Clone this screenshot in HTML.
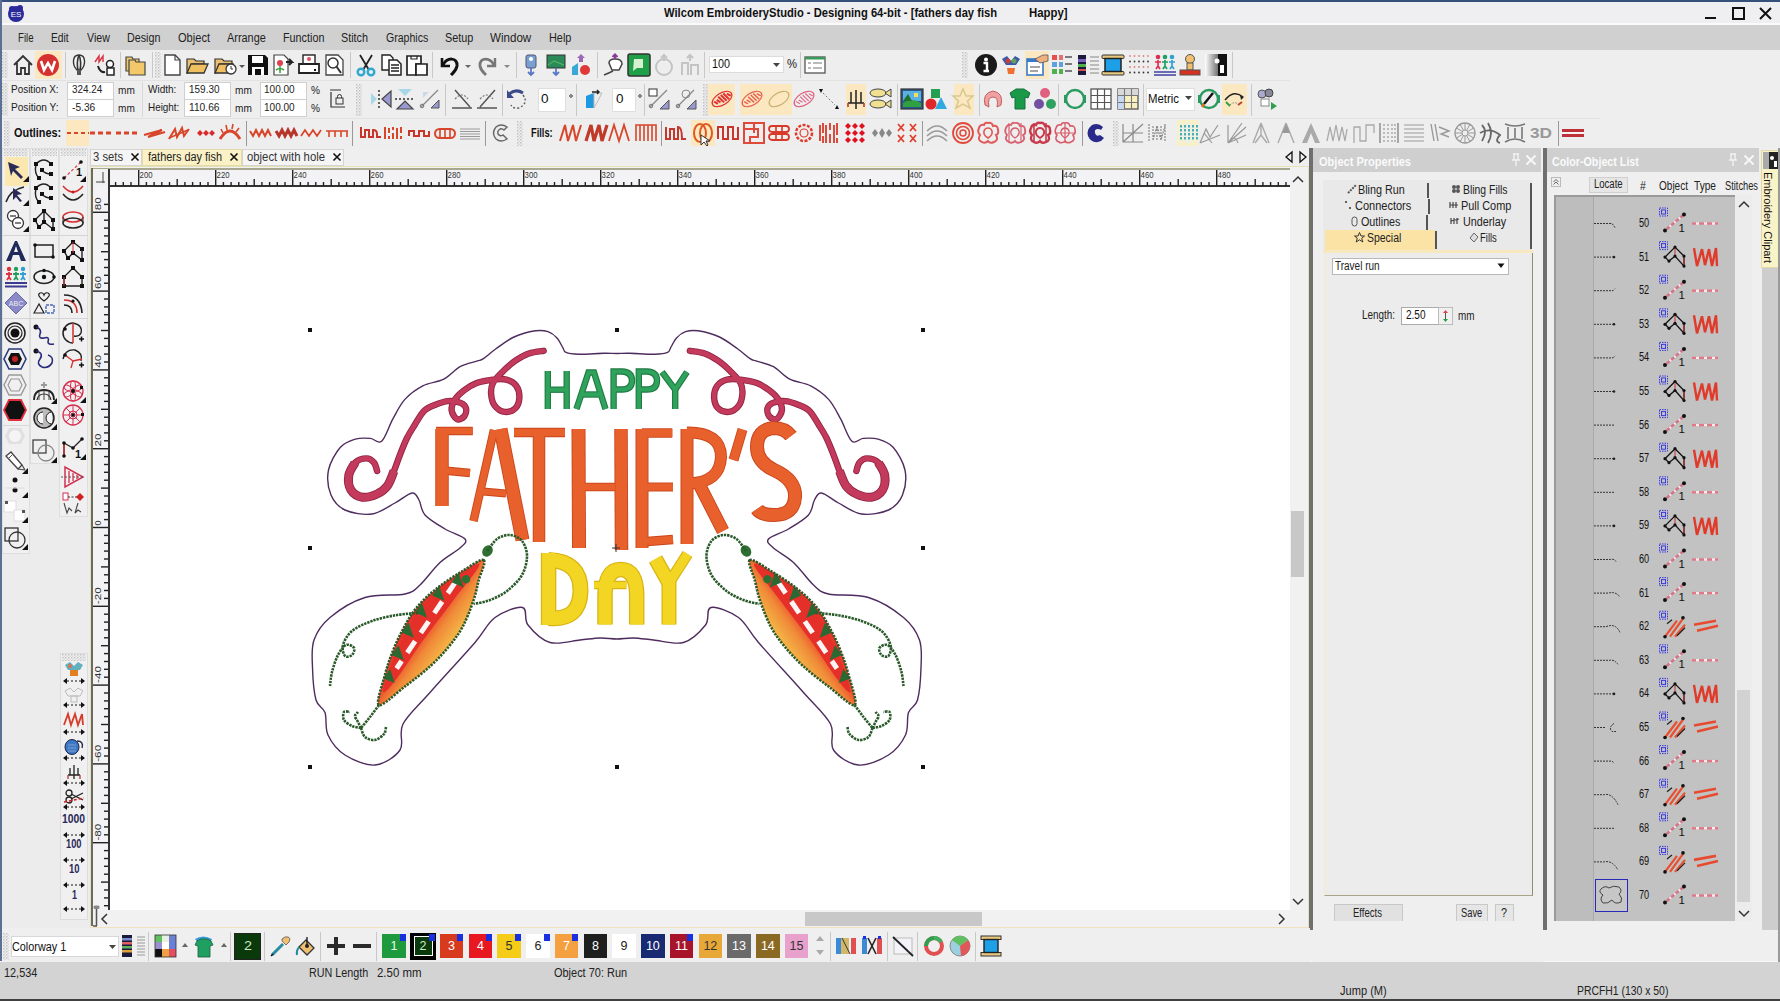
<!DOCTYPE html>
<html><head><meta charset="utf-8"><style>
html,body{margin:0;padding:0;width:1780px;height:1001px;overflow:hidden;background:#efefef}
body{position:relative;font-family:"Liberation Sans", sans-serif}
.t{position:absolute;white-space:nowrap;line-height:1;font-family:"Liberation Sans", sans-serif}
svg{overflow:visible}
</style></head><body>
<div style="position:absolute;left:0px;top:0px;width:1780px;height:1001px;background:#efefef"></div>
<div style="position:absolute;left:0px;top:0px;width:1780px;height:25px;background:#efeff1"></div>
<div style="position:absolute;left:0px;top:0px;width:1780px;height:1.5px;background:#35507a"></div>
<div style="position:absolute;left:0px;top:23px;width:1780px;height:1.5px;background:#fafafa"></div>
<div style="position:absolute;left:0px;top:24.5px;width:1780px;height:25.5px;background:#d0d0d0"></div>
<div style="position:absolute;left:0px;top:50px;width:1780px;height:98px;background:#eeeeee"></div>
<div style="position:absolute;left:0px;top:80px;width:1290px;height:1px;background:#e2e2e2"></div>
<div style="position:absolute;left:0px;top:118px;width:1600px;height:1px;background:#e2e2e2"></div>
<div style="position:absolute;left:0px;top:0px;width:2px;height:1001px;background:#5c6f94"></div>
<div style="position:absolute;left:0px;top:961px;width:1780px;height:40px;background:#d3d3d3"></div>
<div style="position:absolute;left:0px;top:999px;width:1780px;height:2px;background:#404040"></div>
<div style="position:absolute;left:0px;top:961px;width:1780px;height:1px;background:#f8f8f8"></div>
<div class="t" style="left:664.0px;top:6.6px;font-size:12.5px;color:#111;font-weight:bold;transform:scaleX(0.895);transform-origin:0 0;">Wilcom EmbroideryStudio - Designing 64-bit - [fathers day fish</div>
<div class="t" style="left:1029.0px;top:6.6px;font-size:12.5px;color:#111;font-weight:bold;transform:scaleX(0.911);transform-origin:0 0;">Happy]</div>
<svg style="position:absolute;left:6px;top:4px;" width="20" height="20" viewBox="0 0 20 20"><circle cx="10" cy="10" r="8" fill="#2a2a9a"/><circle cx="6" cy="5" r="3" fill="#2a2a9a"/><circle cx="14" cy="4" r="3" fill="#2a2a9a"/><text x="10" y="13" font-size="8" fill="#fff" text-anchor="middle" font-family="Liberation Sans">ES</text></svg>
<svg style="position:absolute;left:1703px;top:6px;" width="16" height="16" viewBox="0 0 16 16"><rect x="2" y="11" width="11" height="2" fill="#111"/></svg>
<svg style="position:absolute;left:1731px;top:6px;" width="16" height="16" viewBox="0 0 16 16"><rect x="2" y="2" width="11" height="11" fill="none" stroke="#111" stroke-width="2"/></svg>
<svg style="position:absolute;left:1758px;top:6px;" width="16" height="16" viewBox="0 0 16 16"><path d="M2 2L13 13M13 2L2 13" stroke="#111" stroke-width="2"/></svg>
<div class="t" style="left:18.2px;top:31.6px;font-size:12.5px;color:#222;font-weight:normal;transform:scaleX(0.770);transform-origin:0 0;">File</div>
<div class="t" style="left:51.4px;top:31.6px;font-size:12.5px;color:#222;font-weight:normal;transform:scaleX(0.822);transform-origin:0 0;">Edit</div>
<div class="t" style="left:86.8px;top:31.6px;font-size:12.5px;color:#222;font-weight:normal;transform:scaleX(0.849);transform-origin:0 0;">View</div>
<div class="t" style="left:126.7px;top:31.6px;font-size:12.5px;color:#222;font-weight:normal;transform:scaleX(0.858);transform-origin:0 0;">Design</div>
<div class="t" style="left:177.8px;top:31.6px;font-size:12.5px;color:#222;font-weight:normal;transform:scaleX(0.886);transform-origin:0 0;">Object</div>
<div class="t" style="left:226.7px;top:31.6px;font-size:12.5px;color:#222;font-weight:normal;transform:scaleX(0.873);transform-origin:0 0;">Arrange</div>
<div class="t" style="left:283.2px;top:31.6px;font-size:12.5px;color:#222;font-weight:normal;transform:scaleX(0.864);transform-origin:0 0;">Function</div>
<div class="t" style="left:341.4px;top:31.6px;font-size:12.5px;color:#222;font-weight:normal;transform:scaleX(0.864);transform-origin:0 0;">Stitch</div>
<div class="t" style="left:386.0px;top:31.6px;font-size:12.5px;color:#222;font-weight:normal;transform:scaleX(0.844);transform-origin:0 0;">Graphics</div>
<div class="t" style="left:445.0px;top:31.6px;font-size:12.5px;color:#222;font-weight:normal;transform:scaleX(0.869);transform-origin:0 0;">Setup</div>
<div class="t" style="left:490.2px;top:31.6px;font-size:12.5px;color:#222;font-weight:normal;transform:scaleX(0.927);transform-origin:0 0;">Window</div>
<div class="t" style="left:548.7px;top:31.6px;font-size:12.5px;color:#222;font-weight:normal;transform:scaleX(0.871);transform-origin:0 0;">Help</div>
<div class="t" style="left:11.1px;top:84.2px;font-size:11.5px;color:#222;font-weight:normal;transform:scaleX(0.866);transform-origin:0 0;">Position X:</div>
<div class="t" style="left:11.1px;top:102.0px;font-size:11.5px;color:#222;font-weight:normal;transform:scaleX(0.879);transform-origin:0 0;">Position Y:</div>
<div style="position:absolute;left:67.4px;top:82px;width:46.89999999999999px;height:17.5px;background:#fff;border:1px solid #cfcfcf;box-sizing:border-box"></div>
<div style="position:absolute;left:67.4px;top:99px;width:46.89999999999999px;height:17.5px;background:#fff;border:1px solid #cfcfcf;box-sizing:border-box"></div>
<div style="position:absolute;left:184px;top:82px;width:47.19999999999999px;height:17.5px;background:#fff;border:1px solid #cfcfcf;box-sizing:border-box"></div>
<div style="position:absolute;left:184px;top:99px;width:47.19999999999999px;height:17.5px;background:#fff;border:1px solid #cfcfcf;box-sizing:border-box"></div>
<div style="position:absolute;left:260.3px;top:82px;width:47.099999999999966px;height:17.5px;background:#fff;border:1px solid #cfcfcf;box-sizing:border-box"></div>
<div style="position:absolute;left:260.3px;top:99px;width:47.099999999999966px;height:17.5px;background:#fff;border:1px solid #cfcfcf;box-sizing:border-box"></div>
<div class="t" style="left:71.8px;top:84.2px;font-size:11.5px;color:#222;font-weight:normal;transform:scaleX(0.862);transform-origin:0 0;">324.24</div>
<div class="t" style="left:71.8px;top:102.0px;font-size:11.5px;color:#222;font-weight:normal;transform:scaleX(0.885);transform-origin:0 0;">-5.36</div>
<div class="t" style="left:118.3px;top:85.2px;font-size:11.5px;color:#222;font-weight:normal;transform:scaleX(0.877);transform-origin:0 0;">mm</div>
<div class="t" style="left:118.3px;top:103.0px;font-size:11.5px;color:#222;font-weight:normal;transform:scaleX(0.877);transform-origin:0 0;">mm</div>
<div style="position:absolute;left:142px;top:82px;width:1px;height:35px;background:#d8d8d8"></div>
<div class="t" style="left:147.7px;top:84.2px;font-size:11.5px;color:#222;font-weight:normal;transform:scaleX(0.868);transform-origin:0 0;">Width:</div>
<div class="t" style="left:147.7px;top:102.0px;font-size:11.5px;color:#222;font-weight:normal;transform:scaleX(0.859);transform-origin:0 0;">Height:</div>
<div class="t" style="left:188.5px;top:84.2px;font-size:11.5px;color:#222;font-weight:normal;transform:scaleX(0.867);transform-origin:0 0;">159.30</div>
<div class="t" style="left:188.5px;top:102.0px;font-size:11.5px;color:#222;font-weight:normal;transform:scaleX(0.889);transform-origin:0 0;">110.66</div>
<div class="t" style="left:234.6px;top:85.2px;font-size:11.5px;color:#222;font-weight:normal;transform:scaleX(0.877);transform-origin:0 0;">mm</div>
<div class="t" style="left:234.6px;top:103.0px;font-size:11.5px;color:#222;font-weight:normal;transform:scaleX(0.877);transform-origin:0 0;">mm</div>
<div class="t" style="left:264.4px;top:84.2px;font-size:11.5px;color:#222;font-weight:normal;transform:scaleX(0.870);transform-origin:0 0;">100.00</div>
<div class="t" style="left:264.4px;top:102.0px;font-size:11.5px;color:#222;font-weight:normal;transform:scaleX(0.870);transform-origin:0 0;">100.00</div>
<div class="t" style="left:311.0px;top:85.2px;font-size:11.5px;color:#222;font-weight:normal;transform:scaleX(0.880);transform-origin:0 0;">%</div>
<div class="t" style="left:311.0px;top:103.0px;font-size:11.5px;color:#222;font-weight:normal;transform:scaleX(0.880);transform-origin:0 0;">%</div>
<svg style="position:absolute;left:329px;top:88px;" width="17" height="22" viewBox="0 0 17 22"><path d="M1 2H12M2 4V19H16" fill="none" stroke="#333" stroke-width="1.2"/><rect x="7" y="10" width="7" height="6" fill="none" stroke="#333"/><path d="M8.5 10V8.5A2 2 0 0 1 12.5 8.5V10" fill="none" stroke="#333"/></svg>
<div class="t" style="left:3.7px;top:967.4px;font-size:12px;color:#222;font-weight:normal;transform:scaleX(0.907);transform-origin:0 0;">12,534</div>
<div class="t" style="left:308.5px;top:967.4px;font-size:12px;color:#222;font-weight:normal;transform:scaleX(0.898);transform-origin:0 0;">RUN Length</div>
<div class="t" style="left:377.0px;top:967.4px;font-size:12px;color:#222;font-weight:normal;transform:scaleX(0.955);transform-origin:0 0;">2.50 mm</div>
<div class="t" style="left:554.3px;top:967.4px;font-size:12px;color:#222;font-weight:normal;transform:scaleX(0.913);transform-origin:0 0;">Object 70: Run</div>
<div class="t" style="left:1340.0px;top:985.4px;font-size:12px;color:#222;font-weight:normal;transform:scaleX(0.922);transform-origin:0 0;">Jump (M)</div>
<div class="t" style="left:1577.0px;top:985.4px;font-size:12px;color:#222;font-weight:normal;transform:scaleX(0.867);transform-origin:0 0;">PRCFH1 (130 x 50)</div>
<div style="position:absolute;left:2px;top:148px;width:88px;height:20px;background:#efefef"></div>
<div style="position:absolute;left:90px;top:149px;width:52px;height:17px;background:#f5f5f5;border:1px solid #d4d4d4;box-sizing:border-box"></div>
<div style="position:absolute;left:142px;top:149px;width:100px;height:17px;background:#fbf1c6;border:1px solid #e4d9a8;box-sizing:border-box"></div>
<div style="position:absolute;left:242px;top:149px;width:102px;height:17px;background:#f5f5f5;border:1px solid #d4d4d4;box-sizing:border-box"></div>
<div class="t" style="left:93.0px;top:150.6px;font-size:12.5px;color:#333;font-weight:normal;transform:scaleX(0.900);transform-origin:0 0;">3 sets</div>
<div class="t" style="left:148.0px;top:150.6px;font-size:12.5px;color:#222;font-weight:normal;transform:scaleX(0.873);transform-origin:0 0;">fathers day fish</div>
<div class="t" style="left:247.0px;top:150.6px;font-size:12.5px;color:#333;font-weight:normal;transform:scaleX(0.905);transform-origin:0 0;">object with hole</div>
<svg style="position:absolute;left:129.5px;top:152px;" width="10" height="10" viewBox="0 0 10 10"><path d="M1.5 1.5L8.5 8.5M8.5 1.5L1.5 8.5" stroke="#111" stroke-width="1.6"/></svg>
<svg style="position:absolute;left:228.7px;top:152px;" width="10" height="10" viewBox="0 0 10 10"><path d="M1.5 1.5L8.5 8.5M8.5 1.5L1.5 8.5" stroke="#111" stroke-width="1.6"/></svg>
<svg style="position:absolute;left:331.7px;top:152px;" width="10" height="10" viewBox="0 0 10 10"><path d="M1.5 1.5L8.5 8.5M8.5 1.5L1.5 8.5" stroke="#111" stroke-width="1.6"/></svg>
<svg style="position:absolute;left:1284px;top:151px;" width="10" height="12" viewBox="0 0 10 12"><path d="M8 1L2 6L8 11Z" fill="none" stroke="#111" stroke-width="1.3"/></svg>
<svg style="position:absolute;left:1298px;top:151px;" width="10" height="12" viewBox="0 0 10 12"><path d="M2 1L8 6L2 11Z" fill="none" stroke="#111" stroke-width="1.3"/></svg>
<div style="position:absolute;left:90px;top:166px;width:1220px;height:762px;background:#f1f1f1"></div>
<div style="position:absolute;left:90px;top:166px;width:1220px;height:1px;background:#e6e2b8"></div>
<div style="position:absolute;left:90px;top:166px;width:1px;height:762px;background:#e6e2b8"></div>
<div style="position:absolute;left:1308px;top:166px;width:1px;height:762px;background:#e6e2b8"></div>
<div style="position:absolute;left:90px;top:927px;width:1220px;height:1px;background:#f0e2c0"></div>
<div style="position:absolute;left:109px;top:186px;width:1181px;height:724px;background:#ffffff"></div>
<div style="position:absolute;left:91px;top:169px;width:1199px;height:17px;background:#f3f3f6"></div>
<div style="position:absolute;left:91px;top:168px;width:1199px;height:1.5px;background:#a8a890"></div>
<div style="position:absolute;left:91px;top:185px;width:1199px;height:1.5px;background:#333"></div>
<div style="position:absolute;left:91px;top:169px;width:18px;height:741px;background:#f3f3f6"></div>
<div style="position:absolute;left:91px;top:168px;width:1.5px;height:742px;background:#8a8a78"></div>
<div style="position:absolute;left:108px;top:169px;width:1.5px;height:741px;background:#333"></div>
<svg style="position:absolute;left:0px;top:0px;pointer-events:none" width="1780" height="200" viewBox="0 0 1780 200"><rect x="114.9" y="182" width="1.4" height="4" fill="#222"/><rect x="122.6" y="182" width="1.4" height="4" fill="#222"/><rect x="130.3" y="182" width="1.4" height="4" fill="#222"/><rect x="138.0" y="170" width="1.4" height="16" fill="#222"/><rect x="145.7" y="182" width="1.4" height="4" fill="#222"/><rect x="153.4" y="182" width="1.4" height="4" fill="#222"/><rect x="161.1" y="182" width="1.4" height="4" fill="#222"/><rect x="168.8" y="182" width="1.4" height="4" fill="#222"/><rect x="176.5" y="179" width="1.4" height="7" fill="#222"/><rect x="184.2" y="182" width="1.4" height="4" fill="#222"/><rect x="191.9" y="182" width="1.4" height="4" fill="#222"/><rect x="199.6" y="182" width="1.4" height="4" fill="#222"/><rect x="207.3" y="182" width="1.4" height="4" fill="#222"/><rect x="215.0" y="170" width="1.4" height="16" fill="#222"/><rect x="222.7" y="182" width="1.4" height="4" fill="#222"/><rect x="230.4" y="182" width="1.4" height="4" fill="#222"/><rect x="238.1" y="182" width="1.4" height="4" fill="#222"/><rect x="245.8" y="182" width="1.4" height="4" fill="#222"/><rect x="253.5" y="179" width="1.4" height="7" fill="#222"/><rect x="261.2" y="182" width="1.4" height="4" fill="#222"/><rect x="268.9" y="182" width="1.4" height="4" fill="#222"/><rect x="276.6" y="182" width="1.4" height="4" fill="#222"/><rect x="284.3" y="182" width="1.4" height="4" fill="#222"/><rect x="292.0" y="170" width="1.4" height="16" fill="#222"/><rect x="299.7" y="182" width="1.4" height="4" fill="#222"/><rect x="307.4" y="182" width="1.4" height="4" fill="#222"/><rect x="315.1" y="182" width="1.4" height="4" fill="#222"/><rect x="322.8" y="182" width="1.4" height="4" fill="#222"/><rect x="330.5" y="179" width="1.4" height="7" fill="#222"/><rect x="338.2" y="182" width="1.4" height="4" fill="#222"/><rect x="345.9" y="182" width="1.4" height="4" fill="#222"/><rect x="353.6" y="182" width="1.4" height="4" fill="#222"/><rect x="361.3" y="182" width="1.4" height="4" fill="#222"/><rect x="369.0" y="170" width="1.4" height="16" fill="#222"/><rect x="376.7" y="182" width="1.4" height="4" fill="#222"/><rect x="384.4" y="182" width="1.4" height="4" fill="#222"/><rect x="392.1" y="182" width="1.4" height="4" fill="#222"/><rect x="399.8" y="182" width="1.4" height="4" fill="#222"/><rect x="407.5" y="179" width="1.4" height="7" fill="#222"/><rect x="415.2" y="182" width="1.4" height="4" fill="#222"/><rect x="422.9" y="182" width="1.4" height="4" fill="#222"/><rect x="430.6" y="182" width="1.4" height="4" fill="#222"/><rect x="438.3" y="182" width="1.4" height="4" fill="#222"/><rect x="446.0" y="170" width="1.4" height="16" fill="#222"/><rect x="453.7" y="182" width="1.4" height="4" fill="#222"/><rect x="461.4" y="182" width="1.4" height="4" fill="#222"/><rect x="469.1" y="182" width="1.4" height="4" fill="#222"/><rect x="476.8" y="182" width="1.4" height="4" fill="#222"/><rect x="484.5" y="179" width="1.4" height="7" fill="#222"/><rect x="492.2" y="182" width="1.4" height="4" fill="#222"/><rect x="499.9" y="182" width="1.4" height="4" fill="#222"/><rect x="507.6" y="182" width="1.4" height="4" fill="#222"/><rect x="515.3" y="182" width="1.4" height="4" fill="#222"/><rect x="523.0" y="170" width="1.4" height="16" fill="#222"/><rect x="530.7" y="182" width="1.4" height="4" fill="#222"/><rect x="538.4" y="182" width="1.4" height="4" fill="#222"/><rect x="546.1" y="182" width="1.4" height="4" fill="#222"/><rect x="553.8" y="182" width="1.4" height="4" fill="#222"/><rect x="561.5" y="179" width="1.4" height="7" fill="#222"/><rect x="569.2" y="182" width="1.4" height="4" fill="#222"/><rect x="576.9" y="182" width="1.4" height="4" fill="#222"/><rect x="584.6" y="182" width="1.4" height="4" fill="#222"/><rect x="592.3" y="182" width="1.4" height="4" fill="#222"/><rect x="600.0" y="170" width="1.4" height="16" fill="#222"/><rect x="607.7" y="182" width="1.4" height="4" fill="#222"/><rect x="615.4" y="182" width="1.4" height="4" fill="#222"/><rect x="623.1" y="182" width="1.4" height="4" fill="#222"/><rect x="630.8" y="182" width="1.4" height="4" fill="#222"/><rect x="638.5" y="179" width="1.4" height="7" fill="#222"/><rect x="646.2" y="182" width="1.4" height="4" fill="#222"/><rect x="653.9" y="182" width="1.4" height="4" fill="#222"/><rect x="661.6" y="182" width="1.4" height="4" fill="#222"/><rect x="669.3" y="182" width="1.4" height="4" fill="#222"/><rect x="677.0" y="170" width="1.4" height="16" fill="#222"/><rect x="684.7" y="182" width="1.4" height="4" fill="#222"/><rect x="692.4" y="182" width="1.4" height="4" fill="#222"/><rect x="700.1" y="182" width="1.4" height="4" fill="#222"/><rect x="707.8" y="182" width="1.4" height="4" fill="#222"/><rect x="715.5" y="179" width="1.4" height="7" fill="#222"/><rect x="723.2" y="182" width="1.4" height="4" fill="#222"/><rect x="730.9" y="182" width="1.4" height="4" fill="#222"/><rect x="738.6" y="182" width="1.4" height="4" fill="#222"/><rect x="746.3" y="182" width="1.4" height="4" fill="#222"/><rect x="754.0" y="170" width="1.4" height="16" fill="#222"/><rect x="761.7" y="182" width="1.4" height="4" fill="#222"/><rect x="769.4" y="182" width="1.4" height="4" fill="#222"/><rect x="777.1" y="182" width="1.4" height="4" fill="#222"/><rect x="784.8" y="182" width="1.4" height="4" fill="#222"/><rect x="792.5" y="179" width="1.4" height="7" fill="#222"/><rect x="800.2" y="182" width="1.4" height="4" fill="#222"/><rect x="807.9" y="182" width="1.4" height="4" fill="#222"/><rect x="815.6" y="182" width="1.4" height="4" fill="#222"/><rect x="823.3" y="182" width="1.4" height="4" fill="#222"/><rect x="831.0" y="170" width="1.4" height="16" fill="#222"/><rect x="838.7" y="182" width="1.4" height="4" fill="#222"/><rect x="846.4" y="182" width="1.4" height="4" fill="#222"/><rect x="854.1" y="182" width="1.4" height="4" fill="#222"/><rect x="861.8" y="182" width="1.4" height="4" fill="#222"/><rect x="869.5" y="179" width="1.4" height="7" fill="#222"/><rect x="877.2" y="182" width="1.4" height="4" fill="#222"/><rect x="884.9" y="182" width="1.4" height="4" fill="#222"/><rect x="892.6" y="182" width="1.4" height="4" fill="#222"/><rect x="900.3" y="182" width="1.4" height="4" fill="#222"/><rect x="908.0" y="170" width="1.4" height="16" fill="#222"/><rect x="915.7" y="182" width="1.4" height="4" fill="#222"/><rect x="923.4" y="182" width="1.4" height="4" fill="#222"/><rect x="931.1" y="182" width="1.4" height="4" fill="#222"/><rect x="938.8" y="182" width="1.4" height="4" fill="#222"/><rect x="946.5" y="179" width="1.4" height="7" fill="#222"/><rect x="954.2" y="182" width="1.4" height="4" fill="#222"/><rect x="961.9" y="182" width="1.4" height="4" fill="#222"/><rect x="969.6" y="182" width="1.4" height="4" fill="#222"/><rect x="977.3" y="182" width="1.4" height="4" fill="#222"/><rect x="985.0" y="170" width="1.4" height="16" fill="#222"/><rect x="992.7" y="182" width="1.4" height="4" fill="#222"/><rect x="1000.4" y="182" width="1.4" height="4" fill="#222"/><rect x="1008.1" y="182" width="1.4" height="4" fill="#222"/><rect x="1015.8" y="182" width="1.4" height="4" fill="#222"/><rect x="1023.5" y="179" width="1.4" height="7" fill="#222"/><rect x="1031.2" y="182" width="1.4" height="4" fill="#222"/><rect x="1038.9" y="182" width="1.4" height="4" fill="#222"/><rect x="1046.6" y="182" width="1.4" height="4" fill="#222"/><rect x="1054.3" y="182" width="1.4" height="4" fill="#222"/><rect x="1062.0" y="170" width="1.4" height="16" fill="#222"/><rect x="1069.7" y="182" width="1.4" height="4" fill="#222"/><rect x="1077.4" y="182" width="1.4" height="4" fill="#222"/><rect x="1085.1" y="182" width="1.4" height="4" fill="#222"/><rect x="1092.8" y="182" width="1.4" height="4" fill="#222"/><rect x="1100.5" y="179" width="1.4" height="7" fill="#222"/><rect x="1108.2" y="182" width="1.4" height="4" fill="#222"/><rect x="1115.9" y="182" width="1.4" height="4" fill="#222"/><rect x="1123.6" y="182" width="1.4" height="4" fill="#222"/><rect x="1131.3" y="182" width="1.4" height="4" fill="#222"/><rect x="1139.0" y="170" width="1.4" height="16" fill="#222"/><rect x="1146.7" y="182" width="1.4" height="4" fill="#222"/><rect x="1154.4" y="182" width="1.4" height="4" fill="#222"/><rect x="1162.1" y="182" width="1.4" height="4" fill="#222"/><rect x="1169.8" y="182" width="1.4" height="4" fill="#222"/><rect x="1177.5" y="179" width="1.4" height="7" fill="#222"/><rect x="1185.2" y="182" width="1.4" height="4" fill="#222"/><rect x="1192.9" y="182" width="1.4" height="4" fill="#222"/><rect x="1200.6" y="182" width="1.4" height="4" fill="#222"/><rect x="1208.3" y="182" width="1.4" height="4" fill="#222"/><rect x="1216.0" y="170" width="1.4" height="16" fill="#222"/><rect x="1223.7" y="182" width="1.4" height="4" fill="#222"/><rect x="1231.4" y="182" width="1.4" height="4" fill="#222"/><rect x="1239.1" y="182" width="1.4" height="4" fill="#222"/><rect x="1246.8" y="182" width="1.4" height="4" fill="#222"/><rect x="1254.5" y="179" width="1.4" height="7" fill="#222"/><rect x="1262.2" y="182" width="1.4" height="4" fill="#222"/><rect x="1269.9" y="182" width="1.4" height="4" fill="#222"/><rect x="1277.6" y="182" width="1.4" height="4" fill="#222"/><rect x="1285.3" y="182" width="1.4" height="4" fill="#222"/><text x="139.6" y="178" font-size="9.5" fill="#333" font-family="Liberation Sans" textLength="13" lengthAdjust="spacingAndGlyphs">200</text><text x="216.6" y="178" font-size="9.5" fill="#333" font-family="Liberation Sans" textLength="13" lengthAdjust="spacingAndGlyphs">220</text><text x="293.6" y="178" font-size="9.5" fill="#333" font-family="Liberation Sans" textLength="13" lengthAdjust="spacingAndGlyphs">240</text><text x="370.6" y="178" font-size="9.5" fill="#333" font-family="Liberation Sans" textLength="13" lengthAdjust="spacingAndGlyphs">260</text><text x="447.6" y="178" font-size="9.5" fill="#333" font-family="Liberation Sans" textLength="13" lengthAdjust="spacingAndGlyphs">280</text><text x="524.6" y="178" font-size="9.5" fill="#333" font-family="Liberation Sans" textLength="13" lengthAdjust="spacingAndGlyphs">300</text><text x="601.6" y="178" font-size="9.5" fill="#333" font-family="Liberation Sans" textLength="13" lengthAdjust="spacingAndGlyphs">320</text><text x="678.6" y="178" font-size="9.5" fill="#333" font-family="Liberation Sans" textLength="13" lengthAdjust="spacingAndGlyphs">340</text><text x="755.6" y="178" font-size="9.5" fill="#333" font-family="Liberation Sans" textLength="13" lengthAdjust="spacingAndGlyphs">360</text><text x="832.6" y="178" font-size="9.5" fill="#333" font-family="Liberation Sans" textLength="13" lengthAdjust="spacingAndGlyphs">380</text><text x="909.6" y="178" font-size="9.5" fill="#333" font-family="Liberation Sans" textLength="13" lengthAdjust="spacingAndGlyphs">400</text><text x="986.6" y="178" font-size="9.5" fill="#333" font-family="Liberation Sans" textLength="13" lengthAdjust="spacingAndGlyphs">420</text><text x="1063.6" y="178" font-size="9.5" fill="#333" font-family="Liberation Sans" textLength="13" lengthAdjust="spacingAndGlyphs">440</text><text x="1140.6" y="178" font-size="9.5" fill="#333" font-family="Liberation Sans" textLength="13" lengthAdjust="spacingAndGlyphs">460</text><text x="1217.6" y="178" font-size="9.5" fill="#333" font-family="Liberation Sans" textLength="13" lengthAdjust="spacingAndGlyphs">480</text></svg>
<svg style="position:absolute;left:92px;top:170px;" width="16" height="15" viewBox="0 0 16 15"><rect x="0" y="0" width="16" height="15" fill="#f1f1f1"/><path d="M11 2V13M4 12H13" stroke="#444" stroke-width="1"/></svg>
<svg style="position:absolute;left:0px;top:0px;" width="120" height="1000" viewBox="0 0 120 1000"><rect x="104" y="905.0" width="4" height="1.4" fill="#222"/><rect x="104" y="897.2" width="4" height="1.4" fill="#222"/><rect x="104" y="889.3" width="4" height="1.4" fill="#222"/><rect x="101" y="881.4" width="7" height="1.4" fill="#222"/><rect x="104" y="873.5" width="4" height="1.4" fill="#222"/><rect x="104" y="865.6" width="4" height="1.4" fill="#222"/><rect x="104" y="857.8" width="4" height="1.4" fill="#222"/><rect x="104" y="849.9" width="4" height="1.4" fill="#222"/><rect x="91" y="842.0" width="17" height="1.4" fill="#222"/><rect x="104" y="834.1" width="4" height="1.4" fill="#222"/><rect x="104" y="826.2" width="4" height="1.4" fill="#222"/><rect x="104" y="818.4" width="4" height="1.4" fill="#222"/><rect x="104" y="810.5" width="4" height="1.4" fill="#222"/><rect x="101" y="802.6" width="7" height="1.4" fill="#222"/><rect x="104" y="794.7" width="4" height="1.4" fill="#222"/><rect x="104" y="786.8" width="4" height="1.4" fill="#222"/><rect x="104" y="779.0" width="4" height="1.4" fill="#222"/><rect x="104" y="771.1" width="4" height="1.4" fill="#222"/><rect x="91" y="763.2" width="17" height="1.4" fill="#222"/><rect x="104" y="755.3" width="4" height="1.4" fill="#222"/><rect x="104" y="747.4" width="4" height="1.4" fill="#222"/><rect x="104" y="739.6" width="4" height="1.4" fill="#222"/><rect x="104" y="731.7" width="4" height="1.4" fill="#222"/><rect x="101" y="723.8" width="7" height="1.4" fill="#222"/><rect x="104" y="715.9" width="4" height="1.4" fill="#222"/><rect x="104" y="708.0" width="4" height="1.4" fill="#222"/><rect x="104" y="700.2" width="4" height="1.4" fill="#222"/><rect x="104" y="692.3" width="4" height="1.4" fill="#222"/><rect x="91" y="684.4" width="17" height="1.4" fill="#222"/><rect x="104" y="676.5" width="4" height="1.4" fill="#222"/><rect x="104" y="668.6" width="4" height="1.4" fill="#222"/><rect x="104" y="660.8" width="4" height="1.4" fill="#222"/><rect x="104" y="652.9" width="4" height="1.4" fill="#222"/><rect x="101" y="645.0" width="7" height="1.4" fill="#222"/><rect x="104" y="637.1" width="4" height="1.4" fill="#222"/><rect x="104" y="629.2" width="4" height="1.4" fill="#222"/><rect x="104" y="621.4" width="4" height="1.4" fill="#222"/><rect x="104" y="613.5" width="4" height="1.4" fill="#222"/><rect x="91" y="605.6" width="17" height="1.4" fill="#222"/><rect x="104" y="597.7" width="4" height="1.4" fill="#222"/><rect x="104" y="589.8" width="4" height="1.4" fill="#222"/><rect x="104" y="582.0" width="4" height="1.4" fill="#222"/><rect x="104" y="574.1" width="4" height="1.4" fill="#222"/><rect x="101" y="566.2" width="7" height="1.4" fill="#222"/><rect x="104" y="558.3" width="4" height="1.4" fill="#222"/><rect x="104" y="550.4" width="4" height="1.4" fill="#222"/><rect x="104" y="542.6" width="4" height="1.4" fill="#222"/><rect x="104" y="534.7" width="4" height="1.4" fill="#222"/><rect x="91" y="526.8" width="17" height="1.4" fill="#222"/><rect x="104" y="518.9" width="4" height="1.4" fill="#222"/><rect x="104" y="511.0" width="4" height="1.4" fill="#222"/><rect x="104" y="503.2" width="4" height="1.4" fill="#222"/><rect x="104" y="495.3" width="4" height="1.4" fill="#222"/><rect x="101" y="487.4" width="7" height="1.4" fill="#222"/><rect x="104" y="479.5" width="4" height="1.4" fill="#222"/><rect x="104" y="471.6" width="4" height="1.4" fill="#222"/><rect x="104" y="463.8" width="4" height="1.4" fill="#222"/><rect x="104" y="455.9" width="4" height="1.4" fill="#222"/><rect x="91" y="448.0" width="17" height="1.4" fill="#222"/><rect x="104" y="440.1" width="4" height="1.4" fill="#222"/><rect x="104" y="432.2" width="4" height="1.4" fill="#222"/><rect x="104" y="424.4" width="4" height="1.4" fill="#222"/><rect x="104" y="416.5" width="4" height="1.4" fill="#222"/><rect x="101" y="408.6" width="7" height="1.4" fill="#222"/><rect x="104" y="400.7" width="4" height="1.4" fill="#222"/><rect x="104" y="392.8" width="4" height="1.4" fill="#222"/><rect x="104" y="385.0" width="4" height="1.4" fill="#222"/><rect x="104" y="377.1" width="4" height="1.4" fill="#222"/><rect x="91" y="369.2" width="17" height="1.4" fill="#222"/><rect x="104" y="361.3" width="4" height="1.4" fill="#222"/><rect x="104" y="353.4" width="4" height="1.4" fill="#222"/><rect x="104" y="345.6" width="4" height="1.4" fill="#222"/><rect x="104" y="337.7" width="4" height="1.4" fill="#222"/><rect x="101" y="329.8" width="7" height="1.4" fill="#222"/><rect x="104" y="321.9" width="4" height="1.4" fill="#222"/><rect x="104" y="314.0" width="4" height="1.4" fill="#222"/><rect x="104" y="306.2" width="4" height="1.4" fill="#222"/><rect x="104" y="298.3" width="4" height="1.4" fill="#222"/><rect x="91" y="290.4" width="17" height="1.4" fill="#222"/><rect x="104" y="282.5" width="4" height="1.4" fill="#222"/><rect x="104" y="274.6" width="4" height="1.4" fill="#222"/><rect x="104" y="266.8" width="4" height="1.4" fill="#222"/><rect x="104" y="258.9" width="4" height="1.4" fill="#222"/><rect x="101" y="251.0" width="7" height="1.4" fill="#222"/><rect x="104" y="243.1" width="4" height="1.4" fill="#222"/><rect x="104" y="235.2" width="4" height="1.4" fill="#222"/><rect x="104" y="227.4" width="4" height="1.4" fill="#222"/><rect x="104" y="219.5" width="4" height="1.4" fill="#222"/><rect x="91" y="211.6" width="17" height="1.4" fill="#222"/><rect x="104" y="203.7" width="4" height="1.4" fill="#222"/><text x="0" y="0" transform="translate(100.5,840.6) rotate(-90)" font-size="9.5" fill="#333" font-family="Liberation Sans" textLength="17" lengthAdjust="spacingAndGlyphs">-80</text><text x="0" y="0" transform="translate(100.5,761.8) rotate(-90)" font-size="9.5" fill="#333" font-family="Liberation Sans" textLength="17" lengthAdjust="spacingAndGlyphs">-60</text><text x="0" y="0" transform="translate(100.5,683.0) rotate(-90)" font-size="9.5" fill="#333" font-family="Liberation Sans" textLength="17" lengthAdjust="spacingAndGlyphs">-40</text><text x="0" y="0" transform="translate(100.5,604.2) rotate(-90)" font-size="9.5" fill="#333" font-family="Liberation Sans" textLength="17" lengthAdjust="spacingAndGlyphs">-20</text><text x="0" y="0" transform="translate(100.5,525.4) rotate(-90)" font-size="9.5" fill="#333" font-family="Liberation Sans" textLength="5" lengthAdjust="spacingAndGlyphs">0</text><text x="0" y="0" transform="translate(100.5,446.6) rotate(-90)" font-size="9.5" fill="#333" font-family="Liberation Sans" textLength="13" lengthAdjust="spacingAndGlyphs">20</text><text x="0" y="0" transform="translate(100.5,367.8) rotate(-90)" font-size="9.5" fill="#333" font-family="Liberation Sans" textLength="13" lengthAdjust="spacingAndGlyphs">40</text><text x="0" y="0" transform="translate(100.5,289.0) rotate(-90)" font-size="9.5" fill="#333" font-family="Liberation Sans" textLength="13" lengthAdjust="spacingAndGlyphs">60</text><text x="0" y="0" transform="translate(100.5,210.2) rotate(-90)" font-size="9.5" fill="#333" font-family="Liberation Sans" textLength="13" lengthAdjust="spacingAndGlyphs">80</text></svg>
<div style="position:absolute;left:1290px;top:186px;width:18px;height:724px;background:#f1f1f1"></div>
<div style="position:absolute;left:1291px;top:511px;width:13px;height:66px;background:#c8c8c8"></div>
<svg style="position:absolute;left:1291px;top:175px;" width="14" height="10" viewBox="0 0 14 10"><path d="M2 7L7 2L12 7" fill="none" stroke="#333" stroke-width="1.5"/></svg>
<svg style="position:absolute;left:1291px;top:896px;" width="14" height="10" viewBox="0 0 14 10"><path d="M2 3L7 8L12 3" fill="none" stroke="#333" stroke-width="1.5"/></svg>
<div style="position:absolute;left:109px;top:910px;width:1181px;height:17px;background:#f1f1f1"></div>
<div style="position:absolute;left:805px;top:912px;width:177px;height:14px;background:#c8c8c8"></div>
<svg style="position:absolute;left:100px;top:912px;" width="10" height="14" viewBox="0 0 10 14"><path d="M7 2L2 7L7 12" fill="none" stroke="#333" stroke-width="1.5"/></svg>
<svg style="position:absolute;left:1276px;top:912px;" width="10" height="14" viewBox="0 0 10 14"><path d="M3 2L8 7L3 12" fill="none" stroke="#333" stroke-width="1.5"/></svg>
<div style="position:absolute;left:91px;top:168px;width:1.5px;height:758px;background:#6a6a60"></div>
<svg style="position:absolute;left:92px;top:904px;" width="8" height="23" viewBox="0 0 8 23"><path d="M4.5 4V22M1 22H5" stroke="#555" stroke-width="1.5"/><rect x="1.5" y="1.5" width="6" height="3.5" rx="1.5" fill="#888"/></svg>
<div style="position:absolute;left:1309px;top:148px;width:4px;height:782px;background:#6f6f6f"></div>
<div style="position:absolute;left:1313px;top:148px;width:230px;height:813px;background:#efefef"></div>
<div style="position:absolute;left:1313px;top:148px;width:228px;height:24px;background:#cfcfcf"></div>
<div class="t" style="left:1319.0px;top:154.8px;font-size:13px;color:#fafafa;font-weight:bold;transform:scaleX(0.849);transform-origin:0 0;">Object Properties</div>
<svg style="position:absolute;left:1510px;top:153px;" width="12" height="14" viewBox="0 0 12 14"><path d="M3 1H9M4 1V7H8V1M2 7H10M6 7V13" stroke="#f4f4f4" stroke-width="1.3" fill="none"/></svg>
<svg style="position:absolute;left:1525px;top:154px;" width="12" height="12" viewBox="0 0 12 12"><path d="M1.5 1.5L10.5 10.5M10.5 1.5L1.5 10.5" stroke="#f8f8f8" stroke-width="1.8"/></svg>
<div style="position:absolute;left:1323px;top:180px;width:209px;height:71px;background:#e9e9e9"></div>
<div style="position:absolute;left:1325px;top:230px;width:110px;height:20px;background:#fbe3a6"></div>
<div style="position:absolute;left:1323px;top:250px;width:210px;height:3px;background:#f8e8c0"></div>
<div class="t" style="left:1358.4px;top:183.7px;font-size:12px;color:#222;font-weight:normal;transform:scaleX(0.899);transform-origin:0 0;">Bling Run</div>
<div class="t" style="left:1354.8px;top:199.7px;font-size:12px;color:#222;font-weight:normal;transform:scaleX(0.916);transform-origin:0 0;">Connectors</div>
<div class="t" style="left:1361.3px;top:215.8px;font-size:12px;color:#222;font-weight:normal;transform:scaleX(0.897);transform-origin:0 0;">Outlines</div>
<div class="t" style="left:1367.2px;top:231.9px;font-size:12px;color:#222;font-weight:normal;transform:scaleX(0.872);transform-origin:0 0;">Special</div>
<div class="t" style="left:1462.9px;top:183.7px;font-size:12px;color:#222;font-weight:normal;transform:scaleX(0.867);transform-origin:0 0;">Bling Fills</div>
<div class="t" style="left:1460.7px;top:199.7px;font-size:12px;color:#222;font-weight:normal;transform:scaleX(0.909);transform-origin:0 0;">Pull Comp</div>
<div class="t" style="left:1462.9px;top:215.8px;font-size:12px;color:#222;font-weight:normal;transform:scaleX(0.898);transform-origin:0 0;">Underlay</div>
<div class="t" style="left:1480.4px;top:231.9px;font-size:12px;color:#222;font-weight:normal;transform:scaleX(0.788);transform-origin:0 0;">Fills</div>
<div style="position:absolute;left:1427px;top:183px;width:1.5px;height:15px;background:#555"></div>
<div style="position:absolute;left:1428px;top:199px;width:1.5px;height:15px;background:#555"></div>
<div style="position:absolute;left:1426px;top:215px;width:1.5px;height:15px;background:#555"></div>
<div style="position:absolute;left:1435px;top:231px;width:1.5px;height:18px;background:#555"></div>
<div style="position:absolute;left:1530px;top:183px;width:1.5px;height:66px;background:#555"></div>
<svg style="position:absolute;left:1347px;top:184px;" width="10" height="10" viewBox="0 0 10 10"><path d="M1 9L9 1" stroke="#555" stroke-width="2" stroke-dasharray="2 1"/></svg>
<svg style="position:absolute;left:1344px;top:200px;" width="8" height="10" viewBox="0 0 8 10"><circle cx="2" cy="2" r="1" fill="#333"/><circle cx="6" cy="8" r="1" fill="#333"/></svg>
<svg style="position:absolute;left:1351px;top:216px;" width="7" height="11" viewBox="0 0 7 11"><rect x="1" y="1" width="5" height="9" rx="2.5" fill="none" stroke="#555"/></svg>
<svg style="position:absolute;left:1354px;top:232px;" width="11" height="11" viewBox="0 0 11 11"><path d="M5.5 0.5L7 4H10.5L7.7 6.3L8.8 10L5.5 7.8L2.2 10L3.3 6.3L0.5 4H4Z" fill="none" stroke="#333" stroke-width="1"/></svg>
<svg style="position:absolute;left:1451px;top:184px;" width="10" height="10" viewBox="0 0 10 10"><circle cx="3" cy="3" r="2" fill="#555"/><circle cx="7" cy="3" r="2" fill="#555"/><circle cx="3" cy="7" r="2" fill="#555"/><circle cx="7" cy="7" r="2" fill="#555"/></svg>
<svg style="position:absolute;left:1449px;top:200px;" width="10" height="10" viewBox="0 0 10 10"><path d="M1 2V8M4 2V8M7 2V8M1 5H9" stroke="#444" stroke-width="1.2"/></svg>
<svg style="position:absolute;left:1450px;top:216px;" width="10" height="10" viewBox="0 0 10 10"><path d="M1 2V8M4 2V8M7 2V8M1 5L9 3" stroke="#444" stroke-width="1.2"/></svg>
<svg style="position:absolute;left:1468px;top:232px;" width="11" height="11" viewBox="0 0 11 11"><path d="M2 6L6 1L10 5L6 10Z" fill="#ddd" stroke="#666"/></svg>
<div style="position:absolute;left:1324px;top:253px;width:209px;height:643px;background:#ececec;border-left:1px solid #f2ecc8;border-right:1.5px solid #8f8d74;border-bottom:1.5px solid #a8a488;box-sizing:border-box"></div>
<div style="position:absolute;left:1332px;top:258px;width:177px;height:17px;background:#fff;border:1px solid #b8b8b8;box-sizing:border-box"></div>
<div class="t" style="left:1335.0px;top:259.6px;font-size:12px;color:#222;font-weight:normal;transform:scaleX(0.833);transform-origin:0 0;">Travel run</div>
<svg style="position:absolute;left:1497px;top:263px;" width="8" height="6" viewBox="0 0 8 6"><path d="M0.5 0.5H7.5L4 5Z" fill="#111"/></svg>
<div class="t" style="left:1362.0px;top:309.4px;font-size:12px;color:#222;font-weight:normal;transform:scaleX(0.824);transform-origin:0 0;">Length:</div>
<div style="position:absolute;left:1401px;top:307px;width:38px;height:18px;background:#fff;border:1px solid #aaa;box-sizing:border-box"></div>
<div class="t" style="left:1405.5px;top:308.9px;font-size:12px;color:#111;font-weight:normal;transform:scaleX(0.835);transform-origin:0 0;">2.50</div>
<div style="position:absolute;left:1438px;top:307px;width:15px;height:18px;background:#f0f0f0;border:1px solid #bbb;box-sizing:border-box"></div>
<svg style="position:absolute;left:1441px;top:309px;" width="9" height="14" viewBox="0 0 9 14"><path d="M4.5 2V12" stroke="#555" stroke-width="1"/><path d="M2 4L4.5 1L7 4Z" fill="#e04050"/><path d="M2 10L4.5 13L7 10Z" fill="#20a040"/></svg>
<div class="t" style="left:1457.5px;top:310.4px;font-size:12px;color:#222;font-weight:normal;transform:scaleX(0.825);transform-origin:0 0;">mm</div>
<div style="position:absolute;left:1334px;top:904px;width:68.5px;height:18px;background:#e1e1e1;border:1px solid #c8c8c8;box-sizing:border-box"></div>
<div class="t" style="left:1353.4px;top:907.1px;font-size:12px;color:#222;font-weight:normal;transform:scaleX(0.793);transform-origin:0 0;">Effects</div>
<div style="position:absolute;left:1456.4px;top:904px;width:31.6px;height:18px;background:#e6e6e6;border:1px solid #c8c8c8;box-sizing:border-box"></div>
<div class="t" style="left:1461.3px;top:907.1px;font-size:12px;color:#222;font-weight:normal;transform:scaleX(0.779);transform-origin:0 0;">Save</div>
<div style="position:absolute;left:1494.7px;top:904px;width:19.2px;height:18px;background:#e6e6e6;border:1px solid #c8c8c8;box-sizing:border-box"></div>
<div class="t" style="left:1501.0px;top:907.1px;font-size:12px;color:#222;font-weight:normal;transform:scaleX(0.899);transform-origin:0 0;">?</div>
<div style="position:absolute;left:1543px;top:148px;width:4px;height:782px;background:#6f6f6f"></div>
<div style="position:absolute;left:1547px;top:148px;width:233px;height:813px;background:#efefef"></div>
<div style="position:absolute;left:1547px;top:148px;width:212px;height:24px;background:#cfcfcf"></div>
<div class="t" style="left:1552.3px;top:154.8px;font-size:13px;color:#fafafa;font-weight:bold;transform:scaleX(0.824);transform-origin:0 0;">Color-Object List</div>
<svg style="position:absolute;left:1727px;top:153px;" width="12" height="14" viewBox="0 0 12 14"><path d="M3 1H9M4 1V7H8V1M2 7H10M6 7V13" stroke="#f4f4f4" stroke-width="1.3" fill="none"/></svg>
<svg style="position:absolute;left:1743px;top:154px;" width="12" height="12" viewBox="0 0 12 12"><path d="M1.5 1.5L10.5 10.5M10.5 1.5L1.5 10.5" stroke="#f8f8f8" stroke-width="1.8"/></svg>
<svg style="position:absolute;left:1551px;top:177px;" width="10" height="10" viewBox="0 0 10 10"><rect x="0.5" y="0.5" width="9" height="9" fill="#eee" stroke="#bbb"/><path d="M2.5 5L5 2.5L7.5 5M2.5 7.5L5 5L7.5 7.5" fill="none" stroke="#555" stroke-width="0.9"/></svg>
<div style="position:absolute;left:1589px;top:177px;width:39px;height:16px;background:#e6e6e6;border:1px solid #cfcfcf;box-sizing:border-box"></div>
<div class="t" style="left:1594.0px;top:178.4px;font-size:12px;color:#222;font-weight:normal;transform:scaleX(0.794);transform-origin:0 0;">Locate</div>
<div class="t" style="left:1640.0px;top:180.4px;font-size:12px;color:#222;font-weight:normal;transform:scaleX(0.869);transform-origin:0 0;">#</div>
<div class="t" style="left:1659.0px;top:180.4px;font-size:12px;color:#222;font-weight:normal;transform:scaleX(0.836);transform-origin:0 0;">Object</div>
<div class="t" style="left:1694.0px;top:180.4px;font-size:12px;color:#222;font-weight:normal;transform:scaleX(0.846);transform-origin:0 0;">Type</div>
<div class="t" style="left:1725.0px;top:180.4px;font-size:12px;color:#222;font-weight:normal;transform:scaleX(0.773);transform-origin:0 0;">Stitches</div>
<div style="position:absolute;left:1554px;top:195px;width:181px;height:726px;background:#c2c2c2;border-top:2px solid #9a9a9a;border-left:2px solid #9a9a9a;box-sizing:border-box"></div>
<div style="position:absolute;left:1556px;top:197px;width:37px;height:724px;background:#bdbdbd"></div>
<div style="position:absolute;left:1593px;top:197px;width:1px;height:724px;background:#aaaaaa"></div>
<div style="position:absolute;left:1735px;top:195px;width:17px;height:726px;background:#ececec"></div>
<div style="position:absolute;left:1737px;top:690px;width:13px;height:212px;background:#d2d2d2"></div>
<svg style="position:absolute;left:1737px;top:200px;" width="14" height="10" viewBox="0 0 14 10"><path d="M2 7L7 2L12 7" fill="none" stroke="#333" stroke-width="1.5"/></svg>
<svg style="position:absolute;left:1737px;top:908px;" width="14" height="10" viewBox="0 0 14 10"><path d="M2 3L7 8L12 3" fill="none" stroke="#333" stroke-width="1.5"/></svg>
<div style="position:absolute;left:1761px;top:150px;width:18px;height:118px;background:#fbf3c8;border:1px solid #e0d8a8;box-sizing:border-box"></div>
<svg style="position:absolute;left:1763px;top:152px;" width="15" height="17" viewBox="0 0 15 17"><rect x="0" y="0" width="15" height="17" fill="#222"/><path d="M0 0H6V17H0Z" fill="#aaa"/><circle cx="9" cy="6" r="2" fill="#fff"/><rect x="11" y="9" width="3" height="6" fill="#fff"/></svg>
<div class="t" style="left:1762px;top:172px;font-size:11px;color:#111;writing-mode:vertical-rl;">Embroidery Clipart</div>
<div style="position:absolute;left:1762px;top:268px;width:16px;height:662px;background:#cdcdcd"></div>
<div style="position:absolute;left:1778px;top:148px;width:2px;height:814px;background:#9a9a9a"></div>
<div class="t" style="left:1638.5px;top:216.9px;font-size:12px;color:#111;font-weight:normal;transform:scaleX(0.764);transform-origin:0 0;">50</div>
<div class="t" style="left:1638.5px;top:250.5px;font-size:12px;color:#111;font-weight:normal;transform:scaleX(0.764);transform-origin:0 0;">51</div>
<div class="t" style="left:1638.5px;top:284.1px;font-size:12px;color:#111;font-weight:normal;transform:scaleX(0.764);transform-origin:0 0;">52</div>
<div class="t" style="left:1638.5px;top:317.7px;font-size:12px;color:#111;font-weight:normal;transform:scaleX(0.764);transform-origin:0 0;">53</div>
<div class="t" style="left:1638.5px;top:351.3px;font-size:12px;color:#111;font-weight:normal;transform:scaleX(0.764);transform-origin:0 0;">54</div>
<div class="t" style="left:1638.5px;top:384.9px;font-size:12px;color:#111;font-weight:normal;transform:scaleX(0.764);transform-origin:0 0;">55</div>
<div class="t" style="left:1638.5px;top:418.5px;font-size:12px;color:#111;font-weight:normal;transform:scaleX(0.764);transform-origin:0 0;">56</div>
<div class="t" style="left:1638.5px;top:452.1px;font-size:12px;color:#111;font-weight:normal;transform:scaleX(0.764);transform-origin:0 0;">57</div>
<div class="t" style="left:1638.5px;top:485.7px;font-size:12px;color:#111;font-weight:normal;transform:scaleX(0.764);transform-origin:0 0;">58</div>
<div class="t" style="left:1638.5px;top:519.3px;font-size:12px;color:#111;font-weight:normal;transform:scaleX(0.764);transform-origin:0 0;">59</div>
<div class="t" style="left:1638.5px;top:552.9px;font-size:12px;color:#111;font-weight:normal;transform:scaleX(0.764);transform-origin:0 0;">60</div>
<div class="t" style="left:1638.5px;top:586.5px;font-size:12px;color:#111;font-weight:normal;transform:scaleX(0.764);transform-origin:0 0;">61</div>
<div class="t" style="left:1638.5px;top:620.1px;font-size:12px;color:#111;font-weight:normal;transform:scaleX(0.764);transform-origin:0 0;">62</div>
<div class="t" style="left:1638.5px;top:653.7px;font-size:12px;color:#111;font-weight:normal;transform:scaleX(0.764);transform-origin:0 0;">63</div>
<div class="t" style="left:1638.5px;top:687.3px;font-size:12px;color:#111;font-weight:normal;transform:scaleX(0.764);transform-origin:0 0;">64</div>
<div class="t" style="left:1638.5px;top:720.9px;font-size:12px;color:#111;font-weight:normal;transform:scaleX(0.764);transform-origin:0 0;">65</div>
<div class="t" style="left:1638.5px;top:754.5px;font-size:12px;color:#111;font-weight:normal;transform:scaleX(0.764);transform-origin:0 0;">66</div>
<div class="t" style="left:1638.5px;top:788.1px;font-size:12px;color:#111;font-weight:normal;transform:scaleX(0.764);transform-origin:0 0;">67</div>
<div class="t" style="left:1638.5px;top:821.7px;font-size:12px;color:#111;font-weight:normal;transform:scaleX(0.764);transform-origin:0 0;">68</div>
<div class="t" style="left:1638.5px;top:855.3px;font-size:12px;color:#111;font-weight:normal;transform:scaleX(0.764);transform-origin:0 0;">69</div>
<div class="t" style="left:1638.5px;top:888.9px;font-size:12px;color:#111;font-weight:normal;transform:scaleX(0.764);transform-origin:0 0;">70</div>
<svg style="position:absolute;left:0px;top:0px;" width="1780" height="1001" viewBox="0 0 1780 1001"><path d="M0 4H18L21 8" transform="translate(1594,219.5)" fill="none" stroke="#333" stroke-width="1" stroke-dasharray="2 1"/><g transform="translate(1659,207.5)"><rect x="0.5" y="0.5" width="8" height="8" fill="none" stroke="#3a3ae0" stroke-width="1" stroke-dasharray="1.5 1"/><rect x="2.5" y="2.5" width="4" height="4" fill="none" stroke="#3a3ae0" stroke-width="1"/></g><g transform="translate(1663,210.5)"><path d="M2 20L21 4" stroke="#d0788a" stroke-width="2.6"/><path d="M2 20L21 4" stroke="#f4e8ec" stroke-width="2.6" stroke-dasharray="2 4"/><circle cx="2" cy="20" r="2" fill="#111"/><circle cx="21" cy="4" r="2" fill="#111"/><text x="15.5" y="21" font-size="11.5" font-family="Liberation Sans" fill="#111">1</text></g><path d="M1692 223.5H1718" stroke="#e07888" stroke-width="2.4"/><path d="M1692 223.5H1718" stroke="#f6eef0" stroke-width="2.4" stroke-dasharray="3 5" stroke-dashoffset="-4"/><path d="M0 4H20" transform="translate(1594,253.1)" fill="none" stroke="#333" stroke-width="1" stroke-dasharray="2 1"/><circle cx="1614" cy="257.1" r="1.3" fill="#222"/><g transform="translate(1659,241.1)"><rect x="0.5" y="0.5" width="8" height="8" fill="none" stroke="#3a3ae0" stroke-width="1" stroke-dasharray="1.5 1"/><rect x="2.5" y="2.5" width="4" height="4" fill="none" stroke="#3a3ae0" stroke-width="1"/></g><g transform="translate(1663,246.1)"><path d="M2 11L12 1L21 10V20L12 10L6 15Z" fill="none" stroke="#111" stroke-width="1.3"/><path d="M12 1V10M21 10L21 20" stroke="#c03030" stroke-width="1"/><circle cx="2" cy="11" r="1.6" fill="#111"/><circle cx="12" cy="1" r="1.6" fill="#111"/><circle cx="21" cy="10" r="1.6" fill="#111"/><circle cx="21" cy="20" r="1.6" fill="#111"/><circle cx="12" cy="10" r="1.6" fill="#111"/><circle cx="6" cy="15" r="1.6" fill="#111"/></g><path d="M1694 248.1L1697 266.1L1702 249.1L1705 265.1L1709 249.1L1712 266.1L1716 248.1L1717 266.1" fill="none" stroke="#e03a2a" stroke-width="2.4"/><path d="M0 4H19L21 2" transform="translate(1594,286.7)" fill="none" stroke="#333" stroke-width="1" stroke-dasharray="2 1"/><g transform="translate(1659,274.7)"><rect x="0.5" y="0.5" width="8" height="8" fill="none" stroke="#3a3ae0" stroke-width="1" stroke-dasharray="1.5 1"/><rect x="2.5" y="2.5" width="4" height="4" fill="none" stroke="#3a3ae0" stroke-width="1"/></g><g transform="translate(1663,277.7)"><path d="M2 20L21 4" stroke="#d0788a" stroke-width="2.6"/><path d="M2 20L21 4" stroke="#f4e8ec" stroke-width="2.6" stroke-dasharray="2 4"/><circle cx="2" cy="20" r="2" fill="#111"/><circle cx="21" cy="4" r="2" fill="#111"/><text x="15.5" y="21" font-size="11.5" font-family="Liberation Sans" fill="#111">1</text></g><path d="M1692 290.7H1718" stroke="#e07888" stroke-width="2.4"/><path d="M1692 290.7H1718" stroke="#f6eef0" stroke-width="2.4" stroke-dasharray="3 5" stroke-dashoffset="-4"/><path d="M0 4H20" transform="translate(1594,320.3)" fill="none" stroke="#333" stroke-width="1" stroke-dasharray="2 1"/><circle cx="1614" cy="324.3" r="1.3" fill="#222"/><g transform="translate(1659,308.3)"><rect x="0.5" y="0.5" width="8" height="8" fill="none" stroke="#3a3ae0" stroke-width="1" stroke-dasharray="1.5 1"/><rect x="2.5" y="2.5" width="4" height="4" fill="none" stroke="#3a3ae0" stroke-width="1"/></g><g transform="translate(1663,313.3)"><path d="M2 11L12 1L21 10V20L12 10L6 15Z" fill="none" stroke="#111" stroke-width="1.3"/><path d="M12 1V10M21 10L21 20" stroke="#c03030" stroke-width="1"/><circle cx="2" cy="11" r="1.6" fill="#111"/><circle cx="12" cy="1" r="1.6" fill="#111"/><circle cx="21" cy="10" r="1.6" fill="#111"/><circle cx="21" cy="20" r="1.6" fill="#111"/><circle cx="12" cy="10" r="1.6" fill="#111"/><circle cx="6" cy="15" r="1.6" fill="#111"/></g><path d="M1694 315.3L1697 333.3L1702 316.3L1705 332.3L1709 316.3L1712 333.3L1716 315.3L1717 333.3" fill="none" stroke="#e03a2a" stroke-width="2.4"/><path d="M0 4H19L21 2" transform="translate(1594,353.9)" fill="none" stroke="#333" stroke-width="1" stroke-dasharray="2 1"/><g transform="translate(1659,341.9)"><rect x="0.5" y="0.5" width="8" height="8" fill="none" stroke="#3a3ae0" stroke-width="1" stroke-dasharray="1.5 1"/><rect x="2.5" y="2.5" width="4" height="4" fill="none" stroke="#3a3ae0" stroke-width="1"/></g><g transform="translate(1663,344.9)"><path d="M2 20L21 4" stroke="#d0788a" stroke-width="2.6"/><path d="M2 20L21 4" stroke="#f4e8ec" stroke-width="2.6" stroke-dasharray="2 4"/><circle cx="2" cy="20" r="2" fill="#111"/><circle cx="21" cy="4" r="2" fill="#111"/><text x="15.5" y="21" font-size="11.5" font-family="Liberation Sans" fill="#111">1</text></g><path d="M1692 357.9H1718" stroke="#e07888" stroke-width="2.4"/><path d="M1692 357.9H1718" stroke="#f6eef0" stroke-width="2.4" stroke-dasharray="3 5" stroke-dashoffset="-4"/><path d="M0 4H20" transform="translate(1594,387.5)" fill="none" stroke="#333" stroke-width="1" stroke-dasharray="2 1"/><circle cx="1614" cy="391.5" r="1.3" fill="#222"/><g transform="translate(1659,375.5)"><rect x="0.5" y="0.5" width="8" height="8" fill="none" stroke="#3a3ae0" stroke-width="1" stroke-dasharray="1.5 1"/><rect x="2.5" y="2.5" width="4" height="4" fill="none" stroke="#3a3ae0" stroke-width="1"/></g><g transform="translate(1663,380.5)"><path d="M2 11L12 1L21 10V20L12 10L6 15Z" fill="none" stroke="#111" stroke-width="1.3"/><path d="M12 1V10M21 10L21 20" stroke="#c03030" stroke-width="1"/><circle cx="2" cy="11" r="1.6" fill="#111"/><circle cx="12" cy="1" r="1.6" fill="#111"/><circle cx="21" cy="10" r="1.6" fill="#111"/><circle cx="21" cy="20" r="1.6" fill="#111"/><circle cx="12" cy="10" r="1.6" fill="#111"/><circle cx="6" cy="15" r="1.6" fill="#111"/></g><path d="M1694 382.5L1697 400.5L1702 383.5L1705 399.5L1709 383.5L1712 400.5L1716 382.5L1717 400.5" fill="none" stroke="#e03a2a" stroke-width="2.4"/><path d="M0 4H20" transform="translate(1594,421.1)" fill="none" stroke="#333" stroke-width="1" stroke-dasharray="2 1"/><g transform="translate(1659,409.1)"><rect x="0.5" y="0.5" width="8" height="8" fill="none" stroke="#3a3ae0" stroke-width="1" stroke-dasharray="1.5 1"/><rect x="2.5" y="2.5" width="4" height="4" fill="none" stroke="#3a3ae0" stroke-width="1"/></g><g transform="translate(1663,412.1)"><path d="M2 20L21 4" stroke="#d0788a" stroke-width="2.6"/><path d="M2 20L21 4" stroke="#f4e8ec" stroke-width="2.6" stroke-dasharray="2 4"/><circle cx="2" cy="20" r="2" fill="#111"/><circle cx="21" cy="4" r="2" fill="#111"/><text x="15.5" y="21" font-size="11.5" font-family="Liberation Sans" fill="#111">1</text></g><path d="M1692 425.1H1718" stroke="#e07888" stroke-width="2.4"/><path d="M1692 425.1H1718" stroke="#f6eef0" stroke-width="2.4" stroke-dasharray="3 5" stroke-dashoffset="-4"/><path d="M0 4H20" transform="translate(1594,454.7)" fill="none" stroke="#333" stroke-width="1" stroke-dasharray="2 1"/><circle cx="1614" cy="458.7" r="1.3" fill="#222"/><g transform="translate(1659,442.7)"><rect x="0.5" y="0.5" width="8" height="8" fill="none" stroke="#3a3ae0" stroke-width="1" stroke-dasharray="1.5 1"/><rect x="2.5" y="2.5" width="4" height="4" fill="none" stroke="#3a3ae0" stroke-width="1"/></g><g transform="translate(1663,447.7)"><path d="M2 11L12 1L21 10V20L12 10L6 15Z" fill="none" stroke="#111" stroke-width="1.3"/><path d="M12 1V10M21 10L21 20" stroke="#c03030" stroke-width="1"/><circle cx="2" cy="11" r="1.6" fill="#111"/><circle cx="12" cy="1" r="1.6" fill="#111"/><circle cx="21" cy="10" r="1.6" fill="#111"/><circle cx="21" cy="20" r="1.6" fill="#111"/><circle cx="12" cy="10" r="1.6" fill="#111"/><circle cx="6" cy="15" r="1.6" fill="#111"/></g><path d="M1694 449.7L1697 467.7L1702 450.7L1705 466.7L1709 450.7L1712 467.7L1716 449.7L1717 467.7" fill="none" stroke="#e03a2a" stroke-width="2.4"/><path d="M0 4H21" transform="translate(1594,488.3)" fill="none" stroke="#333" stroke-width="1" stroke-dasharray="2 1"/><g transform="translate(1659,476.3)"><rect x="0.5" y="0.5" width="8" height="8" fill="none" stroke="#3a3ae0" stroke-width="1" stroke-dasharray="1.5 1"/><rect x="2.5" y="2.5" width="4" height="4" fill="none" stroke="#3a3ae0" stroke-width="1"/></g><g transform="translate(1663,479.3)"><path d="M2 20L21 4" stroke="#d0788a" stroke-width="2.6"/><path d="M2 20L21 4" stroke="#f4e8ec" stroke-width="2.6" stroke-dasharray="2 4"/><circle cx="2" cy="20" r="2" fill="#111"/><circle cx="21" cy="4" r="2" fill="#111"/><text x="15.5" y="21" font-size="11.5" font-family="Liberation Sans" fill="#111">1</text></g><path d="M1692 492.3H1718" stroke="#e07888" stroke-width="2.4"/><path d="M1692 492.3H1718" stroke="#f6eef0" stroke-width="2.4" stroke-dasharray="3 5" stroke-dashoffset="-4"/><path d="M0 4H20" transform="translate(1594,521.9)" fill="none" stroke="#333" stroke-width="1" stroke-dasharray="2 1"/><circle cx="1614" cy="525.9" r="1.3" fill="#222"/><g transform="translate(1659,509.9)"><rect x="0.5" y="0.5" width="8" height="8" fill="none" stroke="#3a3ae0" stroke-width="1" stroke-dasharray="1.5 1"/><rect x="2.5" y="2.5" width="4" height="4" fill="none" stroke="#3a3ae0" stroke-width="1"/></g><g transform="translate(1663,514.9)"><path d="M2 11L12 1L21 10V20L12 10L6 15Z" fill="none" stroke="#111" stroke-width="1.3"/><path d="M12 1V10M21 10L21 20" stroke="#c03030" stroke-width="1"/><circle cx="2" cy="11" r="1.6" fill="#111"/><circle cx="12" cy="1" r="1.6" fill="#111"/><circle cx="21" cy="10" r="1.6" fill="#111"/><circle cx="21" cy="20" r="1.6" fill="#111"/><circle cx="12" cy="10" r="1.6" fill="#111"/><circle cx="6" cy="15" r="1.6" fill="#111"/></g><path d="M1694 516.9L1697 534.9L1702 517.9L1705 533.9L1709 517.9L1712 534.9L1716 516.9L1717 534.9" fill="none" stroke="#e03a2a" stroke-width="2.4"/><path d="M0 4H16Q20 3 22 6" transform="translate(1594,555.5)" fill="none" stroke="#333" stroke-width="1" stroke-dasharray="2 1"/><g transform="translate(1659,543.5)"><rect x="0.5" y="0.5" width="8" height="8" fill="none" stroke="#3a3ae0" stroke-width="1" stroke-dasharray="1.5 1"/><rect x="2.5" y="2.5" width="4" height="4" fill="none" stroke="#3a3ae0" stroke-width="1"/></g><g transform="translate(1663,546.5)"><path d="M2 20L21 4" stroke="#d0788a" stroke-width="2.6"/><path d="M2 20L21 4" stroke="#f4e8ec" stroke-width="2.6" stroke-dasharray="2 4"/><circle cx="2" cy="20" r="2" fill="#111"/><circle cx="21" cy="4" r="2" fill="#111"/><text x="15.5" y="21" font-size="11.5" font-family="Liberation Sans" fill="#111">1</text></g><path d="M1692 559.5H1718" stroke="#e07888" stroke-width="2.4"/><path d="M1692 559.5H1718" stroke="#f6eef0" stroke-width="2.4" stroke-dasharray="3 5" stroke-dashoffset="-4"/><path d="M0 4H14Q22 2 26 8" transform="translate(1594,589.1)" fill="none" stroke="#333" stroke-width="1" stroke-dasharray="2 1"/><g transform="translate(1659,577.1)"><rect x="0.5" y="0.5" width="8" height="8" fill="none" stroke="#3a3ae0" stroke-width="1" stroke-dasharray="1.5 1"/><rect x="2.5" y="2.5" width="4" height="4" fill="none" stroke="#3a3ae0" stroke-width="1"/></g><g transform="translate(1663,580.1)"><path d="M2 20L21 4" stroke="#d0788a" stroke-width="2.6"/><path d="M2 20L21 4" stroke="#f4e8ec" stroke-width="2.6" stroke-dasharray="2 4"/><circle cx="2" cy="20" r="2" fill="#111"/><circle cx="21" cy="4" r="2" fill="#111"/><text x="15.5" y="21" font-size="11.5" font-family="Liberation Sans" fill="#111">1</text></g><path d="M1692 593.1H1718" stroke="#e07888" stroke-width="2.4"/><path d="M1692 593.1H1718" stroke="#f6eef0" stroke-width="2.4" stroke-dasharray="3 5" stroke-dashoffset="-4"/><path d="M0 4H12Q22 0 26 10" transform="translate(1594,622.7)" fill="none" stroke="#333" stroke-width="1" stroke-dasharray="2 1"/><g transform="translate(1659,610.7)"><rect x="0.5" y="0.5" width="8" height="8" fill="none" stroke="#3a3ae0" stroke-width="1" stroke-dasharray="1.5 1"/><rect x="2.5" y="2.5" width="4" height="4" fill="none" stroke="#3a3ae0" stroke-width="1"/></g><g transform="translate(1663,615.7)"><path d="M2 21L14 5M7 21L20 3M12 21L22 9" stroke="#e85030" stroke-width="2.2"/><circle cx="2" cy="21" r="1.8" fill="#111"/><circle cx="20" cy="2" r="1.8" fill="#111"/><path d="M4 8L9 4M22 12L14 20" stroke="#222" stroke-width="1.3"/></g><path d="M1694 624.7L1716 620.7M1697 630.7L1718 625.7" stroke="#e84a30" stroke-width="2.6"/><path d="M0 4H16Q20 3 24 8" transform="translate(1594,656.3)" fill="none" stroke="#333" stroke-width="1" stroke-dasharray="2 1"/><g transform="translate(1659,644.3)"><rect x="0.5" y="0.5" width="8" height="8" fill="none" stroke="#3a3ae0" stroke-width="1" stroke-dasharray="1.5 1"/><rect x="2.5" y="2.5" width="4" height="4" fill="none" stroke="#3a3ae0" stroke-width="1"/></g><g transform="translate(1663,647.3)"><path d="M2 20L21 4" stroke="#d0788a" stroke-width="2.6"/><path d="M2 20L21 4" stroke="#f4e8ec" stroke-width="2.6" stroke-dasharray="2 4"/><circle cx="2" cy="20" r="2" fill="#111"/><circle cx="21" cy="4" r="2" fill="#111"/><text x="15.5" y="21" font-size="11.5" font-family="Liberation Sans" fill="#111">1</text></g><path d="M1692 660.3H1718" stroke="#e07888" stroke-width="2.4"/><path d="M1692 660.3H1718" stroke="#f6eef0" stroke-width="2.4" stroke-dasharray="3 5" stroke-dashoffset="-4"/><path d="M0 4H20" transform="translate(1594,689.9)" fill="none" stroke="#333" stroke-width="1" stroke-dasharray="2 1"/><circle cx="1614" cy="693.9" r="1.3" fill="#222"/><g transform="translate(1659,677.9)"><rect x="0.5" y="0.5" width="8" height="8" fill="none" stroke="#3a3ae0" stroke-width="1" stroke-dasharray="1.5 1"/><rect x="2.5" y="2.5" width="4" height="4" fill="none" stroke="#3a3ae0" stroke-width="1"/></g><g transform="translate(1663,682.9)"><path d="M2 11L12 1L21 10V20L12 10L6 15Z" fill="none" stroke="#111" stroke-width="1.3"/><path d="M12 1V10M21 10L21 20" stroke="#c03030" stroke-width="1"/><circle cx="2" cy="11" r="1.6" fill="#111"/><circle cx="12" cy="1" r="1.6" fill="#111"/><circle cx="21" cy="10" r="1.6" fill="#111"/><circle cx="21" cy="20" r="1.6" fill="#111"/><circle cx="12" cy="10" r="1.6" fill="#111"/><circle cx="6" cy="15" r="1.6" fill="#111"/></g><path d="M1694 684.9L1697 702.9L1702 685.9L1705 701.9L1709 685.9L1712 702.9L1716 684.9L1717 702.9" fill="none" stroke="#e03a2a" stroke-width="2.4"/><path d="M0 4H12M20 0Q14 4 18 8H22" transform="translate(1594,723.5)" fill="none" stroke="#333" stroke-width="1" stroke-dasharray="2 1"/><g transform="translate(1659,711.5)"><rect x="0.5" y="0.5" width="8" height="8" fill="none" stroke="#3a3ae0" stroke-width="1" stroke-dasharray="1.5 1"/><rect x="2.5" y="2.5" width="4" height="4" fill="none" stroke="#3a3ae0" stroke-width="1"/></g><g transform="translate(1663,716.5)"><path d="M2 21L14 5M7 21L20 3M12 21L22 9" stroke="#e85030" stroke-width="2.2"/><circle cx="2" cy="21" r="1.8" fill="#111"/><circle cx="20" cy="2" r="1.8" fill="#111"/><path d="M4 8L9 4M22 12L14 20" stroke="#222" stroke-width="1.3"/></g><path d="M1694 725.5L1716 721.5M1697 731.5L1718 726.5" stroke="#e84a30" stroke-width="2.6"/><path d="M0 4H18L20 6" transform="translate(1594,757.1)" fill="none" stroke="#333" stroke-width="1" stroke-dasharray="2 1"/><g transform="translate(1659,745.1)"><rect x="0.5" y="0.5" width="8" height="8" fill="none" stroke="#3a3ae0" stroke-width="1" stroke-dasharray="1.5 1"/><rect x="2.5" y="2.5" width="4" height="4" fill="none" stroke="#3a3ae0" stroke-width="1"/></g><g transform="translate(1663,748.1)"><path d="M2 20L21 4" stroke="#d0788a" stroke-width="2.6"/><path d="M2 20L21 4" stroke="#f4e8ec" stroke-width="2.6" stroke-dasharray="2 4"/><circle cx="2" cy="20" r="2" fill="#111"/><circle cx="21" cy="4" r="2" fill="#111"/><text x="15.5" y="21" font-size="11.5" font-family="Liberation Sans" fill="#111">1</text></g><path d="M1692 761.1H1718" stroke="#e07888" stroke-width="2.4"/><path d="M1692 761.1H1718" stroke="#f6eef0" stroke-width="2.4" stroke-dasharray="3 5" stroke-dashoffset="-4"/><path d="M0 4H10Q18 2 24 14" transform="translate(1594,790.7)" fill="none" stroke="#333" stroke-width="1" stroke-dasharray="2 1"/><g transform="translate(1659,778.7)"><rect x="0.5" y="0.5" width="8" height="8" fill="none" stroke="#3a3ae0" stroke-width="1" stroke-dasharray="1.5 1"/><rect x="2.5" y="2.5" width="4" height="4" fill="none" stroke="#3a3ae0" stroke-width="1"/></g><g transform="translate(1663,783.7)"><path d="M2 21L14 5M7 21L20 3M12 21L22 9" stroke="#e85030" stroke-width="2.2"/><circle cx="2" cy="21" r="1.8" fill="#111"/><circle cx="20" cy="2" r="1.8" fill="#111"/><path d="M4 8L9 4M22 12L14 20" stroke="#222" stroke-width="1.3"/></g><path d="M1694 792.7L1716 788.7M1697 798.7L1718 793.7" stroke="#e84a30" stroke-width="2.6"/><path d="M0 4H20" transform="translate(1594,824.3)" fill="none" stroke="#333" stroke-width="1" stroke-dasharray="2 1"/><g transform="translate(1659,812.3)"><rect x="0.5" y="0.5" width="8" height="8" fill="none" stroke="#3a3ae0" stroke-width="1" stroke-dasharray="1.5 1"/><rect x="2.5" y="2.5" width="4" height="4" fill="none" stroke="#3a3ae0" stroke-width="1"/></g><g transform="translate(1663,815.3)"><path d="M2 20L21 4" stroke="#d0788a" stroke-width="2.6"/><path d="M2 20L21 4" stroke="#f4e8ec" stroke-width="2.6" stroke-dasharray="2 4"/><circle cx="2" cy="20" r="2" fill="#111"/><circle cx="21" cy="4" r="2" fill="#111"/><text x="15.5" y="21" font-size="11.5" font-family="Liberation Sans" fill="#111">1</text></g><path d="M1692 828.3H1718" stroke="#e07888" stroke-width="2.4"/><path d="M1692 828.3H1718" stroke="#f6eef0" stroke-width="2.4" stroke-dasharray="3 5" stroke-dashoffset="-4"/><path d="M0 4H10Q18 2 24 12" transform="translate(1594,857.9)" fill="none" stroke="#333" stroke-width="1" stroke-dasharray="2 1"/><g transform="translate(1659,845.9)"><rect x="0.5" y="0.5" width="8" height="8" fill="none" stroke="#3a3ae0" stroke-width="1" stroke-dasharray="1.5 1"/><rect x="2.5" y="2.5" width="4" height="4" fill="none" stroke="#3a3ae0" stroke-width="1"/></g><g transform="translate(1663,850.9)"><path d="M2 21L14 5M7 21L20 3M12 21L22 9" stroke="#e85030" stroke-width="2.2"/><circle cx="2" cy="21" r="1.8" fill="#111"/><circle cx="20" cy="2" r="1.8" fill="#111"/><path d="M4 8L9 4M22 12L14 20" stroke="#222" stroke-width="1.3"/></g><path d="M1694 859.9L1716 855.9M1697 865.9L1718 860.9" stroke="#e84a30" stroke-width="2.6"/><g transform="translate(1663,882.5)"><path d="M2 20L21 4" stroke="#d0788a" stroke-width="2.6"/><path d="M2 20L21 4" stroke="#f4e8ec" stroke-width="2.6" stroke-dasharray="2 4"/><circle cx="2" cy="20" r="2" fill="#111"/><circle cx="21" cy="4" r="2" fill="#111"/><text x="15.5" y="21" font-size="11.5" font-family="Liberation Sans" fill="#111">1</text></g><path d="M1692 895.5H1718" stroke="#e07888" stroke-width="2.4"/><path d="M1692 895.5H1718" stroke="#f6eef0" stroke-width="2.4" stroke-dasharray="3 5" stroke-dashoffset="-4"/></svg>
<div style="position:absolute;left:1595px;top:879px;width:33px;height:33px;border:1.5px solid #2a2ab8;box-sizing:border-box;background:#c6c6c6"></div>
<svg style="position:absolute;left:1597px;top:883px;" width="29" height="24" viewBox="0 0 29 24"><path d="M4 6Q8 2 12 5Q16 2 22 4Q26 8 22 11Q26 15 24 19Q18 22 15 17Q11 21 6 20Q2 16 6 12Q1 9 4 6Z" fill="none" stroke="#444" stroke-width="1"/></svg>
<svg style="position:absolute;left:0px;top:0px;pointer-events:none" width="1780" height="1001" viewBox="0 0 1780 1001"><path d="M616.8,353.5 C612.4,353.5 610.1,353.2 603.8,353.3 C597.5,353.4 585.0,354.4 578.7,354.2 C572.4,354.0 568.7,353.6 566.0,352.4 C563.3,351.2 564.0,349.4 562.5,347.0 C561.0,344.6 559.4,340.6 557.0,338.0 C554.6,335.4 551.6,332.9 548.0,331.7 C544.4,330.5 541.2,329.9 535.5,330.8 C529.8,331.7 520.6,334.0 514.0,337.0 C507.4,340.0 501.1,345.2 496.0,348.8 C490.9,352.4 486.6,356.6 483.4,358.7 C480.2,360.8 480.7,359.9 476.8,361.2 C472.9,362.5 465.5,363.7 460.0,366.7 C454.5,369.7 450.0,376.0 443.8,379.2 C437.6,382.4 429.3,382.5 422.8,385.9 C416.3,389.3 409.9,393.9 404.9,399.4 C399.9,404.9 396.8,411.9 392.9,418.9 C389.0,425.9 385.4,438.1 381.6,441.3 C377.9,444.6 374.8,438.8 370.4,438.4 C366.0,438.0 360.4,437.6 355.4,439.1 C350.4,440.6 344.9,442.2 340.4,447.3 C335.9,452.4 330.1,462.1 328.5,470.0 C326.9,477.9 328.2,488.3 331.0,495.0 C333.8,501.7 338.2,506.8 345.0,510.0 C351.8,513.2 363.7,515.2 372.0,514.0 C380.3,512.8 388.3,506.5 395.0,503.0 C401.7,499.5 408.0,493.5 412.0,493.0 C416.0,492.5 416.8,496.3 419.0,500.0 C421.2,503.7 420.7,510.2 425.0,515.0 C429.3,519.8 438.3,525.0 445.0,529.0 C451.7,533.0 462.5,535.8 465.0,539.0 C467.5,542.2 464.2,544.1 460.0,548.0 C455.8,551.9 446.7,556.3 440.0,562.5 C433.3,568.7 425.8,579.8 420.0,585.0 C414.2,590.2 414.2,591.9 405.0,594.0 C395.8,596.1 377.5,593.6 365.0,597.5 C352.5,601.4 338.5,610.4 330.0,617.5 C321.5,624.6 316.9,631.7 314.0,640.0 C311.1,648.3 312.2,657.5 312.5,667.5 C312.8,677.5 313.9,692.5 316.0,700.0 C318.1,707.5 323.0,706.7 325.0,712.5 C327.0,718.3 324.7,727.9 328.0,735.0 C331.3,742.1 337.2,750.0 345.0,755.0 C352.8,760.0 365.8,765.8 375.0,765.0 C384.2,764.2 395.3,756.8 400.0,750.0 C404.7,743.2 398.0,733.6 403.0,724.0 C408.0,714.4 418.0,706.1 430.0,692.5 C442.0,678.9 464.2,655.0 475.0,642.5 C485.8,630.0 487.1,623.3 495.0,617.5 C502.9,611.7 517.0,606.2 522.5,607.5 C528.0,608.8 523.4,619.2 528.0,625.0 C532.6,630.8 541.3,640.0 550.0,642.5 C558.7,645.0 571.7,640.8 580.0,640.0 C588.3,639.2 593.9,638.2 600.0,638.0 C606.1,637.8 611.2,639.0 616.8,639.0 C622.3,639.0 627.4,637.8 633.5,638.0 C639.6,638.2 645.2,639.2 653.5,640.0 C661.8,640.8 674.8,645.0 683.5,642.5 C692.2,640.0 700.9,630.8 705.5,625.0 C710.1,619.2 705.5,608.8 711.0,607.5 C716.5,606.2 730.6,611.7 738.5,617.5 C746.4,623.3 747.7,630.0 758.5,642.5 C769.3,655.0 791.5,678.9 803.5,692.5 C815.5,706.1 825.5,714.4 830.5,724.0 C835.5,733.6 828.8,743.2 833.5,750.0 C838.2,756.8 849.3,764.2 858.5,765.0 C867.7,765.8 880.7,760.0 888.5,755.0 C896.3,750.0 902.2,742.1 905.5,735.0 C908.8,727.9 906.5,718.3 908.5,712.5 C910.5,706.7 915.4,707.5 917.5,700.0 C919.6,692.5 920.7,677.5 921.0,667.5 C921.3,657.5 922.4,648.3 919.5,640.0 C916.6,631.7 912.0,624.6 903.5,617.5 C895.0,610.4 881.0,601.4 868.5,597.5 C856.0,593.6 837.7,596.1 828.5,594.0 C819.3,591.9 819.3,590.2 813.5,585.0 C807.7,579.8 800.2,568.7 793.5,562.5 C786.8,556.3 777.7,551.9 773.5,548.0 C769.3,544.1 766.0,542.2 768.5,539.0 C771.0,535.8 781.8,533.0 788.5,529.0 C795.2,525.0 804.2,519.8 808.5,515.0 C812.8,510.2 812.3,503.7 814.5,500.0 C816.7,496.3 817.5,492.5 821.5,493.0 C825.5,493.5 831.8,499.5 838.5,503.0 C845.2,506.5 853.2,512.8 861.5,514.0 C869.8,515.2 881.7,513.2 888.5,510.0 C895.3,506.8 899.8,501.7 902.5,495.0 C905.2,488.3 906.6,477.9 905.0,470.0 C903.4,462.1 897.6,452.4 893.1,447.3 C888.6,442.2 883.1,440.6 878.1,439.1 C873.1,437.6 867.5,438.0 863.1,438.4 C858.7,438.8 855.6,444.6 851.9,441.3 C848.1,438.1 844.5,425.9 840.6,418.9 C836.7,411.9 833.6,404.9 828.6,399.4 C823.6,393.9 817.2,389.3 810.7,385.9 C804.2,382.5 795.9,382.4 789.7,379.2 C783.5,376.0 779.0,369.7 773.5,366.7 C768.0,363.7 760.6,362.5 756.7,361.2 C752.8,359.9 753.3,360.8 750.1,358.7 C746.9,356.6 742.6,352.4 737.5,348.8 C732.4,345.2 726.1,340.0 719.5,337.0 C712.9,334.0 703.7,331.7 698.0,330.8 C692.3,329.9 689.1,330.5 685.5,331.7 C681.9,332.9 678.9,335.4 676.5,338.0 C674.1,340.6 672.5,344.6 671.0,347.0 C669.5,349.4 670.2,351.2 667.5,352.4 C664.8,353.6 661.1,354.0 654.8,354.2 C648.5,354.4 636.0,353.4 629.7,353.3 C623.4,353.2 621.1,353.5 616.8,353.5Z" fill="none" stroke="#4e2c5e" stroke-width="1.4"/><g><path d="M543.7,350.8 C541.2,351.2 533.6,351.9 528.9,353.5 C524.2,355.1 519.9,357.6 515.4,360.7 C510.9,363.8 505.6,368.7 501.9,372.4 C498.1,376.1 494.7,379.5 492.9,383.1 C491.1,386.7 490.8,390.1 491.1,393.9 C491.4,397.6 492.4,402.6 494.7,405.6 C496.9,408.6 501.2,411.4 504.6,411.9 C508.1,412.3 512.9,410.7 515.4,408.3 C517.9,405.9 519.2,401.2 519.4,397.5 C519.5,393.8 518.5,388.8 516.3,385.8 C514.1,382.8 510.3,380.6 506.4,379.6 C502.5,378.6 497.8,379.0 492.9,379.6 C487.9,380.2 481.5,381.3 476.7,383.1 C471.9,384.9 467.8,387.6 464.2,390.3 C460.6,393.0 457.3,396.0 455.2,399.3 C453.1,402.6 451.3,406.8 451.6,410.1 C451.9,413.4 454.9,418.1 457.0,419.1 C459.1,420.2 462.7,418.2 464.2,416.4 C465.7,414.6 466.6,410.6 466.0,408.3 C465.4,406.1 463.6,404.1 460.6,402.9 C457.6,401.7 452.2,400.8 448.0,401.1 C443.8,401.4 439.4,403.1 435.4,404.7 C431.4,406.3 427.4,407.6 424.0,411.0 C420.6,414.4 417.6,420.3 414.8,424.8 C412.0,429.3 409.4,433.1 407.0,438.0 C404.6,442.9 402.4,448.7 400.2,454.2 C398.0,459.7 396.1,465.8 394.0,471.0 C391.9,476.2 390.4,481.8 387.6,485.6 C384.8,489.4 381.3,492.1 377.1,494.0 C372.9,495.9 366.8,497.9 362.4,497.2 C358.0,496.5 353.2,493.5 350.9,489.8 C348.6,486.1 348.1,479.7 348.8,475.2 C349.5,470.7 352.1,465.4 355.1,462.6 C358.1,459.8 363.5,458.4 366.6,458.4 C369.8,458.4 372.2,460.5 374.0,462.6 C375.8,464.7 376.6,469.6 377.1,471.0" fill="none" stroke="#8e2442" stroke-width="6.4" stroke-linecap="round"/><path d="M394.0,471.0 C392.9,473.4 390.4,481.8 387.6,485.6 C384.8,489.4 381.3,492.1 377.1,494.0 C372.9,495.9 366.8,497.9 362.4,497.2 C358.0,496.5 353.2,493.5 350.9,489.8 C348.6,486.1 348.1,479.7 348.8,475.2 C349.5,470.7 354.1,464.7 355.1,462.6" fill="none" stroke="#8e2442" stroke-width="9"/><path d="M543.7,350.8 C541.2,351.2 533.6,351.9 528.9,353.5 C524.2,355.1 519.9,357.6 515.4,360.7 C510.9,363.8 505.6,368.7 501.9,372.4 C498.1,376.1 494.7,379.5 492.9,383.1 C491.1,386.7 490.8,390.1 491.1,393.9 C491.4,397.6 492.4,402.6 494.7,405.6 C496.9,408.6 501.2,411.4 504.6,411.9 C508.1,412.3 512.9,410.7 515.4,408.3 C517.9,405.9 519.2,401.2 519.4,397.5 C519.5,393.8 518.5,388.8 516.3,385.8 C514.1,382.8 510.3,380.6 506.4,379.6 C502.5,378.6 497.8,379.0 492.9,379.6 C487.9,380.2 481.5,381.3 476.7,383.1 C471.9,384.9 467.8,387.6 464.2,390.3 C460.6,393.0 457.3,396.0 455.2,399.3 C453.1,402.6 451.3,406.8 451.6,410.1 C451.9,413.4 454.9,418.1 457.0,419.1 C459.1,420.2 462.7,418.2 464.2,416.4 C465.7,414.6 466.6,410.6 466.0,408.3 C465.4,406.1 463.6,404.1 460.6,402.9 C457.6,401.7 452.2,400.8 448.0,401.1 C443.8,401.4 439.4,403.1 435.4,404.7 C431.4,406.3 427.4,407.6 424.0,411.0 C420.6,414.4 417.6,420.3 414.8,424.8 C412.0,429.3 409.4,433.1 407.0,438.0 C404.6,442.9 402.4,448.7 400.2,454.2 C398.0,459.7 396.1,465.8 394.0,471.0 C391.9,476.2 390.4,481.8 387.6,485.6 C384.8,489.4 381.3,492.1 377.1,494.0 C372.9,495.9 366.8,497.9 362.4,497.2 C358.0,496.5 353.2,493.5 350.9,489.8 C348.6,486.1 348.1,479.7 348.8,475.2 C349.5,470.7 352.1,465.4 355.1,462.6 C358.1,459.8 363.5,458.4 366.6,458.4 C369.8,458.4 372.2,460.5 374.0,462.6 C375.8,464.7 376.6,469.6 377.1,471.0" fill="none" stroke="#c43a5c" stroke-width="4.6" stroke-linecap="round"/><path d="M394.0,471.0 C392.9,473.4 390.4,481.8 387.6,485.6 C384.8,489.4 381.3,492.1 377.1,494.0 C372.9,495.9 366.8,497.9 362.4,497.2 C358.0,496.5 353.2,493.5 350.9,489.8 C348.6,486.1 348.1,479.7 348.8,475.2 C349.5,470.7 354.1,464.7 355.1,462.6" fill="none" stroke="#c43a5c" stroke-width="7.2"/></g><g transform="translate(1233.5,0) scale(-1,1)"><path d="M543.7,350.8 C541.2,351.2 533.6,351.9 528.9,353.5 C524.2,355.1 519.9,357.6 515.4,360.7 C510.9,363.8 505.6,368.7 501.9,372.4 C498.1,376.1 494.7,379.5 492.9,383.1 C491.1,386.7 490.8,390.1 491.1,393.9 C491.4,397.6 492.4,402.6 494.7,405.6 C496.9,408.6 501.2,411.4 504.6,411.9 C508.1,412.3 512.9,410.7 515.4,408.3 C517.9,405.9 519.2,401.2 519.4,397.5 C519.5,393.8 518.5,388.8 516.3,385.8 C514.1,382.8 510.3,380.6 506.4,379.6 C502.5,378.6 497.8,379.0 492.9,379.6 C487.9,380.2 481.5,381.3 476.7,383.1 C471.9,384.9 467.8,387.6 464.2,390.3 C460.6,393.0 457.3,396.0 455.2,399.3 C453.1,402.6 451.3,406.8 451.6,410.1 C451.9,413.4 454.9,418.1 457.0,419.1 C459.1,420.2 462.7,418.2 464.2,416.4 C465.7,414.6 466.6,410.6 466.0,408.3 C465.4,406.1 463.6,404.1 460.6,402.9 C457.6,401.7 452.2,400.8 448.0,401.1 C443.8,401.4 439.4,403.1 435.4,404.7 C431.4,406.3 427.4,407.6 424.0,411.0 C420.6,414.4 417.6,420.3 414.8,424.8 C412.0,429.3 409.4,433.1 407.0,438.0 C404.6,442.9 402.4,448.7 400.2,454.2 C398.0,459.7 396.1,465.8 394.0,471.0 C391.9,476.2 390.4,481.8 387.6,485.6 C384.8,489.4 381.3,492.1 377.1,494.0 C372.9,495.9 366.8,497.9 362.4,497.2 C358.0,496.5 353.2,493.5 350.9,489.8 C348.6,486.1 348.1,479.7 348.8,475.2 C349.5,470.7 352.1,465.4 355.1,462.6 C358.1,459.8 363.5,458.4 366.6,458.4 C369.8,458.4 372.2,460.5 374.0,462.6 C375.8,464.7 376.6,469.6 377.1,471.0" fill="none" stroke="#8e2442" stroke-width="6.4" stroke-linecap="round"/><path d="M394.0,471.0 C392.9,473.4 390.4,481.8 387.6,485.6 C384.8,489.4 381.3,492.1 377.1,494.0 C372.9,495.9 366.8,497.9 362.4,497.2 C358.0,496.5 353.2,493.5 350.9,489.8 C348.6,486.1 348.1,479.7 348.8,475.2 C349.5,470.7 354.1,464.7 355.1,462.6" fill="none" stroke="#8e2442" stroke-width="9"/><path d="M543.7,350.8 C541.2,351.2 533.6,351.9 528.9,353.5 C524.2,355.1 519.9,357.6 515.4,360.7 C510.9,363.8 505.6,368.7 501.9,372.4 C498.1,376.1 494.7,379.5 492.9,383.1 C491.1,386.7 490.8,390.1 491.1,393.9 C491.4,397.6 492.4,402.6 494.7,405.6 C496.9,408.6 501.2,411.4 504.6,411.9 C508.1,412.3 512.9,410.7 515.4,408.3 C517.9,405.9 519.2,401.2 519.4,397.5 C519.5,393.8 518.5,388.8 516.3,385.8 C514.1,382.8 510.3,380.6 506.4,379.6 C502.5,378.6 497.8,379.0 492.9,379.6 C487.9,380.2 481.5,381.3 476.7,383.1 C471.9,384.9 467.8,387.6 464.2,390.3 C460.6,393.0 457.3,396.0 455.2,399.3 C453.1,402.6 451.3,406.8 451.6,410.1 C451.9,413.4 454.9,418.1 457.0,419.1 C459.1,420.2 462.7,418.2 464.2,416.4 C465.7,414.6 466.6,410.6 466.0,408.3 C465.4,406.1 463.6,404.1 460.6,402.9 C457.6,401.7 452.2,400.8 448.0,401.1 C443.8,401.4 439.4,403.1 435.4,404.7 C431.4,406.3 427.4,407.6 424.0,411.0 C420.6,414.4 417.6,420.3 414.8,424.8 C412.0,429.3 409.4,433.1 407.0,438.0 C404.6,442.9 402.4,448.7 400.2,454.2 C398.0,459.7 396.1,465.8 394.0,471.0 C391.9,476.2 390.4,481.8 387.6,485.6 C384.8,489.4 381.3,492.1 377.1,494.0 C372.9,495.9 366.8,497.9 362.4,497.2 C358.0,496.5 353.2,493.5 350.9,489.8 C348.6,486.1 348.1,479.7 348.8,475.2 C349.5,470.7 352.1,465.4 355.1,462.6 C358.1,459.8 363.5,458.4 366.6,458.4 C369.8,458.4 372.2,460.5 374.0,462.6 C375.8,464.7 376.6,469.6 377.1,471.0" fill="none" stroke="#c43a5c" stroke-width="4.6" stroke-linecap="round"/><path d="M394.0,471.0 C392.9,473.4 390.4,481.8 387.6,485.6 C384.8,489.4 381.3,492.1 377.1,494.0 C372.9,495.9 366.8,497.9 362.4,497.2 C358.0,496.5 353.2,493.5 350.9,489.8 C348.6,486.1 348.1,479.7 348.8,475.2 C349.5,470.7 354.1,464.7 355.1,462.6" fill="none" stroke="#c43a5c" stroke-width="7.2"/></g><g fill="none" stroke="#1f7a44" stroke-width="6.4" stroke-linejoin="miter"><path d="M547.8,371 V409"/><path d="M566.7,371 V409"/><path d="M547.8,389.7 H566.7"/><path d="M576.5,409 L588.5,372.5 H594 L605.5,409"/><path d="M581,394.5 H601"/><path d="M613.6,409 V371.5 H622 Q632,372 632,380.5 Q632,389.5 622,389.5 H613.6"/><path d="M638.8,409 V371.5 H647 Q657,372 657,380.5 Q657,389.5 647,389.5 H638.8"/><path d="M662,372 L675.2,389.7 L687,372"/><path d="M675.2,389.7 V409"/></g><g fill="none" stroke="#2fa35c" stroke-width="4.2" stroke-linejoin="miter"><path d="M547.8,371 V409"/><path d="M566.7,371 V409"/><path d="M547.8,389.7 H566.7"/><path d="M576.5,409 L588.5,372.5 H594 L605.5,409"/><path d="M581,394.5 H601"/><path d="M613.6,409 V371.5 H622 Q632,372 632,380.5 Q632,389.5 622,389.5 H613.6"/><path d="M638.8,409 V371.5 H647 Q657,372 657,380.5 Q657,389.5 647,389.5 H638.8"/><path d="M662,372 L675.2,389.7 L687,372"/><path d="M675.2,389.7 V409"/></g><g fill="none" stroke="#c9461c" stroke-linecap="butt"><path d="M442,429 L442,506" stroke-width="13.5"/><path d="M500.5,429 L522.5,540" stroke-width="14"/><path d="M539,433 L539,542" stroke-width="12.5"/><path d="M578.5,429 L579,548" stroke-width="14"/><path d="M621,429 L621.5,550" stroke-width="13.5"/><path d="M642,429 L642,548" stroke-width="13"/><path d="M687,429 L687,544" stroke-width="13"/><path d="M699,484 L723,531" stroke-width="13"/><path d="M436,431 H472.8" stroke-width="8.5"/><path d="M444,470.5 L470,473" stroke-width="8.5"/><path d="M494,430 L473.5,521" stroke-width="8.5"/><path d="M483,491.5 L506,493.5" stroke-width="8"/><path d="M514,432.5 H565" stroke-width="9.5"/><path d="M584,487 H615" stroke-width="8.5"/><path d="M642,433 H672.3" stroke-width="9.5"/><path d="M647,487 H673" stroke-width="9"/><path d="M647,541.5 L673,539.5" stroke-width="9.5"/><path d="M687,432.5 Q721,432 721,457 Q720,482 690,483.5" stroke-width="12"/><path d="M742.5,429.5 L733.5,460" stroke-width="10"/><path d="M791,436 Q785,428 773,428 Q757,430 757,447 Q757,462 774,470 Q796,480 795,497 Q794,515 774,515 Q761,515 757,509" stroke-width="14"/></g><g fill="none" stroke="#e8602c" stroke-linecap="butt"><path d="M442,429 L442,506" stroke-width="11.7"/><path d="M500.5,429 L522.5,540" stroke-width="12.2"/><path d="M539,433 L539,542" stroke-width="10.7"/><path d="M578.5,429 L579,548" stroke-width="12.2"/><path d="M621,429 L621.5,550" stroke-width="11.7"/><path d="M642,429 L642,548" stroke-width="11.2"/><path d="M687,429 L687,544" stroke-width="11.2"/><path d="M699,484 L723,531" stroke-width="11.2"/><path d="M436,431 H472.8" stroke-width="6.7"/><path d="M444,470.5 L470,473" stroke-width="6.7"/><path d="M494,430 L473.5,521" stroke-width="6.7"/><path d="M483,491.5 L506,493.5" stroke-width="6.2"/><path d="M514,432.5 H565" stroke-width="7.7"/><path d="M584,487 H615" stroke-width="6.7"/><path d="M642,433 H672.3" stroke-width="7.7"/><path d="M647,487 H673" stroke-width="7.2"/><path d="M647,541.5 L673,539.5" stroke-width="7.7"/><path d="M687,432.5 Q721,432 721,457 Q720,482 690,483.5" stroke-width="10.2"/><path d="M742.5,429.5 L733.5,460" stroke-width="8.2"/><path d="M791,436 Q785,428 773,428 Q757,430 757,447 Q757,462 774,470 Q796,480 795,497 Q794,515 774,515 Q761,515 757,509" stroke-width="12"/></g><g fill="none" stroke="#d9b412"><path d="M548.6,553 V625" stroke-width="15.5"/><path d="M548.6,560 Q581,561 580.5,591 Q580,621 548.6,618" stroke-width="16.0"/><path d="M605,624.5 V596 Q605,569.5 620.7,569.5 Q636.7,569.5 636.7,596 V624.5" stroke-width="15.5"/><path d="M594,585 H626.5" stroke-width="8.5"/><path d="M655.5,559 L669,583" stroke-width="15.0"/><path d="M687.5,554 L669,583" stroke-width="11.5"/><path d="M669,580 V624.5" stroke-width="15.0"/></g><g fill="none" stroke="#f3d624"><path d="M548.6,553 V625" stroke-width="13"/><path d="M548.6,560 Q581,561 580.5,591 Q580,621 548.6,618" stroke-width="13.5"/><path d="M605,624.5 V596 Q605,569.5 620.7,569.5 Q636.7,569.5 636.7,596 V624.5" stroke-width="13"/><path d="M594,585 H626.5" stroke-width="6"/><path d="M655.5,559 L669,583" stroke-width="12.5"/><path d="M687.5,554 L669,583" stroke-width="9"/><path d="M669,580 V624.5" stroke-width="12.5"/></g><g><defs><linearGradient id="lg1" x1="0" y1="0" x2="0" y2="1"><stop offset="0" stop-color="#f5b848"/><stop offset="0.35" stop-color="#f08a38"/><stop offset="0.6" stop-color="#ec4a2e"/><stop offset="1" stop-color="#e5302a"/></linearGradient></defs><g transform="translate(483.75,560) rotate(125.91)"><path d="M0.0,0.0 C-0.3,-3.2 13.5,-5.4 20.0,-8.0 C26.5,-10.6 31.3,-13.2 39.0,-15.5 C46.7,-17.8 57.5,-20.8 66.0,-22.0 C74.5,-23.2 81.5,-23.0 90.0,-22.5 C98.5,-22.0 107.0,-21.1 117.0,-19.0 C127.0,-16.9 139.7,-13.2 150.0,-10.0 C160.3,-6.8 179.0,-3.8 179.0,0.0 C179.0,3.8 158.8,9.6 150.0,13.0 C141.2,16.4 134.0,18.5 126.0,20.5 C118.0,22.5 110.0,24.0 102.0,25.0 C94.0,26.0 86.5,27.1 78.0,26.5 C69.5,25.9 60.3,24.1 51.0,21.5 C41.7,18.9 30.5,14.6 22.0,11.0 C13.5,7.4 0.3,3.2 0.0,0.0Z" fill="url(#lg1)"/><path d="M6.0,1.0 C4.3,3.7 28.0,13.3 40.0,17.0 C52.0,20.7 63.7,23.0 78.0,23.0 C92.3,23.0 111.5,20.0 126.0,17.0 C140.5,14.0 161.0,7.7 165.0,5.0 C169.0,2.3 160.8,1.5 150.0,1.0 C139.2,0.5 116.7,2.0 100.0,2.0 C83.3,2.0 65.7,1.2 50.0,1.0 C34.3,0.8 7.7,-1.7 6.0,1.0Z" fill="#e5302a"/><path d="M34,10 L139.0,7" stroke="#fff" stroke-width="5" stroke-dasharray="14 10" opacity="0.95"/><path d="M25,13 L37,13 L34,0Z" fill="#2a6a32"/><path d="M47,21 L59,21 L56,8Z" fill="#2a6a32"/><path d="M71,25 L83,25 L80,12Z" fill="#2a6a32"/><path d="M95,24 L107,24 L104,11Z" fill="#2a6a32"/><path d="M119,19 L131,19 L128,6Z" fill="#2a6a32"/><path d="M143,12 L155,12 L152,0Z" fill="#2a6a32"/><path d="M0.0,0.0 C-0.3,-3.2 13.5,-5.4 20.0,-8.0 C26.5,-10.6 31.3,-13.2 39.0,-15.5 C46.7,-17.8 57.5,-20.8 66.0,-22.0 C74.5,-23.2 81.5,-23.0 90.0,-22.5 C98.5,-22.0 107.0,-21.1 117.0,-19.0 C127.0,-16.9 139.7,-13.2 150.0,-10.0 C160.3,-6.8 179.0,-3.8 179.0,0.0 C179.0,3.8 158.8,9.6 150.0,13.0 C141.2,16.4 134.0,18.5 126.0,20.5 C118.0,22.5 110.0,24.0 102.0,25.0 C94.0,26.0 86.5,27.1 78.0,26.5 C69.5,25.9 60.3,24.1 51.0,21.5 C41.7,18.9 30.5,14.6 22.0,11.0 C13.5,7.4 0.3,3.2 0.0,0.0Z" fill="none" stroke="#2a5a2a" stroke-width="2.6" stroke-dasharray="2.2 1.2"/><circle cx="26" cy="3" r="4.2" fill="#2e7034"/></g><ellipse cx="487.5" cy="551" rx="6" ry="5" fill="#2e7034" transform="rotate(-55 487.5 551)"/><path d="M487.5,551.0 C489.1,549.0 493.2,541.7 497.0,539.0 C500.8,536.3 505.8,534.7 510.0,535.0 C514.2,535.3 519.2,537.5 522.0,541.0 C524.8,544.5 527.0,550.3 527.0,556.0 C527.0,561.7 525.3,569.2 522.0,575.0 C518.7,580.8 512.3,586.8 507.0,591.0 C501.7,595.2 495.5,597.8 490.0,600.0 C484.5,602.2 476.7,603.3 474.0,604.0" fill="none" stroke="#2a5a2a" stroke-width="2.6" stroke-dasharray="2.4 0.9"/><path d="M418.0,613.0 C414.5,613.3 404.7,613.7 397.0,615.0 C389.3,616.3 379.5,618.3 372.0,621.0 C364.5,623.7 356.8,627.0 352.0,631.0 C347.2,635.0 344.2,640.8 343.0,645.0 C341.8,649.2 343.5,654.3 345.0,656.0 C346.5,657.7 350.5,656.3 352.0,655.0 C353.5,653.7 355.0,649.7 354.0,648.0 C353.0,646.3 348.7,643.8 346.0,645.0 C343.3,646.2 340.3,650.5 338.0,655.0 C335.7,659.5 333.3,666.8 332.0,672.0 C330.7,677.2 330.3,683.7 330.0,686.0" fill="none" stroke="#2a5a2a" stroke-width="2.6" stroke-dasharray="2.4 0.9"/><path d="M379.0,705.0 C377.5,707.0 373.0,713.2 370.0,717.0 C367.0,720.8 362.5,726.2 361.0,728.0" fill="none" stroke="#2a5a2a" stroke-width="2.6" stroke-dasharray="2.4 0.9"/><path d="M361.0,728.0 C359.5,727.7 354.8,727.3 352.0,726.0 C349.2,724.7 345.3,722.3 344.0,720.0 C342.7,717.7 343.0,713.3 344.0,712.0 C345.0,710.7 349.0,712.0 350.0,712.0" fill="none" stroke="#2a5a2a" stroke-width="2.6" stroke-dasharray="2.4 0.9"/><path d="M361.0,728.0 C360.5,727.0 359.0,724.0 358.0,722.0 C357.0,720.0 355.0,717.7 355.0,716.0 C355.0,714.3 357.5,712.7 358.0,712.0" fill="none" stroke="#2a5a2a" stroke-width="2.6" stroke-dasharray="2.4 0.9"/><path d="M361.0,728.0 C361.7,729.5 362.7,735.0 365.0,737.0 C367.3,739.0 371.8,740.5 375.0,740.0 C378.2,739.5 382.2,736.2 384.0,734.0 C385.8,731.8 385.7,728.2 386.0,727.0" fill="none" stroke="#2a5a2a" stroke-width="2.6" stroke-dasharray="2.4 0.9"/></g><g transform="translate(1233.5,0) scale(-1,1)"><defs><linearGradient id="lg2" x1="0" y1="0" x2="0" y2="1"><stop offset="0" stop-color="#f5b848"/><stop offset="0.35" stop-color="#f08a38"/><stop offset="0.6" stop-color="#ec4a2e"/><stop offset="1" stop-color="#e5302a"/></linearGradient></defs><g transform="translate(483.75,560) rotate(125.91)"><path d="M0.0,0.0 C-0.3,-3.2 13.5,-5.4 20.0,-8.0 C26.5,-10.6 31.3,-13.2 39.0,-15.5 C46.7,-17.8 57.5,-20.8 66.0,-22.0 C74.5,-23.2 81.5,-23.0 90.0,-22.5 C98.5,-22.0 107.0,-21.1 117.0,-19.0 C127.0,-16.9 139.7,-13.2 150.0,-10.0 C160.3,-6.8 179.0,-3.8 179.0,0.0 C179.0,3.8 158.8,9.6 150.0,13.0 C141.2,16.4 134.0,18.5 126.0,20.5 C118.0,22.5 110.0,24.0 102.0,25.0 C94.0,26.0 86.5,27.1 78.0,26.5 C69.5,25.9 60.3,24.1 51.0,21.5 C41.7,18.9 30.5,14.6 22.0,11.0 C13.5,7.4 0.3,3.2 0.0,0.0Z" fill="url(#lg2)"/><path d="M6.0,1.0 C4.3,3.7 28.0,13.3 40.0,17.0 C52.0,20.7 63.7,23.0 78.0,23.0 C92.3,23.0 111.5,20.0 126.0,17.0 C140.5,14.0 161.0,7.7 165.0,5.0 C169.0,2.3 160.8,1.5 150.0,1.0 C139.2,0.5 116.7,2.0 100.0,2.0 C83.3,2.0 65.7,1.2 50.0,1.0 C34.3,0.8 7.7,-1.7 6.0,1.0Z" fill="#e5302a"/><path d="M34,10 L139.0,7" stroke="#fff" stroke-width="5" stroke-dasharray="14 10" opacity="0.95"/><path d="M25,13 L37,13 L34,0Z" fill="#2a6a32"/><path d="M47,21 L59,21 L56,8Z" fill="#2a6a32"/><path d="M71,25 L83,25 L80,12Z" fill="#2a6a32"/><path d="M95,24 L107,24 L104,11Z" fill="#2a6a32"/><path d="M119,19 L131,19 L128,6Z" fill="#2a6a32"/><path d="M143,12 L155,12 L152,0Z" fill="#2a6a32"/><path d="M0.0,0.0 C-0.3,-3.2 13.5,-5.4 20.0,-8.0 C26.5,-10.6 31.3,-13.2 39.0,-15.5 C46.7,-17.8 57.5,-20.8 66.0,-22.0 C74.5,-23.2 81.5,-23.0 90.0,-22.5 C98.5,-22.0 107.0,-21.1 117.0,-19.0 C127.0,-16.9 139.7,-13.2 150.0,-10.0 C160.3,-6.8 179.0,-3.8 179.0,0.0 C179.0,3.8 158.8,9.6 150.0,13.0 C141.2,16.4 134.0,18.5 126.0,20.5 C118.0,22.5 110.0,24.0 102.0,25.0 C94.0,26.0 86.5,27.1 78.0,26.5 C69.5,25.9 60.3,24.1 51.0,21.5 C41.7,18.9 30.5,14.6 22.0,11.0 C13.5,7.4 0.3,3.2 0.0,0.0Z" fill="none" stroke="#2a5a2a" stroke-width="2.6" stroke-dasharray="2.2 1.2"/><circle cx="26" cy="3" r="4.2" fill="#2e7034"/></g><ellipse cx="487.5" cy="551" rx="6" ry="5" fill="#2e7034" transform="rotate(-55 487.5 551)"/><path d="M487.5,551.0 C489.1,549.0 493.2,541.7 497.0,539.0 C500.8,536.3 505.8,534.7 510.0,535.0 C514.2,535.3 519.2,537.5 522.0,541.0 C524.8,544.5 527.0,550.3 527.0,556.0 C527.0,561.7 525.3,569.2 522.0,575.0 C518.7,580.8 512.3,586.8 507.0,591.0 C501.7,595.2 495.5,597.8 490.0,600.0 C484.5,602.2 476.7,603.3 474.0,604.0" fill="none" stroke="#2a5a2a" stroke-width="2.6" stroke-dasharray="2.4 0.9"/><path d="M418.0,613.0 C414.5,613.3 404.7,613.7 397.0,615.0 C389.3,616.3 379.5,618.3 372.0,621.0 C364.5,623.7 356.8,627.0 352.0,631.0 C347.2,635.0 344.2,640.8 343.0,645.0 C341.8,649.2 343.5,654.3 345.0,656.0 C346.5,657.7 350.5,656.3 352.0,655.0 C353.5,653.7 355.0,649.7 354.0,648.0 C353.0,646.3 348.7,643.8 346.0,645.0 C343.3,646.2 340.3,650.5 338.0,655.0 C335.7,659.5 333.3,666.8 332.0,672.0 C330.7,677.2 330.3,683.7 330.0,686.0" fill="none" stroke="#2a5a2a" stroke-width="2.6" stroke-dasharray="2.4 0.9"/><path d="M379.0,705.0 C377.5,707.0 373.0,713.2 370.0,717.0 C367.0,720.8 362.5,726.2 361.0,728.0" fill="none" stroke="#2a5a2a" stroke-width="2.6" stroke-dasharray="2.4 0.9"/><path d="M361.0,728.0 C359.5,727.7 354.8,727.3 352.0,726.0 C349.2,724.7 345.3,722.3 344.0,720.0 C342.7,717.7 343.0,713.3 344.0,712.0 C345.0,710.7 349.0,712.0 350.0,712.0" fill="none" stroke="#2a5a2a" stroke-width="2.6" stroke-dasharray="2.4 0.9"/><path d="M361.0,728.0 C360.5,727.0 359.0,724.0 358.0,722.0 C357.0,720.0 355.0,717.7 355.0,716.0 C355.0,714.3 357.5,712.7 358.0,712.0" fill="none" stroke="#2a5a2a" stroke-width="2.6" stroke-dasharray="2.4 0.9"/><path d="M361.0,728.0 C361.7,729.5 362.7,735.0 365.0,737.0 C367.3,739.0 371.8,740.5 375.0,740.0 C378.2,739.5 382.2,736.2 384.0,734.0 C385.8,731.8 385.7,728.2 386.0,727.0" fill="none" stroke="#2a5a2a" stroke-width="2.6" stroke-dasharray="2.4 0.9"/></g><rect x="308" y="328" width="4" height="4" fill="#111"/><rect x="615" y="328" width="4" height="4" fill="#111"/><rect x="921" y="328" width="4" height="4" fill="#111"/><rect x="308" y="546" width="4" height="4" fill="#111"/><rect x="921" y="546" width="4" height="4" fill="#111"/><rect x="308" y="765" width="4" height="4" fill="#111"/><rect x="615" y="765" width="4" height="4" fill="#111"/><rect x="921" y="765" width="4" height="4" fill="#111"/><path d="M612,548 H620 M616,544 V552" stroke="#333" stroke-width="1"/></svg>
<svg width="0" height="0" style="position:absolute"><defs><pattern id="grip" width="3" height="3" patternUnits="userSpaceOnUse"><rect x="0" y="0" width="1.5" height="1.5" fill="#c4c4c4"/><rect x="1.5" y="1.5" width="1.5" height="1.5" fill="#dadada"/></pattern></defs></svg>
<svg style="position:absolute;left:2px;top:52px;" width="6" height="26" viewBox="0 0 6 26"><rect x="0" y="0" width="6" height="26" fill="url(#grip)"/></svg>
<div style="position:absolute;left:35px;top:51px;width:27px;height:28px;background:#fbe8c0"></div>
<svg style="position:absolute;left:10.600000000000001px;top:52.5px;" width="24" height="24" viewBox="0 0 24 24"><path d="M3 12L12 3L21 12M6 10V21H10V15H14V21H18V10" fill="none" stroke="#333" stroke-width="1.8"/></svg>
<svg style="position:absolute;left:36.0px;top:52.5px;" width="24" height="24" viewBox="0 0 24 24"><circle cx="12" cy="12" r="11" fill="#d63030"/><path d="M5 8L8 17L12 10L16 17L19 8" fill="none" stroke="#fff" stroke-width="2.6"/></svg>
<div style="position:absolute;left:65px;top:52px;width:1px;height:26px;background:#c8c8c8"></div>
<svg style="position:absolute;left:67.0px;top:52.5px;" width="24" height="24" viewBox="0 0 24 24"><path d="M12 2C5 2 5 12 10 17H14C19 12 19 2 12 2Z" fill="#f4f4f4" stroke="#333" stroke-width="1.4"/><path d="M12 2C10 6 10 13 11 17M12 2C14 6 14 13 13 17" stroke="#333" stroke-width="1.6" fill="none"/><rect x="10" y="18" width="4" height="4" fill="#555"/></svg>
<svg style="position:absolute;left:93.0px;top:52.5px;" width="24" height="24" viewBox="0 0 24 24"><path d="M2 9L6 3L6 9L10 3L10 9" stroke="#d83040" stroke-width="1.4" fill="none"/><circle cx="17" cy="11" r="3.5" fill="#fff" stroke="#222" stroke-width="1.5"/><rect x="14" y="15" width="7" height="7" fill="#fff" stroke="#222" stroke-width="1.5"/><path d="M5 13Q7 20 12 19" stroke="#222" stroke-width="2" fill="none"/></svg>
<div style="position:absolute;left:120px;top:52px;width:1px;height:26px;background:#c8c8c8"></div>
<svg style="position:absolute;left:124.0px;top:52.5px;" width="24" height="24" viewBox="0 0 24 24"><path d="M2 4H8L9 6H15V18H2Z" fill="#f0c870" stroke="#444" stroke-width="1.2"/><path d="M5 7H11L12 9H21V22H5Z" fill="#f3c86a" stroke="#444" stroke-width="1.2"/></svg>
<div style="position:absolute;left:152px;top:52px;width:1px;height:26px;background:#c8c8c8"></div>
<svg style="position:absolute;left:155px;top:52px;" width="6" height="26" viewBox="0 0 6 26"><rect x="0" y="0" width="6" height="26" fill="url(#grip)"/></svg>
<svg style="position:absolute;left:160.0px;top:52.5px;" width="24" height="24" viewBox="0 0 24 24"><path d="M5 2H15L20 7V22H5Z" fill="#fff" stroke="#444" stroke-width="1.4"/><path d="M15 2V7H20" fill="none" stroke="#444" stroke-width="1.2"/></svg>
<svg style="position:absolute;left:185.0px;top:52.5px;" width="24" height="24" viewBox="0 0 24 24"><path d="M2 6H9L11 8H19V11H7L3 20H2Z" fill="#e8c070" stroke="#333" stroke-width="1.2"/><path d="M6 11H23L19 20H2Z" fill="#f0c060" stroke="#333" stroke-width="1.3"/></svg>
<svg style="position:absolute;left:213.0px;top:52.5px;" width="24" height="24" viewBox="0 0 24 24"><path d="M2 6H9L11 8H19V11H7L3 20H2Z" fill="#e8c070" stroke="#333" stroke-width="1.2"/><path d="M6 11H20L17 20H2Z" fill="#f0c060" stroke="#333" stroke-width="1.3"/><circle cx="18" cy="16" r="5" fill="#fff" stroke="#333" stroke-width="1.3"/><path d="M18 13V16H20" stroke="#333" fill="none"/></svg>
<svg style="position:absolute;left:238.0px;top:63.5px;" width="8" height="5" viewBox="0 0 8 5"><path d="M1 1H7L4 4Z" fill="#555"/></svg>
<svg style="position:absolute;left:246.0px;top:52.5px;" width="24" height="24" viewBox="0 0 24 24"><path d="M2 2H19L22 5V22H2Z" fill="#111"/><rect x="6" y="3" width="11" height="7" fill="#fff"/><rect x="6" y="14" width="12" height="8" fill="#fff"/><rect x="9" y="16" width="6" height="6" fill="#111"/></svg>
<svg style="position:absolute;left:271.0px;top:52.5px;" width="24" height="24" viewBox="0 0 24 24"><path d="M3 2H13L17 6V22H3Z" fill="#fff" stroke="#444" stroke-width="1.2"/><circle cx="9" cy="10" r="3" fill="#e04050"/><path d="M9 13V20M5 17Q9 14 13 17" stroke="#40a040" stroke-width="1.6" fill="none"/><path d="M15 9H21L18 6M21 9L18 12" stroke="#222" stroke-width="2" fill="none"/></svg>
<svg style="position:absolute;left:297.0px;top:52.5px;" width="24" height="24" viewBox="0 0 24 24"><rect x="6" y="2" width="12" height="9" fill="#fff" stroke="#222" stroke-width="1.4"/><circle cx="12" cy="6" r="2" fill="#e05060"/><path d="M2 11H22V20H2Z" fill="#fff" stroke="#222" stroke-width="1.8"/><rect x="17" y="16" width="2" height="2" fill="#111"/></svg>
<svg style="position:absolute;left:323.0px;top:52.5px;" width="24" height="24" viewBox="0 0 24 24"><path d="M3 2H15L20 7V22H3Z" fill="#fff" stroke="#444" stroke-width="1.3"/><circle cx="10" cy="10" r="5" fill="#fff" stroke="#333" stroke-width="1.5"/><path d="M13.5 13.5L18 20" stroke="#333" stroke-width="2"/></svg>
<div style="position:absolute;left:350px;top:52px;width:1px;height:26px;background:#c8c8c8"></div>
<svg style="position:absolute;left:354.0px;top:52.5px;" width="24" height="24" viewBox="0 0 24 24"><path d="M6 2L15 17M18 2L9 17" stroke="#222" stroke-width="1.8"/><circle cx="7" cy="19" r="3.3" fill="none" stroke="#30a8d0" stroke-width="2.4"/><circle cx="17" cy="19" r="3.3" fill="none" stroke="#30a8d0" stroke-width="2.4"/></svg>
<svg style="position:absolute;left:380.0px;top:52.5px;" width="24" height="24" viewBox="0 0 24 24"><path d="M2 2H10L13 5V17H2Z" fill="#fff" stroke="#222" stroke-width="1.4"/><path d="M9 7H17L21 11V22H9Z" fill="#fff" stroke="#222" stroke-width="1.5"/><path d="M11 12H19M11 15H19M11 18H19" stroke="#222" stroke-width="1.3"/></svg>
<svg style="position:absolute;left:405.0px;top:52.5px;" width="24" height="24" viewBox="0 0 24 24"><path d="M2 3H16V11H11V22H2Z" fill="#fff" stroke="#222" stroke-width="1.7"/><path d="M6 3V6H12V3" stroke="#222" stroke-width="1.2" fill="none"/><path d="M11 11H22V22H11Z" fill="#fff" stroke="#222" stroke-width="1.7"/></svg>
<div style="position:absolute;left:432px;top:52px;width:1px;height:26px;background:#c8c8c8"></div>
<svg style="position:absolute;left:438.0px;top:52.5px;" width="24" height="24" viewBox="0 0 24 24"><path d="M4 5V13H12" fill="none" stroke="#111" stroke-width="2.6"/><path d="M5 12C9 4 20 4 19 13C18 18 15 20 13 22" fill="none" stroke="#111" stroke-width="3"/></svg>
<svg style="position:absolute;left:464.0px;top:63.5px;" width="8" height="5" viewBox="0 0 8 5"><path d="M1 1H7L4 4Z" fill="#666"/></svg>
<svg style="position:absolute;left:475.0px;top:52.5px;" width="24" height="24" viewBox="0 0 24 24"><path d="M20 5V13H12" fill="none" stroke="#777" stroke-width="2.4"/><path d="M19 12C15 4 4 4 5 13C6 18 9 20 11 22" fill="none" stroke="#777" stroke-width="2.8"/></svg>
<svg style="position:absolute;left:503.0px;top:63.5px;" width="8" height="5" viewBox="0 0 8 5"><path d="M1 1H7L4 4Z" fill="#888"/></svg>
<div style="position:absolute;left:516px;top:52px;width:1px;height:26px;background:#c8c8c8"></div>
<svg style="position:absolute;left:519.0px;top:52.5px;" width="24" height="24" viewBox="0 0 24 24"><rect x="7" y="2" width="10" height="13" rx="2" fill="#7aa0d0" stroke="#557" stroke-width="1"/><circle cx="12" cy="6" r="2" fill="#fff"/><path d="M12 15V22M9 19L12 22L15 19" stroke="#5b78c8" stroke-width="1.8" fill="none"/></svg>
<svg style="position:absolute;left:544.0px;top:52.5px;" width="24" height="24" viewBox="0 0 24 24"><rect x="3" y="2" width="18" height="13" fill="#2a8a5a" stroke="#333" stroke-width="1"/><path d="M4 12L10 8L20 12" stroke="#60c060" fill="none"/><path d="M12 15V22M9 19L12 22L15 19" stroke="#5b78c8" stroke-width="1.8" fill="none"/></svg>
<svg style="position:absolute;left:569.0px;top:52.5px;" width="24" height="24" viewBox="0 0 24 24"><path d="M12 1L16 5H14V9H10V5H8Z" fill="#9a6ab8"/><path d="M3 14L9 10V22H3Z" fill="#38a8d8"/><circle cx="16" cy="17" r="5" fill="#e03838"/></svg>
<div style="position:absolute;left:597px;top:52px;width:1px;height:26px;background:#c8c8c8"></div>
<svg style="position:absolute;left:603.0px;top:52.5px;" width="24" height="24" viewBox="0 0 24 24"><path d="M6 10Q6 6 12 6Q19 6 19 11L16 17H9Z" fill="#fff" stroke="#444" stroke-width="1.5"/><path d="M12 2V6M9.5 4L12 1.5L14.5 4" stroke="#8a3a9a" stroke-width="2" fill="none"/><path d="M1 22Q6 20 10 18" stroke="#444" stroke-width="1.5" fill="none"/></svg>
<svg style="position:absolute;left:627.0px;top:52.5px;" width="24" height="24" viewBox="0 0 24 24"><rect x="1" y="1" width="22" height="22" rx="2" fill="#1fa048" stroke="#333" stroke-width="1.5"/><path d="M7 6H16V15H10L6 18Z" fill="#d8f0d0"/></svg>
<svg style="position:absolute;left:652.0px;top:52.5px;" width="24" height="24" viewBox="0 0 24 24"><circle cx="12" cy="14" r="8" fill="none" stroke="#c4c4c4" stroke-width="2"/><path d="M12 2V8M9 5L12 2L15 5" stroke="#c4c4c4" stroke-width="2" fill="none"/></svg>
<svg style="position:absolute;left:678.0px;top:52.5px;" width="24" height="24" viewBox="0 0 24 24"><path d="M4 22V10H10V22M13 22V12H20V22" fill="none" stroke="#c4c4c4" stroke-width="2"/><path d="M12 2V8M9 5L12 2L15 5" stroke="#c4c4c4" stroke-width="2" fill="none"/></svg>
<div style="position:absolute;left:704px;top:52px;width:1px;height:26px;background:#c8c8c8"></div>
<div style="position:absolute;left:709px;top:56px;width:75px;height:17px;background:#fff;border:1px solid #dcdcdc;box-sizing:border-box"></div>
<div class="t" style="left:712.0px;top:58.4px;font-size:12px;color:#111;font-weight:normal;transform:scaleX(0.899);transform-origin:0 0;">100</div>
<svg style="position:absolute;left:771.5px;top:62.0px;" width="9" height="6" viewBox="0 0 9 6"><path d="M1 1H8L4.5 5Z" fill="#444"/></svg>
<div class="t" style="left:787.0px;top:58.4px;font-size:12px;color:#222;font-weight:normal;transform:scaleX(0.937);transform-origin:0 0;">%</div>
<div style="position:absolute;left:800px;top:52px;width:1px;height:26px;background:#c8c8c8"></div>
<svg style="position:absolute;left:803.0px;top:52.5px;" width="24" height="24" viewBox="0 0 24 24"><rect x="2" y="4" width="20" height="16" fill="#fff" stroke="#555" stroke-width="1.3"/><rect x="2" y="4" width="20" height="2.5" fill="#3a9a5a"/><path d="M5 10H8M5 15H8M10 10H19M10 15H19" stroke="#777" stroke-width="1.2"/></svg>
<svg style="position:absolute;left:962px;top:52px;" width="6" height="26" viewBox="0 0 6 26"><rect x="0" y="0" width="6" height="26" fill="url(#grip)"/></svg>
<svg style="position:absolute;left:974.0px;top:52.5px;" width="24" height="24" viewBox="0 0 24 24"><circle cx="12" cy="12" r="11" fill="#1a1a1a"/><circle cx="12" cy="6.5" r="2" fill="#fff"/><path d="M9.5 10H13V18H15M9.5 18H15" stroke="#fff" stroke-width="2.4" fill="none"/></svg>
<svg style="position:absolute;left:999.0px;top:52.5px;" width="24" height="24" viewBox="0 0 24 24"><path d="M3 6L8 3L12 8L16 3L21 6L17 12H7Z" fill="#3a5aa8"/><circle cx="9" cy="8" r="2.5" fill="#c04040"/><circle cx="15" cy="8" r="2.5" fill="#60a060"/><path d="M8 15H16L15 21H9Z" fill="#f07030"/></svg>
<div style="position:absolute;left:1025px;top:51px;width:24px;height:28px;background:#fbe8c0"></div>
<svg style="position:absolute;left:1025.0px;top:52.5px;" width="24" height="24" viewBox="0 0 24 24"><rect x="2" y="6" width="16" height="16" fill="#fff" stroke="#3a78c8" stroke-width="1.6"/><rect x="2" y="6" width="16" height="3" fill="#3a78c8"/><path d="M5 14H15M5 18H13" stroke="#888" stroke-width="1.3"/><path d="M10 6L18 2H23V8L15 10Z" fill="#f0b080" stroke="#555" stroke-width="0.8"/></svg>
<svg style="position:absolute;left:1050.0px;top:52.5px;" width="24" height="24" viewBox="0 0 24 24"><rect x="2" y="2" width="5" height="5" fill="#e85050"/><rect x="9" y="2" width="4" height="5" fill="#e87070"/><rect x="2" y="9" width="5" height="5" fill="#60a0e0"/><rect x="9" y="9" width="4" height="5" fill="#60a0e0"/><rect x="2" y="16" width="5" height="5" fill="#50b050"/><rect x="9" y="16" width="4" height="5" fill="#50b050"/><path d="M15 4H22M15 11H22M15 18H22" stroke="#555" stroke-width="1.5"/></svg>
<svg style="position:absolute;left:1076.0px;top:52.5px;" width="12" height="24" viewBox="0 0 12 24"><rect x="2" y="2" width="8" height="20" fill="#1a1a3a"/><rect x="2" y="6" width="8" height="3" fill="#7a60c0"/><rect x="2" y="11" width="8" height="3" fill="#50b050"/><rect x="2" y="16" width="8" height="2" fill="#d05050"/></svg>
<svg style="position:absolute;left:1089.0px;top:52.5px;" width="12" height="24" viewBox="0 0 12 24"><path d="M1 4H10M1 8H10M1 12H10M1 16H10M1 20H10" stroke="#888" stroke-width="1.2"/></svg>
<svg style="position:absolute;left:1101.0px;top:52.5px;" width="24" height="24" viewBox="0 0 24 24"><rect x="1" y="2" width="22" height="3.5" rx="1" fill="#e8c880" stroke="#333" stroke-width="1"/><rect x="1" y="18.5" width="22" height="3.5" rx="1" fill="#e8c880" stroke="#333" stroke-width="1"/><rect x="4" y="5.5" width="16" height="13" fill="#1ea0e8" stroke="#222" stroke-width="1.5"/></svg>
<svg style="position:absolute;left:1127.0px;top:52.5px;" width="24" height="24" viewBox="0 0 24 24"><circle cx="3.0" cy="3.0" r="0.9" fill="#e08080"/><circle cx="3.0" cy="8.5" r="0.9" fill="#333"/><circle cx="3.0" cy="14.0" r="0.9" fill="#e08080"/><circle cx="3.0" cy="19.5" r="0.9" fill="#333"/><circle cx="7.5" cy="3.0" r="0.9" fill="#e08080"/><circle cx="7.5" cy="8.5" r="0.9" fill="#333"/><circle cx="7.5" cy="14.0" r="0.9" fill="#e08080"/><circle cx="7.5" cy="19.5" r="0.9" fill="#333"/><circle cx="12.0" cy="3.0" r="0.9" fill="#e08080"/><circle cx="12.0" cy="8.5" r="0.9" fill="#333"/><circle cx="12.0" cy="14.0" r="0.9" fill="#e08080"/><circle cx="12.0" cy="19.5" r="0.9" fill="#333"/><circle cx="16.5" cy="3.0" r="0.9" fill="#e08080"/><circle cx="16.5" cy="8.5" r="0.9" fill="#333"/><circle cx="16.5" cy="14.0" r="0.9" fill="#e08080"/><circle cx="16.5" cy="19.5" r="0.9" fill="#333"/><circle cx="21.0" cy="3.0" r="0.9" fill="#e08080"/><circle cx="21.0" cy="8.5" r="0.9" fill="#333"/><circle cx="21.0" cy="14.0" r="0.9" fill="#e08080"/><circle cx="21.0" cy="19.5" r="0.9" fill="#333"/></svg>
<svg style="position:absolute;left:1153.0px;top:52.5px;" width="24" height="24" viewBox="0 0 24 24"><circle cx="5" cy="4" r="2.3" fill="#e03050"/><path d="M5 7V13M2 9H8M3 16L5 13L7 16" stroke="#e03050" stroke-width="1.7" fill="none"/><circle cx="12" cy="4" r="2.3" fill="#20a060"/><path d="M12 7V13M9 9H15M10 16L12 13L14 16" stroke="#20a060" stroke-width="1.7" fill="none"/><circle cx="19" cy="4" r="2.3" fill="#30a0d0"/><path d="M19 7V13M16 9H22M17 16L19 13L21 16" stroke="#30a0d0" stroke-width="1.7" fill="none"/><path d="M1 19H23M1 22H23" stroke="#4040a0" stroke-width="1.6"/></svg>
<svg style="position:absolute;left:1178.0px;top:52.5px;" width="24" height="24" viewBox="0 0 24 24"><circle cx="12" cy="6" r="4.5" fill="#f0c070" stroke="#555" stroke-width="1"/><rect x="9" y="10" width="6" height="7" fill="#f0c070" stroke="#555" stroke-width="1"/><rect x="2" y="17" width="20" height="5" fill="#d83020" stroke="#555" stroke-width="1"/></svg>
<svg style="position:absolute;left:1203.6px;top:52.5px;" width="24" height="24" viewBox="0 0 24 24"><defs><linearGradient id="bw" x1="0" x2="1"><stop offset="0" stop-color="#fff"/><stop offset="1" stop-color="#111"/></linearGradient></defs><rect x="1" y="1" width="22" height="22" fill="url(#bw)"/><rect x="14" y="1" width="9" height="22" fill="#111"/><circle cx="13" cy="8" r="2.5" fill="#fff"/><rect x="16" y="12" width="4" height="8" fill="#fff"/></svg>
<div style="position:absolute;left:1232px;top:52px;width:1px;height:26px;background:#c8c8c8"></div>
<svg style="position:absolute;left:2px;top:83px;" width="6" height="33" viewBox="0 0 6 33"><rect x="0" y="0" width="6" height="33" fill="url(#grip)"/></svg>
<svg style="position:absolute;left:356px;top:84px;" width="6" height="32" viewBox="0 0 6 32"><rect x="0" y="0" width="6" height="32" fill="url(#grip)"/></svg>
<svg style="position:absolute;left:369.0px;top:87.0px;" width="24" height="24" viewBox="0 0 24 24"><path d="M2 6L8 12L2 18Z" fill="#a8d8e8"/><path d="M10 3V21" stroke="#333" stroke-width="1.5" stroke-dasharray="2 2"/><path d="M22 4V20L13 12Z" fill="#9a9ad0" stroke="#444" stroke-width="1.2"/></svg>
<svg style="position:absolute;left:392.5px;top:87.0px;" width="24" height="24" viewBox="0 0 24 24"><path d="M5 2H19L12 9Z" fill="#a8d8e8"/><path d="M2 12H22" stroke="#333" stroke-width="1.5" stroke-dasharray="2 2"/><path d="M4 22H20L12 14Z" fill="#9a9ad0" stroke="#444" stroke-width="1.2"/></svg>
<svg style="position:absolute;left:418.0px;top:87.0px;" width="24" height="24" viewBox="0 0 24 24"><path d="M3 20L20 3" stroke="#888" stroke-width="1.3"/><path d="M5 5L11 5L5 11Z" fill="#c8d8e8"/><path d="M21 13V21H13Z" fill="#9a9ad0" stroke="#555" stroke-width="1"/><circle cx="4" cy="19" r="1.8" fill="none" stroke="#777"/></svg>
<div style="position:absolute;left:445px;top:84px;width:1px;height:32px;background:#c8c8c8"></div>
<svg style="position:absolute;left:450.0px;top:87.0px;" width="24" height="24" viewBox="0 0 24 24"><path d="M2 21H22M5 3L20 20" stroke="#555" stroke-width="1.5"/><path d="M5 12Q12 4 18 12" stroke="#777" stroke-width="1.2" fill="none" stroke-dasharray="2 1.5"/></svg>
<svg style="position:absolute;left:475.0px;top:87.0px;" width="24" height="24" viewBox="0 0 24 24"><path d="M2 21H22M20 3L5 20" stroke="#555" stroke-width="1.5"/><path d="M5 12Q12 4 18 12" stroke="#777" stroke-width="1.2" fill="none" stroke-dasharray="2 1.5"/></svg>
<div style="position:absolute;left:502px;top:84px;width:1px;height:32px;background:#c8c8c8"></div>
<svg style="position:absolute;left:505.0px;top:87.0px;" width="24" height="24" viewBox="0 0 24 24"><path d="M3 8Q10 1 18 6" stroke="#3a4a8a" stroke-width="3" fill="none"/><path d="M2 3V11H9Z" fill="#3a4a8a"/><path d="M18 8Q24 16 14 21Q8 22 6 18" stroke="#555" stroke-width="1.3" fill="none" stroke-dasharray="2 2"/></svg>
<div style="position:absolute;left:537.6px;top:88px;width:28.4px;height:24px;background:#fff;border:1px solid #dedede;box-sizing:border-box"></div>
<div class="t" style="left:541.0px;top:93.4px;font-size:12px;color:#111;font-weight:normal;transform:scaleX(1.124);transform-origin:0 0;">0</div>
<svg style="position:absolute;left:568.5px;top:93.5px;" width="5" height="5" viewBox="0 0 5 5"><circle cx="2" cy="2" r="1.3" fill="none" stroke="#444"/></svg>
<div style="position:absolute;left:576px;top:84px;width:1px;height:32px;background:#c8c8c8"></div>
<svg style="position:absolute;left:580.0px;top:87.0px;" width="24" height="24" viewBox="0 0 24 24"><path d="M6 9L14 6V21L6 21Z" fill="#1e98e0"/><path d="M14 6L22 6L14 21Z" fill="none" stroke="#bbb" stroke-width="1"/><path d="M12 5H19M17 3L19 5L17 7" stroke="#222" stroke-width="1.4" fill="none"/></svg>
<div style="position:absolute;left:612px;top:88px;width:24px;height:24px;background:#fff;border:1px solid #dedede;box-sizing:border-box"></div>
<div class="t" style="left:616.0px;top:93.4px;font-size:12px;color:#111;font-weight:normal;transform:scaleX(1.124);transform-origin:0 0;">0</div>
<svg style="position:absolute;left:637.5px;top:93.5px;" width="5" height="5" viewBox="0 0 5 5"><circle cx="2" cy="2" r="1.3" fill="none" stroke="#444"/></svg>
<div style="position:absolute;left:644px;top:84px;width:1px;height:32px;background:#c8c8c8"></div>
<svg style="position:absolute;left:647.0px;top:87.0px;" width="24" height="24" viewBox="0 0 24 24"><rect x="2" y="2" width="8" height="7" fill="#fff" stroke="#333" stroke-width="1"/><path d="M3 20L20 3" stroke="#888" stroke-width="1.3"/><path d="M22 13V22H13Z" fill="#9a9ad0" stroke="#555" stroke-width="1"/><circle cx="4" cy="19" r="1.8" fill="none" stroke="#777"/></svg>
<svg style="position:absolute;left:674.0px;top:87.0px;" width="24" height="24" viewBox="0 0 24 24"><path d="M3 20L20 3" stroke="#888" stroke-width="1.3"/><circle cx="12" cy="7" r="4" fill="none" stroke="#888" stroke-width="1"/><path d="M22 13V22H13Z" fill="#9a9ad0" stroke="#555" stroke-width="1"/><circle cx="4" cy="19" r="1.8" fill="none" stroke="#777"/></svg>
<svg style="position:absolute;left:703px;top:84px;" width="6" height="32" viewBox="0 0 6 32"><rect x="0" y="0" width="6" height="32" fill="url(#grip)"/></svg>
<div style="position:absolute;left:708px;top:84px;width:27px;height:31px;background:#fbe8c0"></div>
<svg style="position:absolute;left:709.5px;top:87.0px;" width="24" height="24" viewBox="0 0 24 24"><ellipse cx="12" cy="12" rx="11" ry="6" transform="rotate(-32 12 12)" fill="none" stroke="#e03030" stroke-width="1.2"/><g transform="rotate(-32 12 12)"><path d="M4 10L6 14" stroke="#e03030" stroke-width="2"/><path d="M7 10L9 14" stroke="#e03030" stroke-width="2"/><path d="M10 8L12 16" stroke="#e03030" stroke-width="2"/><path d="M13 8L15 16" stroke="#e03030" stroke-width="2"/><path d="M16 8L18 16" stroke="#e03030" stroke-width="2"/><path d="M19 10L21 14" stroke="#e03030" stroke-width="2"/></g></svg>
<div style="position:absolute;left:740px;top:84px;width:52px;height:31px;background:#fbe8c0"></div>
<svg style="position:absolute;left:740.0px;top:87.0px;" width="24" height="24" viewBox="0 0 24 24"><ellipse cx="12" cy="12" rx="11" ry="6" transform="rotate(-32 12 12)" fill="none" stroke="#e86050" stroke-width="1.2"/><g transform="rotate(-32 12 12)"><path d="M4 10L6 14" stroke="#e86050" stroke-width="1.5"/><path d="M7 10L9 14" stroke="#e86050" stroke-width="1.5"/><path d="M10 8L12 16" stroke="#e86050" stroke-width="1.5"/><path d="M13 8L15 16" stroke="#e86050" stroke-width="1.5"/><path d="M16 8L18 16" stroke="#e86050" stroke-width="1.5"/><path d="M19 10L21 14" stroke="#e86050" stroke-width="1.5"/></g></svg>
<svg style="position:absolute;left:767.0px;top:87.0px;" width="24" height="24" viewBox="0 0 24 24"><ellipse cx="12" cy="12" rx="11" ry="6" transform="rotate(-32 12 12)" fill="none" stroke="#c8b070" stroke-width="1.2"/></svg>
<svg style="position:absolute;left:792.0px;top:87.0px;" width="24" height="24" viewBox="0 0 24 24"><ellipse cx="12" cy="12" rx="11" ry="6" transform="rotate(-32 12 12)" fill="none" stroke="#e06080" stroke-width="1.2"/><g transform="rotate(-32 12 12)"><path d="M4 10L6 14" stroke="#e06080" stroke-width="1.1"/><path d="M7 10L9 14" stroke="#e06080" stroke-width="1.1"/><path d="M10 8L12 16" stroke="#e06080" stroke-width="1.1"/><path d="M13 8L15 16" stroke="#e06080" stroke-width="1.1"/><path d="M16 8L18 16" stroke="#e06080" stroke-width="1.1"/><path d="M19 10L21 14" stroke="#e06080" stroke-width="1.1"/></g></svg>
<svg style="position:absolute;left:817.0px;top:87.0px;" width="24" height="24" viewBox="0 0 24 24"><path d="M2 2L6 2L4 6Z" fill="#111"/><path d="M6 6L18 18" stroke="#777" stroke-dasharray="2 2"/><path d="M22 22L18 22L20 18Z" fill="#111"/></svg>
<div style="position:absolute;left:846px;top:84px;width:20px;height:31px;background:#fbe8c0"></div>
<svg style="position:absolute;left:844.0px;top:87.0px;" width="24" height="24" viewBox="0 0 24 24"><path d="M12 3V22M7 5V16M17 5V16M4 16H20" stroke="#222" stroke-width="1.5"/><path d="M4 16V20M20 16V20" stroke="#c03020" stroke-width="1.5"/></svg>
<svg style="position:absolute;left:868.0px;top:87.0px;" width="24" height="24" viewBox="0 0 24 24"><ellipse cx="10" cy="6" rx="8" ry="4" fill="#f0e090" stroke="#444" stroke-width="1"/><path d="M17 6L23 2V10Z" fill="#f0e090" stroke="#444" stroke-width="1"/><ellipse cx="10" cy="17" rx="8" ry="4" fill="#f0e090" stroke="#444" stroke-width="1"/><path d="M17 17L23 13V21Z" fill="#f0e090" stroke="#444" stroke-width="1"/></svg>
<div style="position:absolute;left:897px;top:84px;width:1px;height:32px;background:#c8c8c8"></div>
<svg style="position:absolute;left:900.0px;top:87.0px;" width="24" height="24" viewBox="0 0 24 24"><rect x="1" y="2" width="22" height="20" fill="#2a5a8a" stroke="#333" stroke-width="1.2"/><rect x="3" y="4" width="18" height="10" fill="#5ab0e0"/><path d="M3 16Q12 10 21 16V20H3Z" fill="#30a040"/><path d="M3 14L8 7L12 14Z" fill="#207030"/><rect x="14" y="6" width="4" height="4" fill="#f0e060"/></svg>
<svg style="position:absolute;left:923.5px;top:87.0px;" width="24" height="24" viewBox="0 0 24 24"><rect x="7" y="2" width="9" height="9" fill="#20a050"/><circle cx="7" cy="17" r="5.5" fill="#e02828"/><path d="M11 22L17 10L23 22Z" fill="#30a8e0"/></svg>
<div style="position:absolute;left:954px;top:84px;width:20px;height:31px;background:#fbe8c0"></div>
<svg style="position:absolute;left:950.5px;top:87.0px;" width="24" height="24" viewBox="0 0 24 24"><path d="M12 2L15 9L22 9L16.5 14L19 21L12 17L5 21L7.5 14L2 9L9 9Z" fill="none" stroke="#d8c890" stroke-width="1.5"/></svg>
<div style="position:absolute;left:979px;top:84px;width:1px;height:32px;background:#c8c8c8"></div>
<svg style="position:absolute;left:981.0px;top:87.0px;" width="24" height="24" viewBox="0 0 24 24"><path d="M4 18Q1 6 12 4Q23 6 20 18L16 20Q18 10 12 10Q6 10 8 20Z" fill="#f0a0a0" stroke="#c06060" stroke-width="1"/></svg>
<svg style="position:absolute;left:1008.0px;top:87.0px;" width="24" height="24" viewBox="0 0 24 24"><path d="M2 6L8 2H16L22 6L20 11L17 10V22H7V10L4 11Z" fill="#1a9a48" stroke="#14703a" stroke-width="1"/></svg>
<svg style="position:absolute;left:1033.0px;top:87.0px;" width="24" height="24" viewBox="0 0 24 24"><circle cx="12" cy="6" r="5" fill="#e06080"/><circle cx="6" cy="17" r="5" fill="#7050a0"/><circle cx="18" cy="17" r="5" fill="#30a060"/></svg>
<div style="position:absolute;left:1058px;top:84px;width:1px;height:32px;background:#c8c8c8"></div>
<svg style="position:absolute;left:1063.0px;top:87.0px;" width="24" height="24" viewBox="0 0 24 24"><ellipse cx="12" cy="12" rx="9" ry="9" fill="none" stroke="#2a9a60" stroke-width="2.4"/><rect x="1" y="8" width="3" height="8" fill="#2a9a60"/><rect x="20" y="8" width="3" height="8" fill="#2a9a60"/></svg>
<svg style="position:absolute;left:1088.7px;top:87.0px;" width="24" height="24" viewBox="0 0 24 24"><rect x="2" y="2" width="20" height="20" fill="#fff" stroke="#555" stroke-width="1.3"/><path d="M8.5 2V22M15.5 2V22M2 8.5H22M2 15.5H22" stroke="#555" stroke-width="1.2"/></svg>
<svg style="position:absolute;left:1115.7px;top:87.0px;" width="24" height="24" viewBox="0 0 24 24"><rect x="2" y="2" width="20" height="20" fill="#f8f0c0" stroke="#555" stroke-width="1.3"/><rect x="2" y="2" width="6" height="20" fill="#c8d8f0"/><rect x="2" y="2" width="20" height="6" fill="#d8d8d8"/><path d="M8.5 2V22M15.5 2V22M2 8.5H22M2 15.5H22" stroke="#777" stroke-width="1.1"/></svg>
<div style="position:absolute;left:1143px;top:84px;width:1px;height:32px;background:#c8c8c8"></div>
<div style="position:absolute;left:1146px;top:88px;width:49px;height:23px;background:#fff;border:1px solid #dedede;box-sizing:border-box"></div>
<div class="t" style="left:1148.0px;top:92.9px;font-size:12px;color:#111;font-weight:normal;transform:scaleX(0.949);transform-origin:0 0;">Metric</div>
<svg style="position:absolute;left:1183.5px;top:95.0px;" width="9" height="6" viewBox="0 0 9 6"><path d="M1 1H8L4.5 5Z" fill="#444"/></svg>
<svg style="position:absolute;left:1196.6px;top:87.0px;" width="24" height="24" viewBox="0 0 24 24"><ellipse cx="12" cy="12" rx="9" ry="9" fill="none" stroke="#2a9a60" stroke-width="2.4"/><rect x="1" y="8" width="3" height="8" fill="#2a9a60"/><rect x="20" y="8" width="3" height="8" fill="#2a9a60"/><path d="M16 6L7 17" stroke="#111" stroke-width="2.4"/><path d="M7 17L5 20" stroke="#e07020" stroke-width="2.4"/></svg>
<div style="position:absolute;left:1222px;top:84px;width:25px;height:31px;background:#fbe8c0"></div>
<svg style="position:absolute;left:1222.0px;top:87.0px;" width="24" height="24" viewBox="0 0 24 24"><path d="M3 13Q12 2 21 10" fill="none" stroke="#222" stroke-width="1.5"/><path d="M18 8L22 10L19 13" fill="#222"/><path d="M4 15L8 19" stroke="#30a040" stroke-width="2"/><path d="M16 18L20 15" stroke="#c04030" stroke-width="2"/><path d="M8 18Q12 14 16 17" stroke="#777" stroke-dasharray="1.5 1.5" fill="none"/></svg>
<div style="position:absolute;left:1251px;top:84px;width:1px;height:32px;background:#c8c8c8"></div>
<svg style="position:absolute;left:1254.0px;top:87.0px;" width="24" height="24" viewBox="0 0 24 24"><circle cx="8" cy="7" r="4" fill="#aac" stroke="#555"/><circle cx="15" cy="6" r="4" fill="#889" stroke="#444"/><rect x="7" y="12" width="8" height="7" fill="#fff" stroke="#888"/><path d="M17 15L23 19L17 23Z" fill="#30a050"/></svg>
<svg style="position:absolute;left:4px;top:121px;" width="6" height="25" viewBox="0 0 6 25"><rect x="0" y="0" width="6" height="25" fill="url(#grip)"/></svg>
<div class="t" style="left:13.5px;top:126.9px;font-size:12px;color:#111;font-weight:bold;transform:scaleX(0.908);transform-origin:0 0;">Outlines:</div>
<div style="position:absolute;left:66px;top:120px;width:23px;height:26px;background:#fbe8c0"></div>
<svg style="position:absolute;left:65.5px;top:121.0px;" width="24" height="24" viewBox="0 0 24 24"><path d="M1 12H23" stroke="#d8452a" stroke-width="2" stroke-dasharray="4 3"/></svg>
<svg style="position:absolute;left:90.4px;top:121.0px;" width="24" height="24" viewBox="0 0 24 24"><path d="M0 12H24" stroke="#d8452a" stroke-width="3" stroke-dasharray="5 3"/></svg>
<svg style="position:absolute;left:116.4px;top:121.0px;" width="24" height="24" viewBox="0 0 24 24"><path d="M0 12H24" stroke="#d8452a" stroke-width="3" stroke-dasharray="5 3"/></svg>
<svg style="position:absolute;left:141.8px;top:121.0px;" width="24" height="24" viewBox="0 0 24 24"><path d="M2 14L20 9M20 9L6 16M6 16L23 11" stroke="#d8452a" stroke-width="2.2" fill="none"/></svg>
<svg style="position:absolute;left:167.4px;top:121.0px;" width="24" height="24" viewBox="0 0 24 24"><path d="M2 18L8 8L10 16L15 7L17 15L22 8" stroke="#d8452a" stroke-width="2" fill="none"/><path d="M2 17L21 9" stroke="#d8452a" stroke-width="1.5"/></svg>
<svg style="position:absolute;left:193.4px;top:121.0px;" width="24" height="24" viewBox="0 0 24 24"><path d="M4 12L7 9L10 12L7 15Z M10 12L13 9L16 12L13 15Z M16 12L19 9L22 12L19 15Z" fill="#d82a2a"/></svg>
<svg style="position:absolute;left:218.4px;top:121.0px;" width="24" height="24" viewBox="0 0 24 24"><path d="M2 18Q12 2 22 18" stroke="#d8452a" stroke-width="3" fill="none"/><path d="M5 12L3 8M9 9L8 4M14 8L15 3M18 11L21 7" stroke="#d8452a" stroke-width="1.6"/></svg>
<div style="position:absolute;left:246px;top:121px;width:1px;height:25px;background:#999"></div>
<svg style="position:absolute;left:249.0px;top:121.0px;" width="24" height="24" viewBox="0 0 24 24"><path d="M1 10L4 15L7 9L10 15L13 9L16 15L19 9L22 15" stroke="#d8452a" stroke-width="2" fill="none"/></svg>
<svg style="position:absolute;left:274.5px;top:121.0px;" width="24" height="24" viewBox="0 0 24 24"><path d="M1 10L4 15L7 9L10 15L13 9L16 15L19 9L22 15" stroke="#b8352a" stroke-width="3" fill="none"/></svg>
<svg style="position:absolute;left:299.8px;top:121.0px;" width="24" height="24" viewBox="0 0 24 24"><path d="M1 15L5 9L9 15L13 9L17 15L21 9" stroke="#d8452a" stroke-width="1.8" fill="none"/></svg>
<svg style="position:absolute;left:325.0px;top:121.0px;" width="24" height="24" viewBox="0 0 24 24"><path d="M1 10H23M4 10V16M10 10V16M16 10V16M22 10V16" stroke="#d8452a" stroke-width="1.6" fill="none"/></svg>
<div style="position:absolute;left:352px;top:121px;width:1px;height:25px;background:#999"></div>
<svg style="position:absolute;left:358.7px;top:121.0px;" width="24" height="24" viewBox="0 0 24 24"><path d="M2 6V16H6V9H10V16H14V9Q18 9 18 13V16H22" stroke="#c8352a" stroke-width="2" fill="none"/></svg>
<svg style="position:absolute;left:382.0px;top:121.0px;" width="24" height="24" viewBox="0 0 24 24"><path d="M3 6V18M7 7V12M7 15V18M11 6V9M11 12V18M15 7V18M19 6V12M19 15V18" stroke="#d8452a" stroke-width="2"/></svg>
<svg style="position:absolute;left:407.6px;top:121.0px;" width="24" height="24" viewBox="0 0 24 24"><path d="M1 15V10H6V15H11V10H16V15H21V10" stroke="#c8352a" stroke-width="2" fill="none"/></svg>
<svg style="position:absolute;left:433.0px;top:121.0px;" width="24" height="24" viewBox="0 0 24 24"><rect x="2" y="8" width="20" height="9" rx="4.5" fill="none" stroke="#d8452a" stroke-width="2"/><path d="M7 8V17M12 8V17M17 8V17" stroke="#d8452a" stroke-width="1.6"/></svg>
<svg style="position:absolute;left:458.0px;top:121.0px;" width="24" height="24" viewBox="0 0 24 24"><path d="M2 8H22M2 10.5H22M2 13H22M2 15.5H22M2 18H22" stroke="#999" stroke-width="1.2"/></svg>
<div style="position:absolute;left:485px;top:121px;width:1px;height:25px;background:#999"></div>
<svg style="position:absolute;left:488.5px;top:121.0px;" width="24" height="24" viewBox="0 0 24 24"><path d="M18 6Q12 2 7 6Q2 12 7 18Q12 22 18 18L14 14Q11 16 9 13Q8 10 11 8Q13 7 15 9Z" fill="none" stroke="#666" stroke-width="1.4"/></svg>
<svg style="position:absolute;left:517px;top:121px;" width="6" height="25" viewBox="0 0 6 25"><rect x="0" y="0" width="6" height="25" fill="url(#grip)"/></svg>
<div class="t" style="left:531.0px;top:126.9px;font-size:12px;color:#111;font-weight:bold;transform:scaleX(0.775);transform-origin:0 0;">Fills:</div>
<svg style="position:absolute;left:559.0px;top:121.0px;" width="24" height="24" viewBox="0 0 24 24"><path d="M1 20L6 4L9 20L14 4L17 20L22 4" stroke="#d8452a" stroke-width="2" fill="none"/></svg>
<svg style="position:absolute;left:584.6px;top:121.0px;" width="24" height="24" viewBox="0 0 24 24"><path d="M1 20L6 4L9 20L14 4L17 20L22 4" stroke="#c03a2a" stroke-width="3.2" fill="none"/></svg>
<svg style="position:absolute;left:608.4px;top:121.0px;" width="24" height="24" viewBox="0 0 24 24"><path d="M1 20L6 4L11 20L16 4L21 20" stroke="#d8452a" stroke-width="1.8" fill="none"/></svg>
<svg style="position:absolute;left:633.7px;top:121.0px;" width="24" height="24" viewBox="0 0 24 24"><path d="M2 20V4H10V20M10 4H18V20M6 4V20M14 4V20M2 4H22V20" stroke="#d8452a" stroke-width="1.6" fill="none"/></svg>
<div style="position:absolute;left:661px;top:121px;width:1px;height:25px;background:#999"></div>
<svg style="position:absolute;left:664.0px;top:121.0px;" width="24" height="24" viewBox="0 0 24 24"><path d="M2 6V18H6V8H10V18H14V6Q18 6 18 18H22" stroke="#c8352a" stroke-width="2" fill="none"/></svg>
<div style="position:absolute;left:691px;top:120px;width:24px;height:26px;background:#fbe8c0"></div>
<svg style="position:absolute;left:691.0px;top:121.0px;" width="24" height="24" viewBox="0 0 24 24"><ellipse cx="9" cy="12" rx="6" ry="9" fill="none" stroke="#e05a20" stroke-width="2"/><ellipse cx="15" cy="12" rx="6" ry="9" fill="none" stroke="#e05a20" stroke-width="2"/><path d="M10 14L10 24L13 21L16 25L17 24L15 20H19Z" fill="#fff" stroke="#333" stroke-width="1"/></svg>
<svg style="position:absolute;left:716.0px;top:121.0px;" width="24" height="24" viewBox="0 0 24 24"><path d="M2 18V6H7V18H12V6H17V18H22V6" stroke="#c8352a" stroke-width="2" fill="none"/></svg>
<svg style="position:absolute;left:741.6px;top:121.0px;" width="24" height="24" viewBox="0 0 24 24"><rect x="2" y="2" width="20" height="20" fill="none" stroke="#e04a3a" stroke-width="2"/><path d="M2 8H16V16H8V22M12 2V12" stroke="#e04a3a" stroke-width="2" fill="none"/></svg>
<svg style="position:absolute;left:767.0px;top:121.0px;" width="24" height="24" viewBox="0 0 24 24"><rect x="2" y="5" width="20" height="6" rx="3" fill="none" stroke="#d83a2a" stroke-width="1.8"/><rect x="2" y="13" width="20" height="6" rx="3" fill="none" stroke="#d83a2a" stroke-width="1.8"/><path d="M9 5V11M15 5V11M9 13V19M15 13V19" stroke="#d83a2a" stroke-width="1.6"/></svg>
<svg style="position:absolute;left:792.0px;top:121.0px;" width="24" height="24" viewBox="0 0 24 24"><circle cx="12" cy="12" r="8" fill="none" stroke="#e03a2a" stroke-width="2.5" stroke-dasharray="3 1.5"/><circle cx="12" cy="12" r="4" fill="none" stroke="#e03a2a" stroke-width="1.2"/></svg>
<svg style="position:absolute;left:817.0px;top:121.0px;" width="24" height="24" viewBox="0 0 24 24"><path d="M3 4V20M6 2V12M6 15V22M9 4V22M13 2V9M13 13V22M17 4V22M20 2V14M20 17V22" stroke="#d83a2a" stroke-width="1.8"/></svg>
<svg style="position:absolute;left:842.7px;top:121.0px;" width="24" height="24" viewBox="0 0 24 24"><path d="M5 2L8 5L5 8L2 5Z" fill="#e01020"/><path d="M5 9L8 12L5 15L2 12Z" fill="#e01020"/><path d="M5 16L8 19L5 22L2 19Z" fill="#e01020"/><path d="M12 2L15 5L12 8L9 5Z" fill="#e01020"/><path d="M12 9L15 12L12 15L9 12Z" fill="#e01020"/><path d="M12 16L15 19L12 22L9 19Z" fill="#e01020"/><path d="M19 2L22 5L19 8L16 5Z" fill="#e01020"/><path d="M19 9L22 12L19 15L16 12Z" fill="#e01020"/><path d="M19 16L22 19L19 22L16 19Z" fill="#e01020"/></svg>
<svg style="position:absolute;left:869.6px;top:121.0px;" width="24" height="24" viewBox="0 0 24 24"><path d="M2 12L5 8L8 12L5 16Z M9 12L12 7L15 12L12 17Z M16 12L19 8L22 12L19 16Z" fill="#888"/></svg>
<svg style="position:absolute;left:895.0px;top:121.0px;" width="24" height="24" viewBox="0 0 24 24"><path d="M3 3L9 10M9 3L3 10M15 3L21 10M21 3L15 10M3 14L9 21M9 14L3 21M15 14L21 21M21 14L15 21" stroke="#e04030" stroke-width="1.8"/></svg>
<div style="position:absolute;left:922px;top:121px;width:1px;height:25px;background:#999"></div>
<svg style="position:absolute;left:925.0px;top:121.0px;" width="24" height="24" viewBox="0 0 24 24"><path d="M2 10Q12 0 22 10M2 15Q12 5 22 15M2 20Q12 10 22 20" stroke="#999" stroke-width="1.6" fill="none"/></svg>
<svg style="position:absolute;left:950.5px;top:121.0px;" width="24" height="24" viewBox="0 0 24 24"><circle cx="12" cy="12" r="10" fill="none" stroke="#e04a3a" stroke-width="1.8"/><circle cx="12" cy="12" r="6.5" fill="none" stroke="#e04a3a" stroke-width="1.6"/><circle cx="12" cy="12" r="3" fill="none" stroke="#e04a3a" stroke-width="1.5"/></svg>
<svg style="position:absolute;left:976.0px;top:121.0px;" width="24" height="24" viewBox="0 0 24 24"><path d="M12 2Q16 1 17 5Q22 4 22 9Q23 13 20 14Q23 19 18 21Q14 23 12 20Q9 23 6 21Q1 19 4 14Q1 11 3 7Q4 3 8 4Q9 1 12 2Z" fill="none" stroke="#e05a5a" stroke-width="2"/><path d="M12 7Q15 7 16 10Q17 14 12 17Q7 14 8 10Q9 7 12 7Z" fill="none" stroke="#e05a5a" stroke-width="1.6"/></svg>
<svg style="position:absolute;left:1002.8px;top:121.0px;" width="24" height="24" viewBox="0 0 24 24"><path d="M12 2Q16 1 17 5Q22 4 22 9Q23 13 20 14Q23 19 18 21Q14 23 12 20Q9 23 6 21Q1 19 4 14Q1 11 3 7Q4 3 8 4Q9 1 12 2Z" fill="none" stroke="#d86070" stroke-width="1.8"/><path d="M12 7Q15 7 16 10Q17 14 12 17Q7 14 8 10Q9 7 12 7Z" fill="none" stroke="#d86070" stroke-width="1.4400000000000002"/><path d="M6 2V22M18 2V22" stroke="#d86070" stroke-width="1.2"/></svg>
<svg style="position:absolute;left:1028.0px;top:121.0px;" width="24" height="24" viewBox="0 0 24 24"><path d="M12 2Q16 1 17 5Q22 4 22 9Q23 13 20 14Q23 19 18 21Q14 23 12 20Q9 23 6 21Q1 19 4 14Q1 11 3 7Q4 3 8 4Q9 1 12 2Z" fill="none" stroke="#c83a4a" stroke-width="2.4"/><path d="M12 7Q15 7 16 10Q17 14 12 17Q7 14 8 10Q9 7 12 7Z" fill="none" stroke="#c83a4a" stroke-width="1.92"/><path d="M6 2V22M18 2V22" stroke="#c83a4a" stroke-width="1.6"/></svg>
<svg style="position:absolute;left:1053.0px;top:121.0px;" width="24" height="24" viewBox="0 0 24 24"><path d="M12 2Q16 1 17 5Q22 4 22 9Q23 13 20 14Q23 19 18 21Q14 23 12 20Q9 23 6 21Q1 19 4 14Q1 11 3 7Q4 3 8 4Q9 1 12 2Z" fill="none" stroke="#d85a6a" stroke-width="1.6"/><path d="M12 7Q15 7 16 10Q17 14 12 17Q7 14 8 10Q9 7 12 7Z" fill="none" stroke="#d85a6a" stroke-width="1.2800000000000002"/><path d="M2 12H22M12 2V22" stroke="#d85a6a" stroke-width="1.2"/></svg>
<div style="position:absolute;left:1082px;top:121px;width:1px;height:25px;background:#999"></div>
<svg style="position:absolute;left:1083.7px;top:121.0px;" width="24" height="24" viewBox="0 0 24 24"><path d="M19 6Q14 1 8 4Q2 9 4 15Q7 22 14 21Q18 20 20 17L16 14Q12 16 11 12Q10 8 14 8Q16 8 17 9Z" fill="#2a2a8a"/></svg>
<svg style="position:absolute;left:1113px;top:121px;" width="6" height="25" viewBox="0 0 6 25"><rect x="0" y="0" width="6" height="25" fill="url(#grip)"/></svg>
<svg style="position:absolute;left:1120.7px;top:121.0px;" width="24" height="24" viewBox="0 0 24 24"><path d="M2 3V21H22M2 12H22M12 3V21M2 21L22 3" stroke="#888" stroke-width="1.2" fill="none"/></svg>
<svg style="position:absolute;left:1146.0px;top:121.0px;" width="24" height="24" viewBox="0 0 24 24"><path d="M3 3V21M7 5V19M11 5V19M15 5V19M19 3V21M7 19L11 5L15 19L19 5" stroke="#888" stroke-width="1.2" fill="none" stroke-dasharray="2 1"/></svg>
<div style="position:absolute;left:1177px;top:120px;width:21px;height:26px;background:#f8f0c8"></div>
<svg style="position:absolute;left:1176.0px;top:121.0px;" width="24" height="24" viewBox="0 0 24 24"><circle cx="12" cy="12" r="10" fill="#f0f0e0"/><path d="M5 4V20" stroke="#20a0b0" stroke-width="1.6" stroke-dasharray="2.5 1.5"/><path d="M9 4V20" stroke="#20a0b0" stroke-width="1.6" stroke-dasharray="2.5 1.5"/><path d="M13 4V20" stroke="#20a0b0" stroke-width="1.6" stroke-dasharray="2.5 1.5"/><path d="M17 4V20" stroke="#20a0b0" stroke-width="1.6" stroke-dasharray="2.5 1.5"/><path d="M21 4V20" stroke="#20a0b0" stroke-width="1.6" stroke-dasharray="2.5 1.5"/></svg>
<svg style="position:absolute;left:1198.0px;top:121.0px;" width="24" height="24" viewBox="0 0 24 24"><path d="M2 22L8 8L12 16L20 4M2 22L22 14M6 12L14 22" stroke="#999" stroke-width="1.2" fill="none"/></svg>
<svg style="position:absolute;left:1223.6px;top:121.0px;" width="24" height="24" viewBox="0 0 24 24"><path d="M4 22V4M4 22L22 6M4 22L18 2M4 22L22 14M4 22Q10 12 14 22" stroke="#999" stroke-width="1.2" fill="none"/></svg>
<svg style="position:absolute;left:1249.0px;top:121.0px;" width="24" height="24" viewBox="0 0 24 24"><path d="M12 2L4 22M12 2L20 22M12 2V14L6 22M12 14L18 22" stroke="#aaa" stroke-width="1.4" fill="none"/></svg>
<svg style="position:absolute;left:1274.0px;top:121.0px;" width="24" height="24" viewBox="0 0 24 24"><path d="M12 2L4 22M12 2L20 22" stroke="#aaa" stroke-width="1.4" fill="none"/><path d="M12 3L8 12H16Z" fill="#999"/></svg>
<svg style="position:absolute;left:1299.4px;top:121.0px;" width="24" height="24" viewBox="0 0 24 24"><path d="M12 2L3 22H8L12 12L16 22H21Z" fill="#aaa"/></svg>
<svg style="position:absolute;left:1324.7px;top:121.0px;" width="24" height="24" viewBox="0 0 24 24"><path d="M2 20L5 6L8 20L11 4L14 20L17 6L20 20L22 8" stroke="#aaa" stroke-width="1.3" fill="none"/></svg>
<svg style="position:absolute;left:1351.7px;top:121.0px;" width="24" height="24" viewBox="0 0 24 24"><path d="M2 22V6H8V20H14V4H22V12" stroke="#aaa" stroke-width="1.3" fill="none"/></svg>
<svg style="position:absolute;left:1377.0px;top:121.0px;" width="24" height="24" viewBox="0 0 24 24"><path d="M3 2V22M21 2V22" stroke="#888" stroke-width="1.4"/><path d="M7 3V21" stroke="#999" stroke-width="1.2" stroke-dasharray="2 2"/><path d="M11 3V21" stroke="#999" stroke-width="1.2" stroke-dasharray="2 2"/><path d="M15 3V21" stroke="#999" stroke-width="1.2" stroke-dasharray="2 2"/><path d="M18 3V21" stroke="#999" stroke-width="1.2" stroke-dasharray="2 2"/></svg>
<svg style="position:absolute;left:1402.0px;top:121.0px;" width="24" height="24" viewBox="0 0 24 24"><path d="M2 4H22M2 8H22M2 12H22M2 16H22M2 20H22" stroke="#999" stroke-width="1.2"/></svg>
<svg style="position:absolute;left:1427.5px;top:121.0px;" width="24" height="24" viewBox="0 0 24 24"><path d="M3 3L6 20M7 3L10 20M11 6L21 10L13 13L21 16" stroke="#999" stroke-width="1.4" fill="none"/></svg>
<svg style="position:absolute;left:1452.8px;top:121.0px;" width="24" height="24" viewBox="0 0 24 24"><circle cx="12" cy="12" r="10" fill="none" stroke="#999" stroke-width="1.3"/><circle cx="12" cy="12" r="3" fill="none" stroke="#999"/><path d="M15.0 12.0L22.0 12.0" stroke="#999"/><path d="M14.6 13.5L20.7 17.0" stroke="#999"/><path d="M13.5 14.6L17.0 20.7" stroke="#999"/><path d="M12.0 15.0L12.0 22.0" stroke="#999"/><path d="M10.5 14.6L7.0 20.7" stroke="#999"/><path d="M9.4 13.5L3.3 17.0" stroke="#999"/><path d="M9.0 12.0L2.0 12.0" stroke="#999"/><path d="M9.4 10.5L3.3 7.0" stroke="#999"/><path d="M10.5 9.4L7.0 3.3" stroke="#999"/><path d="M12.0 9.0L12.0 2.0" stroke="#999"/><path d="M13.5 9.4L17.0 3.3" stroke="#999"/><path d="M14.6 10.5L20.7 7.0" stroke="#999"/></svg>
<svg style="position:absolute;left:1478.0px;top:121.0px;" width="24" height="24" viewBox="0 0 24 24"><path d="M4 4Q10 10 4 20M10 2Q16 12 10 22M2 12Q12 6 22 14Q16 20 22 22" stroke="#666" stroke-width="1.8" fill="none"/></svg>
<svg style="position:absolute;left:1503.0px;top:121.0px;" width="24" height="24" viewBox="0 0 24 24"><path d="M2 3Q12 7 22 3M5 6V18M12 7V17M19 6V18M2 21Q12 15 22 21" stroke="#777" stroke-width="1.6" fill="none"/></svg>
<div class="t" style="left:1530.0px;top:126.3px;font-size:14px;color:#999;font-weight:bold;transform:scaleX(1.229);transform-origin:0 0;">3D</div>
<div style="position:absolute;left:1557.5px;top:121px;width:1px;height:25px;background:#999"></div>
<svg style="position:absolute;left:1560.6px;top:121.0px;" width="24" height="24" viewBox="0 0 24 24"><rect x="1" y="8" width="22" height="3" fill="#c03038"/><rect x="1" y="13" width="22" height="3" fill="#c03038"/><path d="M1 12H23" stroke="#fff" stroke-dasharray="2 1"/></svg>
<div style="position:absolute;left:2px;top:148px;width:88px;height:813px;background:#ececec"></div>
<div style="position:absolute;left:2px;top:148px;width:28px;height:406px;background:#f0f0f0;border:1px solid #dedede;box-sizing:border-box"></div>
<svg style="position:absolute;left:4px;top:149px;" width="24" height="7" viewBox="0 0 24 7"><rect width="24" height="7" fill="url(#grip)"/></svg>
<div style="position:absolute;left:30px;top:148px;width:29px;height:316px;background:#f0f0f0;border:1px solid #dedede;box-sizing:border-box"></div>
<svg style="position:absolute;left:32px;top:149px;" width="25" height="7" viewBox="0 0 25 7"><rect width="25" height="7" fill="url(#grip)"/></svg>
<div style="position:absolute;left:59px;top:148px;width:29px;height:369px;background:#f0f0f0;border:1px solid #dedede;box-sizing:border-box"></div>
<svg style="position:absolute;left:61px;top:149px;" width="25" height="7" viewBox="0 0 25 7"><rect width="25" height="7" fill="url(#grip)"/></svg>
<div style="position:absolute;left:3px;top:235px;width:85px;height:1px;background:#d4d4d4"></div>
<div style="position:absolute;left:3px;top:318px;width:85px;height:1px;background:#d4d4d4"></div>
<div style="position:absolute;left:3px;top:425px;width:27px;height:1px;background:#d8d8d8"></div>
<div style="position:absolute;left:5px;top:157px;width:23px;height:29px;background:#fbe8b0"></div>
<svg style="position:absolute;left:3.5px;top:158.4px;" width="24" height="24" viewBox="0 0 24 24"><path d="M4 4L16 9L11 11L19 19L17 21L9 13L7 18Z" fill="#2a2a58"/></svg>
<svg style="position:absolute;left:22.5px;top:176.4px;" width="6" height="6" viewBox="0 0 6 6"><path d="M6 0V6H0Z" fill="#111"/></svg>
<svg style="position:absolute;left:3.5px;top:182.4px;" width="24" height="24" viewBox="0 0 24 24"><path d="M2 20Q6 8 20 5" stroke="#222" stroke-width="1.6" fill="none"/><path d="M9 6L18 12L13 13L18 19L16 20L12 15L9 18Z" fill="#2a2a58"/></svg>
<svg style="position:absolute;left:22.5px;top:200.4px;" width="6" height="6" viewBox="0 0 6 6"><path d="M6 0V6H0Z" fill="#111"/></svg>
<svg style="position:absolute;left:3.5px;top:208.2px;" width="24" height="24" viewBox="0 0 24 24"><circle cx="9" cy="8" r="5.5" fill="#fff" stroke="#333" stroke-width="1.3"/><circle cx="14" cy="15" r="5.5" fill="#fff" stroke="#333" stroke-width="1.3"/><path d="M6 8H12M11 15H17" stroke="#555" stroke-width="1.4"/></svg>
<svg style="position:absolute;left:22.5px;top:226.2px;" width="6" height="6" viewBox="0 0 6 6"><path d="M6 0V6H0Z" fill="#111"/></svg>
<svg style="position:absolute;left:3.5px;top:239.2px;" width="24" height="24" viewBox="0 0 24 24"><path d="M2 22L11 2H13L22 22H17L15 16H9L7 22Z M10 13H14L12 7Z" fill="#1f2a5a" fill-rule="evenodd"/></svg>
<svg style="position:absolute;left:3.5px;top:265.0px;" width="24" height="24" viewBox="0 0 24 24"><circle cx="5" cy="4" r="2.2" fill="#e03040"/><path d="M5 7V12M2 9H8M3 15L5 12L7 15" stroke="#e03040" stroke-width="1.8" fill="none"/><circle cx="12" cy="4" r="2.2" fill="#20a060"/><path d="M12 7V12M9 9H15M10 15L12 12L14 15" stroke="#20a060" stroke-width="1.8" fill="none"/><circle cx="19" cy="4" r="2.2" fill="#30a0d0"/><path d="M19 7V12M16 9H22M17 15L19 12L21 15" stroke="#30a0d0" stroke-width="1.8" fill="none"/><path d="M1 18H23M1 21.5H23" stroke="#3a3a90" stroke-width="1.8"/></svg>
<svg style="position:absolute;left:3.5px;top:290.8px;" width="24" height="24" viewBox="0 0 24 24"><path d="M12 1L23 12L12 23L1 12Z" fill="#8a8ac8" stroke="#6a6aa8" stroke-width="1"/><text x="12" y="15" font-size="7" fill="#eee" text-anchor="middle" font-family="Liberation Sans">ABC</text></svg>
<svg style="position:absolute;left:3.0px;top:321.4px;" width="24" height="24" viewBox="0 0 24 24"><circle cx="12" cy="12" r="10" fill="none" stroke="#222" stroke-width="1.5"/><circle cx="12" cy="12" r="7" fill="none" stroke="#222" stroke-width="1.2"/><circle cx="12" cy="12" r="4.5" fill="#111"/></svg>
<svg style="position:absolute;left:3.0px;top:347.0px;" width="24" height="24" viewBox="0 0 24 24"><path d="M6 2H18L23 12L18 22H6L1 12Z" fill="none" stroke="#2a3a7a" stroke-width="1.6"/><path d="M8 6H16L19 12L16 18H8L5 12Z" fill="#111"/><circle cx="12" cy="12" r="3" fill="#c02020"/></svg>
<svg style="position:absolute;left:3.0px;top:372.7px;" width="24" height="24" viewBox="0 0 24 24"><path d="M6 2H18L23 12L18 22H6L1 12Z" fill="none" stroke="#999" stroke-width="1.4"/><path d="M8 6H16L19 12L16 18H8L5 12Z" fill="none" stroke="#999" stroke-width="1.2"/></svg>
<svg style="position:absolute;left:3.0px;top:398.4px;" width="24" height="24" viewBox="0 0 24 24"><path d="M6 2H18L23 12L18 22H6L1 12Z" fill="#111" stroke="#e03040" stroke-width="1.8"/></svg>
<svg style="position:absolute;left:3.0px;top:424.0px;" width="24" height="24" viewBox="0 0 24 24"><path d="M6 4H18L22 12L18 20H6L2 12Z" fill="#e0e0e0"/><circle cx="12" cy="12" r="6" fill="#f4f4f4"/></svg>
<svg style="position:absolute;left:3.0px;top:449.8px;" width="24" height="24" viewBox="0 0 24 24"><path d="M3 6L8 2L19 15L15 19Z" fill="#fff" stroke="#444" stroke-width="1.3"/><path d="M5 9L9 5" stroke="#555"/><path d="M15 19L22 20M19 15L22 20" stroke="#444" stroke-width="1.2"/></svg>
<svg style="position:absolute;left:22px;top:467.8px;" width="6" height="6" viewBox="0 0 6 6"><path d="M6 0V6H0Z" fill="#111"/></svg>
<svg style="position:absolute;left:3.0px;top:474.3px;" width="24" height="24" viewBox="0 0 24 24"><circle cx="12" cy="6" r="2.5" fill="#111"/><circle cx="12" cy="16" r="2.5" fill="#111"/><path d="M2 14H22" stroke="#ddd"/></svg>
<svg style="position:absolute;left:22px;top:492.3px;" width="6" height="6" viewBox="0 0 6 6"><path d="M6 0V6H0Z" fill="#111"/></svg>
<svg style="position:absolute;left:3.0px;top:498.7px;" width="24" height="24" viewBox="0 0 24 24"><rect x="1" y="2" width="12" height="11" fill="#fff" stroke="#ddd"/><rect x="11" y="11" width="11" height="11" fill="#fff" stroke="#ddd"/><rect x="2" y="2" width="3" height="3" fill="#555"/><rect x="19" y="11" width="3" height="3" fill="#555"/></svg>
<svg style="position:absolute;left:22px;top:516.7px;" width="6" height="6" viewBox="0 0 6 6"><path d="M6 0V6H0Z" fill="#111"/></svg>
<svg style="position:absolute;left:3.0px;top:525.7px;" width="24" height="24" viewBox="0 0 24 24"><rect x="2" y="2" width="13" height="13" fill="none" stroke="#333" stroke-width="1.3"/><circle cx="14" cy="14" r="8" fill="none" stroke="#333" stroke-width="1.3"/><path d="M8 15H15V8A7 7 0 0 1 15 15Z" fill="#888"/></svg>
<svg style="position:absolute;left:22px;top:543.7px;" width="6" height="6" viewBox="0 0 6 6"><path d="M6 0V6H0Z" fill="#111"/></svg>
<svg style="position:absolute;left:32.0px;top:158.4px;" width="24" height="24" viewBox="0 0 24 24"><path d="M4 6Q12 -2 19 6M4 6Q2 16 7 20M10 12Q13 16 19 16" fill="none" stroke="#222" stroke-width="1.4"/><rect x="2" y="4" width="4" height="4" fill="#111"/><rect x="17" y="4" width="4" height="4" fill="#111"/><rect x="5" y="18" width="4" height="4" fill="#111"/><rect x="8" y="10" width="4" height="4" fill="#111"/><rect x="17" y="14" width="4" height="4" fill="#111"/></svg>
<svg style="position:absolute;left:32.0px;top:182.4px;" width="24" height="24" viewBox="0 0 24 24"><path d="M4 6Q12 -2 19 6M4 6Q2 16 7 20M10 12Q13 16 19 16" fill="none" stroke="#222" stroke-width="1.4"/><rect x="2" y="4" width="4" height="4" fill="#111"/><rect x="17" y="4" width="4" height="4" fill="#111"/><rect x="5" y="18" width="4" height="4" fill="#111"/><rect x="8" y="10" width="4" height="4" fill="#111"/><rect x="17" y="14" width="4" height="4" fill="#111"/></svg>
<svg style="position:absolute;left:32.0px;top:208.0px;" width="24" height="24" viewBox="0 0 24 24"><path d="M3 12L12 3L21 12V21M12 3V14L7 19L3 12M12 14L21 21" fill="none" stroke="#222" stroke-width="1.4"/><rect x="1" y="10" width="4" height="4" fill="#111"/><rect x="10" y="1" width="4" height="4" fill="#111"/><rect x="19" y="10" width="4" height="4" fill="#111"/><rect x="19" y="19" width="4" height="4" fill="#111"/><rect x="10" y="12" width="4" height="4" fill="#111"/><rect x="5" y="17" width="4" height="4" fill="#111"/></svg>
<svg style="position:absolute;left:32.0px;top:239.0px;" width="24" height="24" viewBox="0 0 24 24"><rect x="3" y="6" width="18" height="12" fill="none" stroke="#222" stroke-width="1.5"/><circle cx="3" cy="6" r="1.8" fill="#111"/><circle cx="21" cy="18" r="1.8" fill="#111"/></svg>
<svg style="position:absolute;left:32.0px;top:265.0px;" width="24" height="24" viewBox="0 0 24 24"><ellipse cx="12" cy="12" rx="10" ry="6.5" fill="none" stroke="#222" stroke-width="1.5"/><circle cx="12" cy="12" r="2.2" fill="#111"/><circle cx="12" cy="5.5" r="1.8" fill="#111"/><circle cx="22" cy="12" r="1.8" fill="#111"/></svg>
<svg style="position:absolute;left:32.0px;top:290.8px;" width="24" height="24" viewBox="0 0 24 24"><path d="M12 10Q4 4 8 2Q11 1 12 4Q13 1 16 2Q20 4 12 10Z" fill="none" stroke="#222" stroke-width="1.2"/><path d="M2 22L7 13L12 22Z" fill="none" stroke="#222" stroke-width="1.2"/><path d="M14 14H22V22H14Z" fill="none" stroke="#4a6ab8" stroke-width="1.4" stroke-dasharray="3 1"/></svg>
<svg style="position:absolute;left:32.0px;top:322.6px;" width="24" height="24" viewBox="0 0 24 24"><circle cx="4" cy="4" r="2.5" fill="#111"/><path d="M4 4Q10 6 8 11Q6 16 12 15Q18 13 16 19Q16 22 22 21" fill="none" stroke="#2a2a7a" stroke-width="1.6"/></svg>
<svg style="position:absolute;left:32.0px;top:347.0px;" width="24" height="24" viewBox="0 0 24 24"><circle cx="4" cy="4" r="2.5" fill="#111"/><path d="M4 4Q12 6 8 12Q4 17 10 20Q16 22 20 16Q22 10 16 8" fill="none" stroke="#2a2a7a" stroke-width="1.6"/></svg>
<svg style="position:absolute;left:32.0px;top:380.0px;" width="24" height="24" viewBox="0 0 24 24"><path d="M12 2V8M9 5H15" stroke="#999" stroke-width="1.8"/><path d="M2 20Q2 10 12 10Q22 10 22 20" fill="none" stroke="#222" stroke-width="1.8"/><path d="M5 20Q6 14 12 14Q18 14 19 20" fill="none" stroke="#222" stroke-width="1.2"/><path d="M7 12V20M12 10V20M17 12V20" stroke="#444"/></svg>
<svg style="position:absolute;left:51px;top:398px;" width="6" height="6" viewBox="0 0 6 6"><path d="M6 0V6H0Z" fill="#111"/></svg>
<svg style="position:absolute;left:32.0px;top:405.8px;" width="24" height="24" viewBox="0 0 24 24"><circle cx="12" cy="12" r="10" fill="#bbb" stroke="#222" stroke-width="1.5"/><path d="M11 6A6 6 0 1 0 11 18" fill="#f4f4f4" stroke="#222"/><path d="M20 6A6 6 0 1 0 20 18" fill="#f4f4f4" stroke="#222"/></svg>
<svg style="position:absolute;left:51px;top:423.8px;" width="6" height="6" viewBox="0 0 6 6"><path d="M6 0V6H0Z" fill="#111"/></svg>
<svg style="position:absolute;left:32.0px;top:438.8px;" width="24" height="24" viewBox="0 0 24 24"><rect x="1" y="1" width="13" height="13" fill="none" stroke="#444" stroke-width="1.3"/><circle cx="14" cy="14" r="8" fill="none" stroke="#888" stroke-width="1.3"/></svg>
<svg style="position:absolute;left:51px;top:456.8px;" width="6" height="6" viewBox="0 0 6 6"><path d="M6 0V6H0Z" fill="#111"/></svg>
<svg style="position:absolute;left:61.400000000000006px;top:158.4px;" width="24" height="24" viewBox="0 0 24 24"><path d="M3 20L20 4" stroke="#d04050" stroke-width="1.2" stroke-dasharray="3 2"/><circle cx="3" cy="20" r="1.8" fill="#111"/><circle cx="20" cy="4" r="1.8" fill="#111"/><text x="15" y="18" font-size="11" font-weight="bold" font-family="Liberation Sans" fill="#111">1</text></svg>
<svg style="position:absolute;left:80.4px;top:176.4px;" width="6" height="6" viewBox="0 0 6 6"><path d="M6 0V6H0Z" fill="#111"/></svg>
<svg style="position:absolute;left:61.0px;top:182.4px;" width="24" height="24" viewBox="0 0 24 24"><path d="M2 4Q12 16 22 4" fill="none" stroke="#d83030" stroke-width="1.5"/><path d="M2 12Q12 24 22 12" fill="none" stroke="#222" stroke-width="1.5"/><circle cx="12" cy="10" r="1.5" fill="#c02020"/></svg>
<svg style="position:absolute;left:61.0px;top:208.0px;" width="24" height="24" viewBox="0 0 24 24"><ellipse cx="12" cy="9" rx="10" ry="5" fill="none" stroke="#d83030" stroke-width="1.5"/><ellipse cx="12" cy="15" rx="10" ry="5" fill="none" stroke="#222" stroke-width="1.5"/><path d="M2 9V15M22 9V15" stroke="#333"/></svg>
<svg style="position:absolute;left:61.0px;top:239.0px;" width="24" height="24" viewBox="0 0 24 24"><path d="M12 3L21 10V21L12 14L7 19L3 12Z" fill="none" stroke="#222" stroke-width="1.4"/><rect x="10" y="1" width="4" height="4" fill="#111"/><rect x="19" y="8" width="4" height="4" fill="#111"/><rect x="19" y="19" width="4" height="4" fill="#111"/><rect x="10" y="12" width="4" height="4" fill="#111"/><rect x="5" y="17" width="4" height="4" fill="#111"/><rect x="1" y="10" width="4" height="4" fill="#111"/><path d="M12 3V14" stroke="#d03030"/></svg>
<svg style="position:absolute;left:61.0px;top:265.0px;" width="24" height="24" viewBox="0 0 24 24"><path d="M3 12L12 3L21 12V21H3Z" fill="none" stroke="#222" stroke-width="1.4"/><rect x="1" y="10" width="4" height="4" fill="#111"/><rect x="10" y="1" width="4" height="4" fill="#111"/><rect x="19" y="10" width="4" height="4" fill="#111"/><rect x="19" y="19" width="4" height="4" fill="#111"/><rect x="1" y="19" width="4" height="4" fill="#111"/><path d="M3 21V12" stroke="#d03030"/></svg>
<svg style="position:absolute;left:61.0px;top:290.8px;" width="24" height="24" viewBox="0 0 24 24"><path d="M3 4Q20 4 21 22" fill="none" stroke="#222" stroke-width="1.6"/><path d="M3 9Q16 9 16 22" fill="none" stroke="#d03030" stroke-width="1.6"/><path d="M3 14Q11 14 11 22" fill="none" stroke="#222" stroke-width="1.6"/><circle cx="12" cy="10" r="1.6" fill="#111"/></svg>
<svg style="position:absolute;left:61.0px;top:321.4px;" width="24" height="24" viewBox="0 0 24 24"><path d="M12 2A10 10 0 1 0 12 22" fill="none" stroke="#222" stroke-width="1.5"/><path d="M12 2Q22 4 20 12Q18 16 13 15" fill="none" stroke="#222" stroke-width="1.4"/><path d="M12 2V22" stroke="#d03030" stroke-width="1.5"/><circle cx="4" cy="8" r="1.8" fill="#111"/><path d="M18 18H23M20.5 15.5V20.5" stroke="#111" stroke-width="1.5"/></svg>
<svg style="position:absolute;left:61.0px;top:347.0px;" width="24" height="24" viewBox="0 0 24 24"><path d="M2 12Q4 2 14 3Q22 6 20 14" fill="none" stroke="#222" stroke-width="1.4"/><path d="M4 8L12 14L10 21M12 14L21 12" stroke="#d03030" stroke-width="1.3" fill="none"/><circle cx="4" cy="8" r="1.8" fill="#111"/><path d="M18 18H23M20.5 15.5V20.5" stroke="#111" stroke-width="1.5"/></svg>
<svg style="position:absolute;left:61.0px;top:378.9px;" width="24" height="24" viewBox="0 0 24 24"><circle cx="12" cy="12" r="10" fill="none" stroke="#d83050" stroke-width="1.3"/><ellipse cx="12" cy="7" rx="2.5" ry="5" fill="none" stroke="#d83050" stroke-width="1" transform="rotate(0 12 12)"/><ellipse cx="12" cy="7" rx="2.5" ry="5" fill="none" stroke="#d83050" stroke-width="1" transform="rotate(60 12 12)"/><ellipse cx="12" cy="7" rx="2.5" ry="5" fill="none" stroke="#d83050" stroke-width="1" transform="rotate(120 12 12)"/><ellipse cx="12" cy="7" rx="2.5" ry="5" fill="none" stroke="#d83050" stroke-width="1" transform="rotate(180 12 12)"/><ellipse cx="12" cy="7" rx="2.5" ry="5" fill="none" stroke="#d83050" stroke-width="1" transform="rotate(240 12 12)"/><ellipse cx="12" cy="7" rx="2.5" ry="5" fill="none" stroke="#d83050" stroke-width="1" transform="rotate(300 12 12)"/><circle cx="12" cy="12" r="2" fill="#111"/><rect x="19" y="7" width="3" height="3" fill="#111"/></svg>
<svg style="position:absolute;left:80px;top:396.9px;" width="6" height="6" viewBox="0 0 6 6"><path d="M6 0V6H0Z" fill="#111"/></svg>
<svg style="position:absolute;left:61.0px;top:403.3px;" width="24" height="24" viewBox="0 0 24 24"><circle cx="12" cy="12" r="10" fill="none" stroke="#d83050" stroke-width="1.3"/><path d="M12 12L22.0 12.0" stroke="#d83050" stroke-width="1"/><path d="M12 12L19.1 19.1" stroke="#d83050" stroke-width="1"/><path d="M12 12L12.0 22.0" stroke="#d83050" stroke-width="1"/><path d="M12 12L4.9 19.1" stroke="#d83050" stroke-width="1"/><path d="M12 12L2.0 12.0" stroke="#d83050" stroke-width="1"/><path d="M12 12L4.9 4.9" stroke="#d83050" stroke-width="1"/><path d="M12 12L12.0 2.0" stroke="#d83050" stroke-width="1"/><path d="M12 12L19.1 4.9" stroke="#d83050" stroke-width="1"/><circle cx="12" cy="12" r="4" fill="none" stroke="#d83050"/><circle cx="12" cy="12" r="1.8" fill="#111"/><rect x="20" y="10" width="3" height="3" fill="#111"/></svg>
<svg style="position:absolute;left:61.0px;top:436.3px;" width="24" height="24" viewBox="0 0 24 24"><path d="M3 20V7L12 12L21 3" fill="none" stroke="#222" stroke-width="1.3"/><path d="M3 20V7" stroke="#d03030" stroke-width="1.4"/><circle cx="3" cy="20" r="1.8" fill="#111"/><circle cx="3" cy="7" r="1.8" fill="#111"/><circle cx="12" cy="12" r="1.8" fill="#111"/><circle cx="21" cy="3" r="1.8" fill="#111"/><text x="14" y="22" font-size="11" font-weight="bold" font-family="Liberation Sans" fill="#111">1</text></svg>
<svg style="position:absolute;left:80px;top:454.3px;" width="6" height="6" viewBox="0 0 6 6"><path d="M6 0V6H0Z" fill="#111"/></svg>
<svg style="position:absolute;left:61.0px;top:464.5px;" width="24" height="24" viewBox="0 0 24 24"><path d="M4 2V22L22 12Z" fill="none" stroke="#d03050" stroke-width="1.5"/><path d="M8 6V18M12 8V16M16 10V14" stroke="#d03050" stroke-width="1.3"/><path d="M0 12H24" stroke="#555" stroke-dasharray="2 2"/></svg>
<svg style="position:absolute;left:61.0px;top:491.4px;" width="24" height="24" viewBox="0 0 24 24"><rect x="2" y="2" width="5" height="7" fill="#fff" stroke="#d03050"/><path d="M7 6H16" stroke="#333" stroke-dasharray="2 1.5"/><path d="M19 2L23 6L19 10L15 6Z" fill="#d02020"/><path d="M3 12L6 22L8 17L11 20M17 12L14 22L17 19L20 21" fill="none" stroke="#444" stroke-width="1.1"/></svg>
<div style="position:absolute;left:60px;top:653px;width:28px;height:267px;background:#f0f0f0;border:1px solid #dcdcdc;box-sizing:border-box"></div>
<svg style="position:absolute;left:62px;top:654px;" width="24" height="7" viewBox="0 0 24 7"><rect width="24" height="7" fill="url(#grip)"/></svg>
<svg style="position:absolute;left:61.5px;top:660.7px;" width="24" height="16" viewBox="0 0 24 16"><path d="M3 4L8 1L12 5L16 1L21 4L18 9H6Z" fill="#60b0c0"/><circle cx="8" cy="5" r="2" fill="#e07050"/><rect x="8" y="9" width="8" height="6" fill="#e08020"/></svg>
<svg style="position:absolute;left:62px;top:677.3px;" width="24" height="8" viewBox="0 0 24 8"><path d="M1 4L5 1V7Z M23 4L19 1V7Z" fill="#111"/><path d="M5 4H19" stroke="#111" stroke-width="1" stroke-dasharray="2 2"/></svg>
<svg style="position:absolute;left:61.5px;top:687.3px;" width="24" height="16" viewBox="0 0 24 16"><path d="M3 4L8 1L12 5L16 1L21 4L18 9H6Z" fill="none" stroke="#bbb"/><rect x="9" y="9" width="6" height="6" fill="none" stroke="#bbb"/></svg>
<svg style="position:absolute;left:62px;top:701px;" width="24" height="8" viewBox="0 0 24 8"><path d="M1 4L5 1V7Z M23 4L19 1V7Z" fill="#111"/><path d="M5 4H19" stroke="#111" stroke-width="1" stroke-dasharray="2 2"/></svg>
<svg style="position:absolute;left:61.5px;top:711.0px;" width="24" height="16" viewBox="0 0 24 16"><path d="M2 14L6 3L9 14L13 3L16 14L20 3L21 14" fill="none" stroke="#d83a2a" stroke-width="1.8"/></svg>
<svg style="position:absolute;left:62px;top:727.6px;" width="24" height="8" viewBox="0 0 24 8"><path d="M1 4L5 1V7Z M23 4L19 1V7Z" fill="#111"/><path d="M5 4H19" stroke="#111" stroke-width="1" stroke-dasharray="2 2"/></svg>
<svg style="position:absolute;left:61.5px;top:739.0px;" width="24" height="16" viewBox="0 0 24 16"><ellipse cx="10" cy="8" rx="7" ry="7.5" fill="#3a78c8" stroke="#224" stroke-width="1"/><path d="M6 6H14M6 9H14M6 12H14" stroke="#9ac" stroke-width="0.8"/><path d="M15 2Q22 2 20 9" stroke="#224" stroke-width="1.3" fill="none"/></svg>
<svg style="position:absolute;left:62px;top:754px;" width="24" height="8" viewBox="0 0 24 8"><path d="M1 4L5 1V7Z M23 4L19 1V7Z" fill="#111"/><path d="M5 4H19" stroke="#111" stroke-width="1" stroke-dasharray="2 2"/></svg>
<svg style="position:absolute;left:61.5px;top:764.0px;" width="24" height="16" viewBox="0 0 24 16"><path d="M12 1V15M8 4V11M16 4V11M6 11H18" stroke="#222" stroke-width="1.3"/><path d="M6 11V15M18 11V15" stroke="#c03030" stroke-width="1.3"/></svg>
<svg style="position:absolute;left:62px;top:779.3px;" width="24" height="8" viewBox="0 0 24 8"><path d="M1 4L5 1V7Z M23 4L19 1V7Z" fill="#111"/><path d="M5 4H19" stroke="#111" stroke-width="1" stroke-dasharray="2 2"/></svg>
<svg style="position:absolute;left:61.5px;top:789.2px;" width="24" height="16" viewBox="0 0 24 16"><circle cx="7" cy="4" r="3" fill="none" stroke="#222" stroke-width="1.3"/><circle cx="7" cy="11" r="3" fill="none" stroke="#222" stroke-width="1.3"/><path d="M9 5L21 11M9 10L21 4" stroke="#222" stroke-width="1.3"/><path d="M2 13L22 9" stroke="#d02020" stroke-width="1.6" stroke-dasharray="3 2"/></svg>
<svg style="position:absolute;left:62px;top:803px;" width="24" height="8" viewBox="0 0 24 8"><path d="M1 4L5 1V7Z M23 4L19 1V7Z" fill="#111"/><path d="M5 4H19" stroke="#111" stroke-width="1" stroke-dasharray="2 2"/></svg>
<div class="t" style="left:62.0px;top:813.4px;font-size:12px;color:#2a2a5a;font-weight:bold;transform:scaleX(0.862);transform-origin:0 0;">1000</div>
<svg style="position:absolute;left:62px;top:831px;" width="24" height="8" viewBox="0 0 24 8"><path d="M1 4L5 1V7Z M23 4L19 1V7Z" fill="#111"/><path d="M5 4H19" stroke="#111" stroke-width="1" stroke-dasharray="2 2"/></svg>
<div class="t" style="left:66.0px;top:838.4px;font-size:12px;color:#2a2a5a;font-weight:bold;transform:scaleX(0.774);transform-origin:0 0;">100</div>
<svg style="position:absolute;left:62px;top:856px;" width="24" height="8" viewBox="0 0 24 8"><path d="M1 4L5 1V7Z M23 4L19 1V7Z" fill="#111"/><path d="M5 4H19" stroke="#111" stroke-width="1" stroke-dasharray="2 2"/></svg>
<div class="t" style="left:68.5px;top:863.4px;font-size:12px;color:#2a2a5a;font-weight:bold;transform:scaleX(0.787);transform-origin:0 0;">10</div>
<svg style="position:absolute;left:62px;top:881.2px;" width="24" height="8" viewBox="0 0 24 8"><path d="M1 4L5 1V7Z M23 4L19 1V7Z" fill="#111"/><path d="M5 4H19" stroke="#111" stroke-width="1" stroke-dasharray="2 2"/></svg>
<div class="t" style="left:71.5px;top:888.9px;font-size:12px;color:#2a2a5a;font-weight:bold;transform:scaleX(0.749);transform-origin:0 0;">1</div>
<svg style="position:absolute;left:62px;top:905px;" width="24" height="8" viewBox="0 0 24 8"><path d="M1 4L5 1V7Z M23 4L19 1V7Z" fill="#111"/><path d="M5 4H19" stroke="#111" stroke-width="1" stroke-dasharray="2 2"/></svg>
<div style="position:absolute;left:2px;top:928px;width:1308px;height:34px;background:#efefef"></div>
<div style="position:absolute;left:1310px;top:962px;width:0px;height:0px;"></div>
<svg style="position:absolute;left:3px;top:933px;" width="6" height="27" viewBox="0 0 6 27"><rect x="0" y="0" width="6" height="27" fill="url(#grip)"/></svg>
<div style="position:absolute;left:10.6px;top:935.6px;width:108.6px;height:21.3px;background:#fff;border:1px solid #d8d8d8;box-sizing:border-box"></div>
<div class="t" style="left:11.8px;top:940.5px;font-size:12.5px;color:#111;font-weight:normal;transform:scaleX(0.867);transform-origin:0 0;">Colorway 1</div>
<svg style="position:absolute;left:107.5px;top:944.0px;" width="9" height="6" viewBox="0 0 9 6"><path d="M1 1H8L4.5 5Z" fill="#444"/></svg>
<svg style="position:absolute;left:121.7px;top:935.0px;" width="10" height="22" viewBox="0 0 10 22"><rect x="0" y="0" width="10" height="22" fill="#1a1a3a"/><rect x="0" y="3" width="10" height="2.5" fill="#7a8ad0"/><rect x="0" y="7" width="10" height="2.5" fill="#e06060"/><rect x="0" y="11" width="10" height="2.5" fill="#60b060"/><rect x="0" y="15" width="10" height="2.5" fill="#e0a040"/></svg>
<svg style="position:absolute;left:136.5px;top:935.0px;" width="8" height="22" viewBox="0 0 8 22"><path d="M0 2H8M0 5H8M0 8H8M0 11H8M0 14H8M0 17H8M0 20H8" stroke="#999" stroke-width="1"/></svg>
<div style="position:absolute;left:147.5px;top:932px;width:1px;height:29px;background:#c8c8c8"></div>
<svg style="position:absolute;left:154.5px;top:935.0px;" width="21" height="22" viewBox="0 0 21 22"><rect x="0" y="0" width="7" height="7" fill="#60c060"/><rect x="7" y="0" width="7" height="7" fill="#e8f0e0"/><rect x="14" y="0" width="7" height="7" fill="#7080d0"/><rect x="0" y="7" width="7" height="7" fill="#9a90d0"/><rect x="7" y="7" width="7" height="7" fill="#fff"/><rect x="14" y="7" width="7" height="7" fill="#6a80d8"/><rect x="0" y="14" width="7" height="8" fill="#111"/><rect x="7" y="14" width="7" height="8" fill="#f0a040"/><rect x="14" y="14" width="7" height="8" fill="#e05060"/><rect x="0" y="0" width="21" height="22" fill="none" stroke="#333" stroke-width="0.8"/></svg>
<svg style="position:absolute;left:182.0px;top:942.5px;" width="6" height="5" viewBox="0 0 6 5"><path d="M0 4L3 0L6 4Z" fill="#666"/></svg>
<svg style="position:absolute;left:193.0px;top:935.0px;" width="22" height="22" viewBox="0 0 22 22"><path d="M2 4Q10 -1 19 4L17 8H5Z" fill="#3a9ad8"/><path d="M4 6L8 4H14L18 6L20 10L17 11V22H5V11L2 10Z" fill="#20a060" stroke="#14603a" stroke-width="0.8"/></svg>
<svg style="position:absolute;left:221.0px;top:942.5px;" width="6" height="5" viewBox="0 0 6 5"><path d="M0 4L3 0L6 4Z" fill="#666"/></svg>
<div style="position:absolute;left:230px;top:932px;width:1px;height:29px;background:#c8c8c8"></div>
<div style="position:absolute;left:233.6px;top:933.3px;width:27.8px;height:27.1px;background:#0a3a0c;border:1px solid #222;box-sizing:border-box"></div>
<div class="t" style="left:243.5px;top:940.1px;font-size:12.5px;color:#cfe8c8;font-weight:normal;transform:scaleX(1.151);transform-origin:0 0;">2</div>
<div style="position:absolute;left:263.8px;top:932px;width:1px;height:29px;background:#c8c8c8"></div>
<svg style="position:absolute;left:268.5px;top:935.0px;" width="22" height="22" viewBox="0 0 22 22"><path d="M3 20L14 9" stroke="#2a8aa0" stroke-width="3"/><path d="M13 6L17 10L20 7Q22 3 19 2Q16 1 13 4Z" fill="#f0c070" stroke="#555" stroke-width="0.8"/><path d="M2 21L4 19" stroke="#111" stroke-width="1.4"/></svg>
<svg style="position:absolute;left:294.5px;top:935.0px;" width="22" height="22" viewBox="0 0 22 22"><path d="M4 12L11 5L19 13L12 20Z" fill="#f0c070" stroke="#333" stroke-width="1.3"/><circle cx="12" cy="11" r="2" fill="#222"/><path d="M12 11V2" stroke="#222" stroke-width="1.4"/><path d="M4 12Q1 16 2 20" stroke="#2a8aa0" stroke-width="2" fill="none"/></svg>
<div style="position:absolute;left:320.4px;top:932px;width:1px;height:29px;background:#c8c8c8"></div>
<svg style="position:absolute;left:325.6px;top:936.0px;" width="20" height="20" viewBox="0 0 20 20"><path d="M10 1V19M1 10H19" stroke="#2a2a2a" stroke-width="4"/></svg>
<svg style="position:absolute;left:351.6px;top:936.0px;" width="20" height="20" viewBox="0 0 20 20"><path d="M1 10H19" stroke="#2a2a2a" stroke-width="4"/></svg>
<div style="position:absolute;left:376.4px;top:932px;width:1px;height:29px;background:#c8c8c8"></div>
<div style="position:absolute;left:382.3px;top:934.4px;width:23.6px;height:23.6px;background:#1e9a3e"></div>
<div style="position:absolute;left:399.90000000000003px;top:934.4px;width:6px;height:7px;background:#1a30e0"></div>
<div class="t" style="left:390.6px;top:940.1px;font-size:12.5px;color:#eaffea;font-weight:normal;">1</div>
<div style="position:absolute;left:410.05px;top:932.5px;width:26px;height:27px;background:#000"></div>
<div style="position:absolute;left:413.55px;top:936px;width:19px;height:20px;background:#0a3a0c;border:1.5px solid #fff;box-sizing:border-box"></div>
<div style="position:absolute;left:428.65000000000003px;top:934.4px;width:6px;height:7px;background:#1a30e0"></div>
<div class="t" style="left:419.4px;top:940.1px;font-size:12.5px;color:#cfe8c8;font-weight:normal;">2</div>
<div style="position:absolute;left:439.8px;top:934.4px;width:23.6px;height:23.6px;background:#d83a1e"></div>
<div style="position:absolute;left:457.40000000000003px;top:934.4px;width:6px;height:7px;background:#1a30e0"></div>
<div class="t" style="left:448.1px;top:940.1px;font-size:12.5px;color:#fff;font-weight:normal;">3</div>
<div style="position:absolute;left:468.55px;top:934.4px;width:23.6px;height:23.6px;background:#e81820"></div>
<div style="position:absolute;left:486.15000000000003px;top:934.4px;width:6px;height:7px;background:#1a30e0"></div>
<div class="t" style="left:476.9px;top:940.1px;font-size:12.5px;color:#fff;font-weight:normal;">4</div>
<div style="position:absolute;left:497.3px;top:934.4px;width:23.6px;height:23.6px;background:#f5cc18"></div>
<div style="position:absolute;left:514.9px;top:934.4px;width:6px;height:7px;background:#1a30e0"></div>
<div class="t" style="left:505.6px;top:940.1px;font-size:12.5px;color:#333;font-weight:normal;">5</div>
<div style="position:absolute;left:526.05px;top:934.4px;width:23.6px;height:23.6px;background:#ffffff"></div>
<div style="position:absolute;left:543.65px;top:934.4px;width:6px;height:7px;background:#1a30e0"></div>
<div class="t" style="left:534.4px;top:940.1px;font-size:12.5px;color:#222;font-weight:normal;">6</div>
<div style="position:absolute;left:554.8px;top:934.4px;width:23.6px;height:23.6px;background:#f5a040"></div>
<div style="position:absolute;left:572.4px;top:934.4px;width:6px;height:7px;background:#1a30e0"></div>
<div class="t" style="left:563.1px;top:940.1px;font-size:12.5px;color:#fff;font-weight:normal;">7</div>
<div style="position:absolute;left:583.55px;top:934.4px;width:23.6px;height:23.6px;background:#1e1e1e"></div>
<div class="t" style="left:591.9px;top:940.1px;font-size:12.5px;color:#fff;font-weight:normal;">8</div>
<div style="position:absolute;left:612.3px;top:934.4px;width:23.6px;height:23.6px;background:#ffffff"></div>
<div class="t" style="left:620.6px;top:940.1px;font-size:12.5px;color:#222;font-weight:normal;">9</div>
<div style="position:absolute;left:641.05px;top:934.4px;width:23.6px;height:23.6px;background:#1a2a72"></div>
<div class="t" style="left:645.9px;top:940.1px;font-size:12.5px;color:#fff;font-weight:normal;">10</div>
<div style="position:absolute;left:669.8px;top:934.4px;width:23.6px;height:23.6px;background:#a8142a"></div>
<div style="position:absolute;left:687.4px;top:934.4px;width:6px;height:7px;background:#1a30e0"></div>
<div class="t" style="left:675.1px;top:940.1px;font-size:12.5px;color:#fff;font-weight:normal;">11</div>
<div style="position:absolute;left:698.55px;top:934.4px;width:23.6px;height:23.6px;background:#e8a838"></div>
<div class="t" style="left:703.4px;top:940.1px;font-size:12.5px;color:#333;font-weight:normal;">12</div>
<div style="position:absolute;left:727.3px;top:934.4px;width:23.6px;height:23.6px;background:#6a6a6a"></div>
<div class="t" style="left:732.1px;top:940.1px;font-size:12.5px;color:#fff;font-weight:normal;">13</div>
<div style="position:absolute;left:756.05px;top:934.4px;width:23.6px;height:23.6px;background:#8a6a22"></div>
<div class="t" style="left:760.9px;top:940.1px;font-size:12.5px;color:#fff;font-weight:normal;">14</div>
<div style="position:absolute;left:784.8px;top:934.4px;width:23.6px;height:23.6px;background:#e8a0cc"></div>
<div class="t" style="left:789.6px;top:940.1px;font-size:12.5px;color:#333;font-weight:normal;">15</div>
<svg style="position:absolute;left:814.6px;top:935.0px;" width="10" height="22" viewBox="0 0 10 22"><path d="M1 6L5 1L9 6Z M1 15L5 20L9 15Z" fill="#aaa"/></svg>
<div style="position:absolute;left:830px;top:932px;width:1px;height:29px;background:#c8c8c8"></div>
<svg style="position:absolute;left:835.0px;top:935.0px;" width="22" height="22" viewBox="0 0 22 22"><rect x="1" y="3" width="5" height="16" fill="#3a8ad8"/><rect x="16" y="3" width="5" height="16" fill="#e05050"/><path d="M7 3V19M9 3V19M11 3V19M13 3V19" stroke="#c8a030" stroke-width="1.4"/><path d="M7 3L15 19" stroke="#333"/></svg>
<svg style="position:absolute;left:860.7px;top:935.0px;" width="22" height="22" viewBox="0 0 22 22"><rect x="1" y="3" width="5" height="16" fill="#3a8ad8"/><rect x="16" y="3" width="5" height="16" fill="#e05050"/><path d="M7 3L15 19M15 3L7 19" stroke="#222" stroke-width="1.6"/><rect x="2" y="1" width="3" height="3" fill="#1a30e0"/><rect x="17" y="1" width="3" height="3" fill="#1a30e0"/></svg>
<div style="position:absolute;left:887px;top:932px;width:1px;height:29px;background:#c8c8c8"></div>
<svg style="position:absolute;left:892.0px;top:935.0px;" width="22" height="22" viewBox="0 0 22 22"><rect x="2" y="3" width="18" height="16" fill="#f4f4f8" stroke="#bbb"/><path d="M1 2L21 21" stroke="#222" stroke-width="1.8"/></svg>
<div style="position:absolute;left:917px;top:932px;width:1px;height:29px;background:#c8c8c8"></div>
<svg style="position:absolute;left:923.0px;top:935.0px;" width="22" height="22" viewBox="0 0 22 22"><circle cx="11" cy="11" r="8" fill="none" stroke="#e05050" stroke-width="4"/><path d="M3 11A8 8 0 0 1 11 3" fill="none" stroke="#30a050" stroke-width="4"/><path d="M11 3A8 8 0 0 1 18 7" fill="none" stroke="#40b060" stroke-width="4"/></svg>
<svg style="position:absolute;left:948.5px;top:935.0px;" width="22" height="22" viewBox="0 0 22 22"><circle cx="11" cy="11" r="10" fill="#9ad0e0" stroke="#888" stroke-width="1"/><path d="M11 11L3 5A10 10 0 0 1 19 5Z" fill="#60c060"/><path d="M11 11L19 5A10 10 0 0 1 12 21Z" fill="#e05858"/></svg>
<div style="position:absolute;left:975px;top:932px;width:1px;height:29px;background:#c8c8c8"></div>
<svg style="position:absolute;left:980.0px;top:935.0px;" width="22" height="22" viewBox="0 0 22 22"><rect x="1" y="1" width="20" height="3.5" fill="#e8c880" stroke="#333" stroke-width="1"/><rect x="1" y="17.5" width="20" height="3.5" fill="#e8c880" stroke="#333" stroke-width="1"/><rect x="4" y="4.5" width="14" height="13" fill="#1ea0e8" stroke="#222" stroke-width="1.4"/></svg>
<div style="position:absolute;left:1313px;top:921px;width:230px;height:41px;background:#efefef"></div>
</body></html>
